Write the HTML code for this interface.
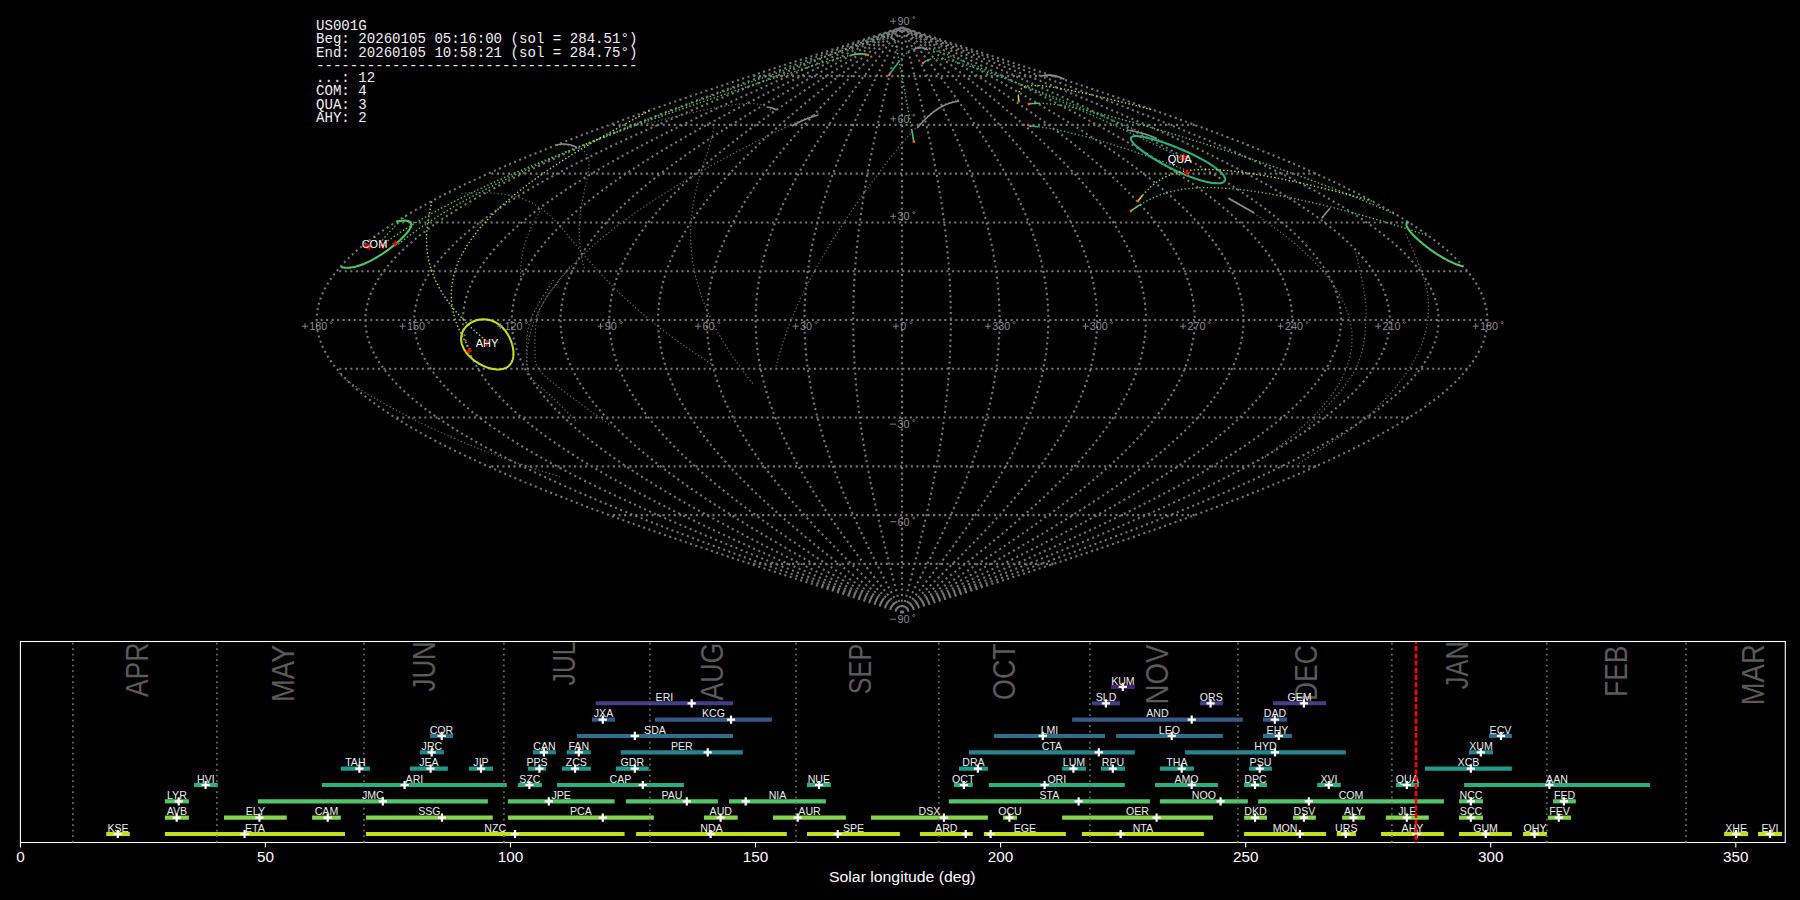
<!DOCTYPE html><html><head><meta charset="utf-8"><style>html,body{margin:0;padding:0;background:#000;width:1800px;height:900px;overflow:hidden}svg{display:block}</style></head><body>
<svg width="1800" height="900" viewBox="0 0 1800 900">
<rect width="1800" height="900" fill="#000"/>
<path d="M902.00 612.68 L907.11 611.05 L912.22 609.43 L917.32 607.80 L922.43 606.18 L927.53 604.55 L932.64 602.92 L937.74 601.30 L942.83 599.67 L947.93 598.05 L953.02 596.42 L958.10 594.79 L963.19 593.17 L968.26 591.54 L973.34 589.92 L978.40 588.29 L983.47 586.66 L988.52 585.04 L993.57 583.41 L998.61 581.79 L1003.65 580.16 L1008.67 578.53 L1013.69 576.91 L1018.70 575.28 L1023.70 573.66 L1028.70 572.03 L1033.68 570.40 L1038.65 568.78 L1043.61 567.15 L1048.56 565.53 L1053.50 563.90 L1058.43 562.27 L1063.35 560.65 L1068.25 559.02 L1073.14 557.40 L1078.02 555.77 L1082.89 554.14 L1087.74 552.52 L1092.57 550.89 L1097.40 549.27 L1102.20 547.64 L1107.00 546.01 L1111.77 544.39 L1116.54 542.76 L1121.28 541.14 L1126.01 539.51 L1130.72 537.88 L1135.41 536.26 L1140.09 534.63 L1144.74 533.01 L1149.38 531.38 L1154.00 529.75 L1158.60 528.13 L1163.19 526.50 L1167.75 524.88 L1172.29 523.25 L1176.81 521.62 L1181.31 520.00 L1185.79 518.37 L1190.25 516.75 L1194.68 515.12 L1199.09 513.49 L1203.48 511.87 L1207.85 510.24 L1212.19 508.62 L1216.51 506.99 L1220.81 505.36 L1225.08 503.74 L1229.33 502.11 L1233.55 500.49 L1237.75 498.86 L1241.92 497.23 L1246.07 495.61 L1250.19 493.98 L1254.28 492.36 L1258.34 490.73 L1262.38 489.10 L1266.40 487.48 L1270.38 485.85 L1274.33 484.23 L1278.26 482.60 L1282.16 480.97 L1286.03 479.35 L1289.87 477.72 L1293.68 476.10 L1297.46 474.47 L1301.21 472.84 L1304.94 471.22 L1308.63 469.59 L1312.28 467.97 L1315.91 466.34 L1319.51 464.71 L1323.07 463.09 L1326.61 461.46 L1330.11 459.84 L1333.57 458.21 L1337.01 456.58 L1340.41 454.96 L1343.78 453.33 L1347.11 451.71 L1350.41 450.08 L1353.68 448.45 L1356.91 446.83 L1360.11 445.20 L1363.27 443.58 L1366.40 441.95 L1369.49 440.32 L1372.55 438.70 L1375.57 437.07 L1378.55 435.45 L1381.50 433.82 L1384.41 432.19 L1387.29 430.57 L1390.12 428.94 L1392.92 427.32 L1395.69 425.69 L1398.41 424.06 L1401.10 422.44 L1403.75 420.81 L1406.36 419.19 L1408.94 417.56 L1411.47 415.93 L1413.97 414.31 L1416.42 412.68 L1418.84 411.06 L1421.22 409.43 L1423.56 407.80 L1425.86 406.18 L1428.12 404.55 L1430.34 402.93 L1432.52 401.30 L1434.65 399.67 L1436.75 398.05 L1438.81 396.42 L1440.83 394.80 L1442.80 393.17 L1444.74 391.54 L1446.63 389.92 L1448.48 388.29 L1450.29 386.67 L1452.06 385.04 L1453.78 383.41 L1455.47 381.79 L1457.11 380.16 L1458.71 378.54 L1460.27 376.91 L1461.78 375.28 L1463.25 373.66 L1464.68 372.03 L1466.07 370.41 L1467.41 368.78 L1468.71 367.15 L1469.97 365.53 L1471.19 363.90 L1472.36 362.28 L1473.48 360.65 L1474.57 359.02 L1475.61 357.40 L1476.61 355.77 L1477.56 354.15 L1478.47 352.52 L1479.33 350.89 L1480.15 349.27 L1480.93 347.64 L1481.66 346.02 L1482.35 344.39 L1483.00 342.76 L1483.60 341.14 L1484.15 339.51 L1484.67 337.89 L1485.13 336.26 L1485.56 334.63 L1485.93 333.01 L1486.27 331.38 L1486.56 329.76 L1486.80 328.13 L1487.00 326.50 L1487.16 324.88 L1487.27 323.25 L1487.34 321.63 L1487.36 320.00 L1487.34 318.37 L1487.27 316.75 L1487.16 315.12 L1487.00 313.50 L1486.80 311.87 L1486.56 310.24 L1486.27 308.62 L1485.93 306.99 L1485.56 305.37 L1485.13 303.74 L1484.67 302.11 L1484.15 300.49 L1483.60 298.86 L1483.00 297.24 L1482.35 295.61 L1481.66 293.98 L1480.93 292.36 L1480.15 290.73 L1479.33 289.11 L1478.47 287.48 L1477.56 285.85 L1476.61 284.23 L1475.61 282.60 L1474.57 280.98 L1473.48 279.35 L1472.36 277.72 L1471.19 276.10 L1469.97 274.47 L1468.71 272.85 L1467.41 271.22 L1466.07 269.59 L1464.68 267.97 L1463.25 266.34 L1461.78 264.72 L1460.27 263.09 L1458.71 261.46 L1457.11 259.84 L1455.47 258.21 L1453.78 256.59 L1452.06 254.96 L1450.29 253.33 L1448.48 251.71 L1446.63 250.08 L1444.74 248.46 L1442.80 246.83 L1440.83 245.20 L1438.81 243.58 L1436.75 241.95 L1434.65 240.33 L1432.52 238.70 L1430.34 237.07 L1428.12 235.45 L1425.86 233.82 L1423.56 232.20 L1421.22 230.57 L1418.84 228.94 L1416.42 227.32 L1413.97 225.69 L1411.47 224.07 L1408.94 222.44 L1406.36 220.81 L1403.75 219.19 L1401.10 217.56 L1398.41 215.94 L1395.69 214.31 L1392.92 212.68 L1390.12 211.06 L1387.29 209.43 L1384.41 207.81 L1381.50 206.18 L1378.55 204.55 L1375.57 202.93 L1372.55 201.30 L1369.49 199.68 L1366.40 198.05 L1363.27 196.42 L1360.11 194.80 L1356.91 193.17 L1353.68 191.55 L1350.41 189.92 L1347.11 188.29 L1343.78 186.67 L1340.41 185.04 L1337.01 183.42 L1333.57 181.79 L1330.11 180.16 L1326.61 178.54 L1323.07 176.91 L1319.51 175.29 L1315.91 173.66 L1312.28 172.03 L1308.63 170.41 L1304.94 168.78 L1301.21 167.16 L1297.46 165.53 L1293.68 163.90 L1289.87 162.28 L1286.03 160.65 L1282.16 159.03 L1278.26 157.40 L1274.33 155.77 L1270.38 154.15 L1266.40 152.52 L1262.38 150.90 L1258.34 149.27 L1254.28 147.64 L1250.19 146.02 L1246.07 144.39 L1241.92 142.77 L1237.75 141.14 L1233.55 139.51 L1229.33 137.89 L1225.08 136.26 L1220.81 134.64 L1216.51 133.01 L1212.19 131.38 L1207.85 129.76 L1203.48 128.13 L1199.09 126.51 L1194.68 124.88 L1190.25 123.25 L1185.79 121.63 L1181.31 120.00 L1176.81 118.38 L1172.29 116.75 L1167.75 115.12 L1163.19 113.50 L1158.60 111.87 L1154.00 110.25 L1149.38 108.62 L1144.74 106.99 L1140.09 105.37 L1135.41 103.74 L1130.72 102.12 L1126.01 100.49 L1121.28 98.86 L1116.54 97.24 L1111.77 95.61 L1107.00 93.99 L1102.20 92.36 L1097.40 90.73 L1092.57 89.11 L1087.74 87.48 L1082.89 85.86 L1078.02 84.23 L1073.14 82.60 L1068.25 80.98 L1063.35 79.35 L1058.43 77.73 L1053.50 76.10 L1048.56 74.47 L1043.61 72.85 L1038.65 71.22 L1033.68 69.60 L1028.70 67.97 L1023.70 66.34 L1018.70 64.72 L1013.69 63.09 L1008.67 61.47 L1003.65 59.84 L998.61 58.21 L993.57 56.59 L988.52 54.96 L983.47 53.34 L978.40 51.71 L973.34 50.08 L968.26 48.46 L963.19 46.83 L958.10 45.21 L953.02 43.58 L947.93 41.95 L942.83 40.33 L937.74 38.70 L932.64 37.08 L927.53 35.45 L922.43 33.82 L917.32 32.20 L912.22 30.57 L907.11 28.95 L902.00 27.32 M902.00 612.68 L906.68 611.05 L911.36 609.43 L916.05 607.80 L920.73 606.18 L925.41 604.55 L930.08 602.92 L934.76 601.30 L939.43 599.67 L944.10 598.05 L948.77 596.42 L953.43 594.79 L958.09 593.17 L962.74 591.54 L967.39 589.92 L972.04 588.29 L976.68 586.66 L981.31 585.04 L985.94 583.41 L990.56 581.79 L995.18 580.16 L999.78 578.53 L1004.38 576.91 L1008.98 575.28 L1013.56 573.66 L1018.14 572.03 L1022.70 570.40 L1027.26 568.78 L1031.81 567.15 L1036.35 565.53 L1040.88 563.90 L1045.39 562.27 L1049.90 560.65 L1054.40 559.02 L1058.88 557.40 L1063.35 555.77 L1067.81 554.14 L1072.26 552.52 L1076.69 550.89 L1081.11 549.27 L1085.52 547.64 L1089.91 546.01 L1094.29 544.39 L1098.66 542.76 L1103.01 541.14 L1107.34 539.51 L1111.66 537.88 L1115.96 536.26 L1120.25 534.63 L1124.52 533.01 L1128.77 531.38 L1133.00 529.75 L1137.22 528.13 L1141.42 526.50 L1145.60 524.88 L1149.77 523.25 L1153.91 521.62 L1158.03 520.00 L1162.14 518.37 L1166.22 516.75 L1170.29 515.12 L1174.33 513.49 L1178.36 511.87 L1182.36 510.24 L1186.34 508.62 L1190.30 506.99 L1194.24 505.36 L1198.16 503.74 L1202.05 502.11 L1205.92 500.49 L1209.77 498.86 L1213.59 497.23 L1217.39 495.61 L1221.17 493.98 L1224.92 492.36 L1228.65 490.73 L1232.35 489.10 L1236.03 487.48 L1239.68 485.85 L1243.31 484.23 L1246.91 482.60 L1250.48 480.97 L1254.03 479.35 L1257.55 477.72 L1261.04 476.10 L1264.51 474.47 L1267.95 472.84 L1271.36 471.22 L1274.74 469.59 L1278.09 467.97 L1281.42 466.34 L1284.72 464.71 L1287.98 463.09 L1291.22 461.46 L1294.43 459.84 L1297.61 458.21 L1300.76 456.58 L1303.87 454.96 L1306.96 453.33 L1310.02 451.71 L1313.04 450.08 L1316.04 448.45 L1319.00 446.83 L1321.93 445.20 L1324.83 443.58 L1327.70 441.95 L1330.53 440.32 L1333.33 438.70 L1336.10 437.07 L1338.84 435.45 L1341.54 433.82 L1344.21 432.19 L1346.84 430.57 L1349.45 428.94 L1352.01 427.32 L1354.55 425.69 L1357.05 424.06 L1359.51 422.44 L1361.94 420.81 L1364.33 419.19 L1366.69 417.56 L1369.02 415.93 L1371.30 414.31 L1373.56 412.68 L1375.77 411.06 L1377.95 409.43 L1380.10 407.80 L1382.20 406.18 L1384.27 404.55 L1386.31 402.93 L1388.31 401.30 L1390.27 399.67 L1392.19 398.05 L1394.08 396.42 L1395.92 394.80 L1397.74 393.17 L1399.51 391.54 L1401.24 389.92 L1402.94 388.29 L1404.60 386.67 L1406.22 385.04 L1407.80 383.41 L1409.35 381.79 L1410.85 380.16 L1412.32 378.54 L1413.75 376.91 L1415.13 375.28 L1416.48 373.66 L1417.79 372.03 L1419.06 370.41 L1420.30 368.78 L1421.49 367.15 L1422.64 365.53 L1423.75 363.90 L1424.83 362.28 L1425.86 360.65 L1426.85 359.02 L1427.81 357.40 L1428.72 355.77 L1429.59 354.15 L1430.43 352.52 L1431.22 350.89 L1431.97 349.27 L1432.69 347.64 L1433.36 346.02 L1433.99 344.39 L1434.58 342.76 L1435.13 341.14 L1435.64 339.51 L1436.11 337.89 L1436.54 336.26 L1436.93 334.63 L1437.27 333.01 L1437.58 331.38 L1437.84 329.76 L1438.07 328.13 L1438.25 326.50 L1438.40 324.88 L1438.50 323.25 L1438.56 321.63 L1438.58 320.00 L1438.56 318.37 L1438.50 316.75 L1438.40 315.12 L1438.25 313.50 L1438.07 311.87 L1437.84 310.24 L1437.58 308.62 L1437.27 306.99 L1436.93 305.37 L1436.54 303.74 L1436.11 302.11 L1435.64 300.49 L1435.13 298.86 L1434.58 297.24 L1433.99 295.61 L1433.36 293.98 L1432.69 292.36 L1431.97 290.73 L1431.22 289.11 L1430.43 287.48 L1429.59 285.85 L1428.72 284.23 L1427.81 282.60 L1426.85 280.98 L1425.86 279.35 L1424.83 277.72 L1423.75 276.10 L1422.64 274.47 L1421.49 272.85 L1420.30 271.22 L1419.06 269.59 L1417.79 267.97 L1416.48 266.34 L1415.13 264.72 L1413.75 263.09 L1412.32 261.46 L1410.85 259.84 L1409.35 258.21 L1407.80 256.59 L1406.22 254.96 L1404.60 253.33 L1402.94 251.71 L1401.24 250.08 L1399.51 248.46 L1397.74 246.83 L1395.92 245.20 L1394.08 243.58 L1392.19 241.95 L1390.27 240.33 L1388.31 238.70 L1386.31 237.07 L1384.27 235.45 L1382.20 233.82 L1380.10 232.20 L1377.95 230.57 L1375.77 228.94 L1373.56 227.32 L1371.30 225.69 L1369.02 224.07 L1366.69 222.44 L1364.33 220.81 L1361.94 219.19 L1359.51 217.56 L1357.05 215.94 L1354.55 214.31 L1352.01 212.68 L1349.45 211.06 L1346.84 209.43 L1344.21 207.81 L1341.54 206.18 L1338.84 204.55 L1336.10 202.93 L1333.33 201.30 L1330.53 199.68 L1327.70 198.05 L1324.83 196.42 L1321.93 194.80 L1319.00 193.17 L1316.04 191.55 L1313.04 189.92 L1310.02 188.29 L1306.96 186.67 L1303.87 185.04 L1300.76 183.42 L1297.61 181.79 L1294.43 180.16 L1291.22 178.54 L1287.98 176.91 L1284.72 175.29 L1281.42 173.66 L1278.09 172.03 L1274.74 170.41 L1271.36 168.78 L1267.95 167.16 L1264.51 165.53 L1261.04 163.90 L1257.55 162.28 L1254.03 160.65 L1250.48 159.03 L1246.91 157.40 L1243.31 155.77 L1239.68 154.15 L1236.03 152.52 L1232.35 150.90 L1228.65 149.27 L1224.92 147.64 L1221.17 146.02 L1217.39 144.39 L1213.59 142.77 L1209.77 141.14 L1205.92 139.51 L1202.05 137.89 L1198.16 136.26 L1194.24 134.64 L1190.30 133.01 L1186.34 131.38 L1182.36 129.76 L1178.36 128.13 L1174.33 126.51 L1170.29 124.88 L1166.22 123.25 L1162.14 121.63 L1158.03 120.00 L1153.91 118.38 L1149.77 116.75 L1145.60 115.12 L1141.42 113.50 L1137.22 111.87 L1133.00 110.25 L1128.77 108.62 L1124.52 106.99 L1120.25 105.37 L1115.96 103.74 L1111.66 102.12 L1107.34 100.49 L1103.01 98.86 L1098.66 97.24 L1094.29 95.61 L1089.91 93.99 L1085.52 92.36 L1081.11 90.73 L1076.69 89.11 L1072.26 87.48 L1067.81 85.86 L1063.35 84.23 L1058.88 82.60 L1054.40 80.98 L1049.90 79.35 L1045.39 77.73 L1040.88 76.10 L1036.35 74.47 L1031.81 72.85 L1027.26 71.22 L1022.70 69.60 L1018.14 67.97 L1013.56 66.34 L1008.98 64.72 L1004.38 63.09 L999.78 61.47 L995.18 59.84 L990.56 58.21 L985.94 56.59 L981.31 54.96 L976.68 53.34 L972.04 51.71 L967.39 50.08 L962.74 48.46 L958.09 46.83 L953.43 45.21 L948.77 43.58 L944.10 41.95 L939.43 40.33 L934.76 38.70 L930.08 37.08 L925.41 35.45 L920.73 33.82 L916.05 32.20 L911.36 30.57 L906.68 28.95 L902.00 27.32 M902.00 612.68 L906.26 611.05 L910.51 609.43 L914.77 607.80 L919.02 606.18 L923.28 604.55 L927.53 602.92 L931.78 601.30 L936.03 599.67 L940.27 598.05 L944.51 596.42 L948.75 594.79 L952.99 593.17 L957.22 591.54 L961.45 589.92 L965.67 588.29 L969.89 586.66 L974.10 585.04 L978.31 583.41 L982.51 581.79 L986.71 580.16 L990.89 578.53 L995.08 576.91 L999.25 575.28 L1003.42 573.66 L1007.58 572.03 L1011.73 570.40 L1015.87 568.78 L1020.01 567.15 L1024.14 565.53 L1028.25 563.90 L1032.36 562.27 L1036.46 560.65 L1040.54 559.02 L1044.62 557.40 L1048.68 555.77 L1052.74 554.14 L1056.78 552.52 L1060.81 550.89 L1064.83 549.27 L1068.84 547.64 L1072.83 546.01 L1076.81 544.39 L1080.78 542.76 L1084.73 541.14 L1088.67 539.51 L1092.60 537.88 L1096.51 536.26 L1100.41 534.63 L1104.29 533.01 L1108.15 531.38 L1112.00 529.75 L1115.84 528.13 L1119.66 526.50 L1123.46 524.88 L1127.24 523.25 L1131.01 521.62 L1134.76 520.00 L1138.49 518.37 L1142.20 516.75 L1145.90 515.12 L1149.58 513.49 L1153.24 511.87 L1156.87 510.24 L1160.49 508.62 L1164.09 506.99 L1167.67 505.36 L1171.23 503.74 L1174.77 502.11 L1178.29 500.49 L1181.79 498.86 L1185.27 497.23 L1188.72 495.61 L1192.15 493.98 L1195.57 492.36 L1198.95 490.73 L1202.32 489.10 L1205.66 487.48 L1208.98 485.85 L1212.28 484.23 L1215.55 482.60 L1218.80 480.97 L1222.03 479.35 L1225.23 477.72 L1228.40 476.10 L1231.55 474.47 L1234.68 472.84 L1237.78 471.22 L1240.85 469.59 L1243.90 467.97 L1246.93 466.34 L1249.92 464.71 L1252.89 463.09 L1255.84 461.46 L1258.75 459.84 L1261.64 458.21 L1264.51 456.58 L1267.34 454.96 L1270.15 453.33 L1272.93 451.71 L1275.68 450.08 L1278.40 448.45 L1281.09 446.83 L1283.76 445.20 L1286.39 443.58 L1289.00 441.95 L1291.57 440.32 L1294.12 438.70 L1296.64 437.07 L1299.13 435.45 L1301.58 433.82 L1304.01 432.19 L1306.40 430.57 L1308.77 428.94 L1311.10 427.32 L1313.41 425.69 L1315.68 424.06 L1317.92 422.44 L1320.13 420.81 L1322.30 419.19 L1324.45 417.56 L1326.56 415.93 L1328.64 414.31 L1330.69 412.68 L1332.70 411.06 L1334.68 409.43 L1336.63 407.80 L1338.55 406.18 L1340.43 404.55 L1342.28 402.93 L1344.10 401.30 L1345.88 399.67 L1347.63 398.05 L1349.34 396.42 L1351.02 394.80 L1352.67 393.17 L1354.28 391.54 L1355.86 389.92 L1357.40 388.29 L1358.91 386.67 L1360.38 385.04 L1361.82 383.41 L1363.22 381.79 L1364.59 380.16 L1365.93 378.54 L1367.22 376.91 L1368.49 375.28 L1369.71 373.66 L1370.90 372.03 L1372.06 370.41 L1373.18 368.78 L1374.26 367.15 L1375.31 365.53 L1376.32 363.90 L1377.30 362.28 L1378.24 360.65 L1379.14 359.02 L1380.01 357.40 L1380.84 355.77 L1381.63 354.15 L1382.39 352.52 L1383.11 350.89 L1383.79 349.27 L1384.44 347.64 L1385.05 346.02 L1385.63 344.39 L1386.16 342.76 L1386.66 341.14 L1387.13 339.51 L1387.55 337.89 L1387.94 336.26 L1388.30 334.63 L1388.61 333.01 L1388.89 331.38 L1389.13 329.76 L1389.34 328.13 L1389.50 326.50 L1389.63 324.88 L1389.73 323.25 L1389.78 321.63 L1389.80 320.00 L1389.78 318.37 L1389.73 316.75 L1389.63 315.12 L1389.50 313.50 L1389.34 311.87 L1389.13 310.24 L1388.89 308.62 L1388.61 306.99 L1388.30 305.37 L1387.94 303.74 L1387.55 302.11 L1387.13 300.49 L1386.66 298.86 L1386.16 297.24 L1385.63 295.61 L1385.05 293.98 L1384.44 292.36 L1383.79 290.73 L1383.11 289.11 L1382.39 287.48 L1381.63 285.85 L1380.84 284.23 L1380.01 282.60 L1379.14 280.98 L1378.24 279.35 L1377.30 277.72 L1376.32 276.10 L1375.31 274.47 L1374.26 272.85 L1373.18 271.22 L1372.06 269.59 L1370.90 267.97 L1369.71 266.34 L1368.49 264.72 L1367.22 263.09 L1365.93 261.46 L1364.59 259.84 L1363.22 258.21 L1361.82 256.59 L1360.38 254.96 L1358.91 253.33 L1357.40 251.71 L1355.86 250.08 L1354.28 248.46 L1352.67 246.83 L1351.02 245.20 L1349.34 243.58 L1347.63 241.95 L1345.88 240.33 L1344.10 238.70 L1342.28 237.07 L1340.43 235.45 L1338.55 233.82 L1336.63 232.20 L1334.68 230.57 L1332.70 228.94 L1330.69 227.32 L1328.64 225.69 L1326.56 224.07 L1324.45 222.44 L1322.30 220.81 L1320.13 219.19 L1317.92 217.56 L1315.68 215.94 L1313.41 214.31 L1311.10 212.68 L1308.77 211.06 L1306.40 209.43 L1304.01 207.81 L1301.58 206.18 L1299.13 204.55 L1296.64 202.93 L1294.12 201.30 L1291.57 199.68 L1289.00 198.05 L1286.39 196.42 L1283.76 194.80 L1281.09 193.17 L1278.40 191.55 L1275.68 189.92 L1272.93 188.29 L1270.15 186.67 L1267.34 185.04 L1264.51 183.42 L1261.64 181.79 L1258.75 180.16 L1255.84 178.54 L1252.89 176.91 L1249.92 175.29 L1246.93 173.66 L1243.90 172.03 L1240.85 170.41 L1237.78 168.78 L1234.68 167.16 L1231.55 165.53 L1228.40 163.90 L1225.23 162.28 L1222.03 160.65 L1218.80 159.03 L1215.55 157.40 L1212.28 155.77 L1208.98 154.15 L1205.66 152.52 L1202.32 150.90 L1198.95 149.27 L1195.57 147.64 L1192.15 146.02 L1188.72 144.39 L1185.27 142.77 L1181.79 141.14 L1178.29 139.51 L1174.77 137.89 L1171.23 136.26 L1167.67 134.64 L1164.09 133.01 L1160.49 131.38 L1156.87 129.76 L1153.24 128.13 L1149.58 126.51 L1145.90 124.88 L1142.20 123.25 L1138.49 121.63 L1134.76 120.00 L1131.01 118.38 L1127.24 116.75 L1123.46 115.12 L1119.66 113.50 L1115.84 111.87 L1112.00 110.25 L1108.15 108.62 L1104.29 106.99 L1100.41 105.37 L1096.51 103.74 L1092.60 102.12 L1088.67 100.49 L1084.73 98.86 L1080.78 97.24 L1076.81 95.61 L1072.83 93.99 L1068.84 92.36 L1064.83 90.73 L1060.81 89.11 L1056.78 87.48 L1052.74 85.86 L1048.68 84.23 L1044.62 82.60 L1040.54 80.98 L1036.46 79.35 L1032.36 77.73 L1028.25 76.10 L1024.14 74.47 L1020.01 72.85 L1015.87 71.22 L1011.73 69.60 L1007.58 67.97 L1003.42 66.34 L999.25 64.72 L995.08 63.09 L990.89 61.47 L986.71 59.84 L982.51 58.21 L978.31 56.59 L974.10 54.96 L969.89 53.34 L965.67 51.71 L961.45 50.08 L957.22 48.46 L952.99 46.83 L948.75 45.21 L944.51 43.58 L940.27 41.95 L936.03 40.33 L931.78 38.70 L927.53 37.08 L923.28 35.45 L919.02 33.82 L914.77 32.20 L910.51 30.57 L906.26 28.95 L902.00 27.32 M902.00 612.68 L905.83 611.05 L909.66 609.43 L913.49 607.80 L917.32 606.18 L921.15 604.55 L924.98 602.92 L928.80 601.30 L932.62 599.67 L936.45 598.05 L940.26 596.42 L944.08 594.79 L947.89 593.17 L951.70 591.54 L955.50 589.92 L959.30 588.29 L963.10 586.66 L966.89 585.04 L970.68 583.41 L974.46 581.79 L978.24 580.16 L982.01 578.53 L985.77 576.91 L989.53 575.28 L993.28 573.66 L997.02 572.03 L1000.76 570.40 L1004.49 568.78 L1008.21 567.15 L1011.92 565.53 L1015.63 563.90 L1019.32 562.27 L1023.01 560.65 L1026.69 559.02 L1030.36 557.40 L1034.02 555.77 L1037.66 554.14 L1041.30 552.52 L1044.93 550.89 L1048.55 549.27 L1052.15 547.64 L1055.75 546.01 L1059.33 544.39 L1062.90 542.76 L1066.46 541.14 L1070.01 539.51 L1073.54 537.88 L1077.06 536.26 L1080.57 534.63 L1084.06 533.01 L1087.54 531.38 L1091.00 529.75 L1094.45 528.13 L1097.89 526.50 L1101.31 524.88 L1104.72 523.25 L1108.11 521.62 L1111.48 520.00 L1114.84 518.37 L1118.18 516.75 L1121.51 515.12 L1124.82 513.49 L1128.11 511.87 L1131.39 510.24 L1134.65 508.62 L1137.89 506.99 L1141.11 505.36 L1144.31 503.74 L1147.50 502.11 L1150.66 500.49 L1153.81 498.86 L1156.94 497.23 L1160.05 495.61 L1163.14 493.98 L1166.21 492.36 L1169.26 490.73 L1172.29 489.10 L1175.30 487.48 L1178.28 485.85 L1181.25 484.23 L1184.20 482.60 L1187.12 480.97 L1190.02 479.35 L1192.90 477.72 L1195.76 476.10 L1198.60 474.47 L1201.41 472.84 L1204.20 471.22 L1206.97 469.59 L1209.71 467.97 L1212.43 466.34 L1215.13 464.71 L1217.80 463.09 L1220.45 461.46 L1223.08 459.84 L1225.68 458.21 L1228.26 456.58 L1230.81 454.96 L1233.33 453.33 L1235.83 451.71 L1238.31 450.08 L1240.76 448.45 L1243.18 446.83 L1245.58 445.20 L1247.95 443.58 L1250.30 441.95 L1252.62 440.32 L1254.91 438.70 L1257.17 437.07 L1259.41 435.45 L1261.62 433.82 L1263.81 432.19 L1265.96 430.57 L1268.09 428.94 L1270.19 427.32 L1272.27 425.69 L1274.31 424.06 L1276.33 422.44 L1278.31 420.81 L1280.27 419.19 L1282.20 417.56 L1284.10 415.93 L1285.98 414.31 L1287.82 412.68 L1289.63 411.06 L1291.42 409.43 L1293.17 407.80 L1294.89 406.18 L1296.59 404.55 L1298.25 402.93 L1299.89 401.30 L1301.49 399.67 L1303.06 398.05 L1304.61 396.42 L1306.12 394.80 L1307.60 393.17 L1309.05 391.54 L1310.47 389.92 L1311.86 388.29 L1313.22 386.67 L1314.54 385.04 L1315.84 383.41 L1317.10 381.79 L1318.33 380.16 L1319.53 378.54 L1320.70 376.91 L1321.84 375.28 L1322.94 373.66 L1324.01 372.03 L1325.05 370.41 L1326.06 368.78 L1327.04 367.15 L1327.98 365.53 L1328.89 363.90 L1329.77 362.28 L1330.61 360.65 L1331.43 359.02 L1332.21 357.40 L1332.95 355.77 L1333.67 354.15 L1334.35 352.52 L1335.00 350.89 L1335.61 349.27 L1336.20 347.64 L1336.75 346.02 L1337.26 344.39 L1337.75 342.76 L1338.20 341.14 L1338.62 339.51 L1339.00 337.89 L1339.35 336.26 L1339.67 334.63 L1339.95 333.01 L1340.20 331.38 L1340.42 329.76 L1340.60 328.13 L1340.75 326.50 L1340.87 324.88 L1340.95 323.25 L1341.00 321.63 L1341.02 320.00 L1341.00 318.37 L1340.95 316.75 L1340.87 315.12 L1340.75 313.50 L1340.60 311.87 L1340.42 310.24 L1340.20 308.62 L1339.95 306.99 L1339.67 305.37 L1339.35 303.74 L1339.00 302.11 L1338.62 300.49 L1338.20 298.86 L1337.75 297.24 L1337.26 295.61 L1336.75 293.98 L1336.20 292.36 L1335.61 290.73 L1335.00 289.11 L1334.35 287.48 L1333.67 285.85 L1332.95 284.23 L1332.21 282.60 L1331.43 280.98 L1330.61 279.35 L1329.77 277.72 L1328.89 276.10 L1327.98 274.47 L1327.04 272.85 L1326.06 271.22 L1325.05 269.59 L1324.01 267.97 L1322.94 266.34 L1321.84 264.72 L1320.70 263.09 L1319.53 261.46 L1318.33 259.84 L1317.10 258.21 L1315.84 256.59 L1314.54 254.96 L1313.22 253.33 L1311.86 251.71 L1310.47 250.08 L1309.05 248.46 L1307.60 246.83 L1306.12 245.20 L1304.61 243.58 L1303.06 241.95 L1301.49 240.33 L1299.89 238.70 L1298.25 237.07 L1296.59 235.45 L1294.89 233.82 L1293.17 232.20 L1291.42 230.57 L1289.63 228.94 L1287.82 227.32 L1285.98 225.69 L1284.10 224.07 L1282.20 222.44 L1280.27 220.81 L1278.31 219.19 L1276.33 217.56 L1274.31 215.94 L1272.27 214.31 L1270.19 212.68 L1268.09 211.06 L1265.96 209.43 L1263.81 207.81 L1261.62 206.18 L1259.41 204.55 L1257.17 202.93 L1254.91 201.30 L1252.62 199.68 L1250.30 198.05 L1247.95 196.42 L1245.58 194.80 L1243.18 193.17 L1240.76 191.55 L1238.31 189.92 L1235.83 188.29 L1233.33 186.67 L1230.81 185.04 L1228.26 183.42 L1225.68 181.79 L1223.08 180.16 L1220.45 178.54 L1217.80 176.91 L1215.13 175.29 L1212.43 173.66 L1209.71 172.03 L1206.97 170.41 L1204.20 168.78 L1201.41 167.16 L1198.60 165.53 L1195.76 163.90 L1192.90 162.28 L1190.02 160.65 L1187.12 159.03 L1184.20 157.40 L1181.25 155.77 L1178.28 154.15 L1175.30 152.52 L1172.29 150.90 L1169.26 149.27 L1166.21 147.64 L1163.14 146.02 L1160.05 144.39 L1156.94 142.77 L1153.81 141.14 L1150.66 139.51 L1147.50 137.89 L1144.31 136.26 L1141.11 134.64 L1137.89 133.01 L1134.65 131.38 L1131.39 129.76 L1128.11 128.13 L1124.82 126.51 L1121.51 124.88 L1118.18 123.25 L1114.84 121.63 L1111.48 120.00 L1108.11 118.38 L1104.72 116.75 L1101.31 115.12 L1097.89 113.50 L1094.45 111.87 L1091.00 110.25 L1087.54 108.62 L1084.06 106.99 L1080.57 105.37 L1077.06 103.74 L1073.54 102.12 L1070.01 100.49 L1066.46 98.86 L1062.90 97.24 L1059.33 95.61 L1055.75 93.99 L1052.15 92.36 L1048.55 90.73 L1044.93 89.11 L1041.30 87.48 L1037.66 85.86 L1034.02 84.23 L1030.36 82.60 L1026.69 80.98 L1023.01 79.35 L1019.32 77.73 L1015.63 76.10 L1011.92 74.47 L1008.21 72.85 L1004.49 71.22 L1000.76 69.60 L997.02 67.97 L993.28 66.34 L989.53 64.72 L985.77 63.09 L982.01 61.47 L978.24 59.84 L974.46 58.21 L970.68 56.59 L966.89 54.96 L963.10 53.34 L959.30 51.71 L955.50 50.08 L951.70 48.46 L947.89 46.83 L944.08 45.21 L940.26 43.58 L936.45 41.95 L932.62 40.33 L928.80 38.70 L924.98 37.08 L921.15 35.45 L917.32 33.82 L913.49 32.20 L909.66 30.57 L905.83 28.95 L902.00 27.32 M902.00 612.68 L905.41 611.05 L908.81 609.43 L912.22 607.80 L915.62 606.18 L919.02 604.55 L922.42 602.92 L925.82 601.30 L929.22 599.67 L932.62 598.05 L936.01 596.42 L939.40 594.79 L942.79 593.17 L946.18 591.54 L949.56 589.92 L952.94 588.29 L956.31 586.66 L959.68 585.04 L963.05 583.41 L966.41 581.79 L969.76 580.16 L973.12 578.53 L976.46 576.91 L979.80 575.28 L983.14 573.66 L986.46 572.03 L989.78 570.40 L993.10 568.78 L996.41 567.15 L999.71 565.53 L1003.00 563.90 L1006.29 562.27 L1009.56 560.65 L1012.83 559.02 L1016.10 557.40 L1019.35 555.77 L1022.59 554.14 L1025.82 552.52 L1029.05 550.89 L1032.26 549.27 L1035.47 547.64 L1038.66 546.01 L1041.85 544.39 L1045.02 542.76 L1048.19 541.14 L1051.34 539.51 L1054.48 537.88 L1057.61 536.26 L1060.72 534.63 L1063.83 533.01 L1066.92 531.38 L1070.00 529.75 L1073.07 528.13 L1076.12 526.50 L1079.17 524.88 L1082.19 523.25 L1085.21 521.62 L1088.21 520.00 L1091.19 518.37 L1094.16 516.75 L1097.12 515.12 L1100.06 513.49 L1102.99 511.87 L1105.90 510.24 L1108.80 508.62 L1111.68 506.99 L1114.54 505.36 L1117.39 503.74 L1120.22 502.11 L1123.03 500.49 L1125.83 498.86 L1128.61 497.23 L1131.38 495.61 L1134.12 493.98 L1136.85 492.36 L1139.56 490.73 L1142.26 489.10 L1144.93 487.48 L1147.59 485.85 L1150.22 484.23 L1152.84 482.60 L1155.44 480.97 L1158.02 479.35 L1160.58 477.72 L1163.12 476.10 L1165.64 474.47 L1168.14 472.84 L1170.62 471.22 L1173.08 469.59 L1175.52 467.97 L1177.94 466.34 L1180.34 464.71 L1182.72 463.09 L1185.07 461.46 L1187.40 459.84 L1189.72 458.21 L1192.00 456.58 L1194.27 454.96 L1196.52 453.33 L1198.74 451.71 L1200.94 450.08 L1203.12 448.45 L1205.27 446.83 L1207.41 445.20 L1209.51 443.58 L1211.60 441.95 L1213.66 440.32 L1215.70 438.70 L1217.71 437.07 L1219.70 435.45 L1221.67 433.82 L1223.61 432.19 L1225.52 430.57 L1227.42 428.94 L1229.28 427.32 L1231.13 425.69 L1232.94 424.06 L1234.73 422.44 L1236.50 420.81 L1238.24 419.19 L1239.96 417.56 L1241.65 415.93 L1243.31 414.31 L1244.95 412.68 L1246.56 411.06 L1248.15 409.43 L1249.71 407.80 L1251.24 406.18 L1252.75 404.55 L1254.22 402.93 L1255.68 401.30 L1257.10 399.67 L1258.50 398.05 L1259.87 396.42 L1261.22 394.80 L1262.53 393.17 L1263.82 391.54 L1265.09 389.92 L1266.32 388.29 L1267.53 386.67 L1268.71 385.04 L1269.86 383.41 L1270.98 381.79 L1272.07 380.16 L1273.14 378.54 L1274.18 376.91 L1275.19 375.28 L1276.17 373.66 L1277.12 372.03 L1278.05 370.41 L1278.94 368.78 L1279.81 367.15 L1280.65 365.53 L1281.46 363.90 L1282.24 362.28 L1282.99 360.65 L1283.71 359.02 L1284.41 357.40 L1285.07 355.77 L1285.71 354.15 L1286.31 352.52 L1286.89 350.89 L1287.44 349.27 L1287.95 347.64 L1288.44 346.02 L1288.90 344.39 L1289.33 342.76 L1289.73 341.14 L1290.10 339.51 L1290.44 337.89 L1290.76 336.26 L1291.04 334.63 L1291.29 333.01 L1291.51 331.38 L1291.71 329.76 L1291.87 328.13 L1292.00 326.50 L1292.11 324.88 L1292.18 323.25 L1292.23 321.63 L1292.24 320.00 L1292.23 318.37 L1292.18 316.75 L1292.11 315.12 L1292.00 313.50 L1291.87 311.87 L1291.71 310.24 L1291.51 308.62 L1291.29 306.99 L1291.04 305.37 L1290.76 303.74 L1290.44 302.11 L1290.10 300.49 L1289.73 298.86 L1289.33 297.24 L1288.90 295.61 L1288.44 293.98 L1287.95 292.36 L1287.44 290.73 L1286.89 289.11 L1286.31 287.48 L1285.71 285.85 L1285.07 284.23 L1284.41 282.60 L1283.71 280.98 L1282.99 279.35 L1282.24 277.72 L1281.46 276.10 L1280.65 274.47 L1279.81 272.85 L1278.94 271.22 L1278.05 269.59 L1277.12 267.97 L1276.17 266.34 L1275.19 264.72 L1274.18 263.09 L1273.14 261.46 L1272.07 259.84 L1270.98 258.21 L1269.86 256.59 L1268.71 254.96 L1267.53 253.33 L1266.32 251.71 L1265.09 250.08 L1263.82 248.46 L1262.53 246.83 L1261.22 245.20 L1259.87 243.58 L1258.50 241.95 L1257.10 240.33 L1255.68 238.70 L1254.22 237.07 L1252.75 235.45 L1251.24 233.82 L1249.71 232.20 L1248.15 230.57 L1246.56 228.94 L1244.95 227.32 L1243.31 225.69 L1241.65 224.07 L1239.96 222.44 L1238.24 220.81 L1236.50 219.19 L1234.73 217.56 L1232.94 215.94 L1231.13 214.31 L1229.28 212.68 L1227.42 211.06 L1225.52 209.43 L1223.61 207.81 L1221.67 206.18 L1219.70 204.55 L1217.71 202.93 L1215.70 201.30 L1213.66 199.68 L1211.60 198.05 L1209.51 196.42 L1207.41 194.80 L1205.27 193.17 L1203.12 191.55 L1200.94 189.92 L1198.74 188.29 L1196.52 186.67 L1194.27 185.04 L1192.00 183.42 L1189.72 181.79 L1187.40 180.16 L1185.07 178.54 L1182.72 176.91 L1180.34 175.29 L1177.94 173.66 L1175.52 172.03 L1173.08 170.41 L1170.62 168.78 L1168.14 167.16 L1165.64 165.53 L1163.12 163.90 L1160.58 162.28 L1158.02 160.65 L1155.44 159.03 L1152.84 157.40 L1150.22 155.77 L1147.59 154.15 L1144.93 152.52 L1142.26 150.90 L1139.56 149.27 L1136.85 147.64 L1134.12 146.02 L1131.38 144.39 L1128.61 142.77 L1125.83 141.14 L1123.03 139.51 L1120.22 137.89 L1117.39 136.26 L1114.54 134.64 L1111.68 133.01 L1108.80 131.38 L1105.90 129.76 L1102.99 128.13 L1100.06 126.51 L1097.12 124.88 L1094.16 123.25 L1091.19 121.63 L1088.21 120.00 L1085.21 118.38 L1082.19 116.75 L1079.17 115.12 L1076.12 113.50 L1073.07 111.87 L1070.00 110.25 L1066.92 108.62 L1063.83 106.99 L1060.72 105.37 L1057.61 103.74 L1054.48 102.12 L1051.34 100.49 L1048.19 98.86 L1045.02 97.24 L1041.85 95.61 L1038.66 93.99 L1035.47 92.36 L1032.26 90.73 L1029.05 89.11 L1025.82 87.48 L1022.59 85.86 L1019.35 84.23 L1016.10 82.60 L1012.83 80.98 L1009.56 79.35 L1006.29 77.73 L1003.00 76.10 L999.71 74.47 L996.41 72.85 L993.10 71.22 L989.78 69.60 L986.46 67.97 L983.14 66.34 L979.80 64.72 L976.46 63.09 L973.12 61.47 L969.76 59.84 L966.41 58.21 L963.05 56.59 L959.68 54.96 L956.31 53.34 L952.94 51.71 L949.56 50.08 L946.18 48.46 L942.79 46.83 L939.40 45.21 L936.01 43.58 L932.62 41.95 L929.22 40.33 L925.82 38.70 L922.42 37.08 L919.02 35.45 L915.62 33.82 L912.22 32.20 L908.81 30.57 L905.41 28.95 L902.00 27.32 M902.00 612.68 L904.98 611.05 L907.96 609.43 L910.94 607.80 L913.92 606.18 L916.89 604.55 L919.87 602.92 L922.85 601.30 L925.82 599.67 L928.79 598.05 L931.76 596.42 L934.73 594.79 L937.69 593.17 L940.65 591.54 L943.61 589.92 L946.57 588.29 L949.52 586.66 L952.47 585.04 L955.42 583.41 L958.36 581.79 L961.29 580.16 L964.23 578.53 L967.15 576.91 L970.08 575.28 L972.99 573.66 L975.91 572.03 L978.81 570.40 L981.71 568.78 L984.61 567.15 L987.49 565.53 L990.38 563.90 L993.25 562.27 L996.12 560.65 L998.98 559.02 L1001.83 557.40 L1004.68 555.77 L1007.52 554.14 L1010.35 552.52 L1013.17 550.89 L1015.98 549.27 L1018.79 547.64 L1021.58 546.01 L1024.37 544.39 L1027.15 542.76 L1029.91 541.14 L1032.67 539.51 L1035.42 537.88 L1038.16 536.26 L1040.88 534.63 L1043.60 533.01 L1046.31 531.38 L1049.00 529.75 L1051.69 528.13 L1054.36 526.50 L1057.02 524.88 L1059.67 523.25 L1062.31 521.62 L1064.93 520.00 L1067.54 518.37 L1070.14 516.75 L1072.73 515.12 L1075.30 513.49 L1077.86 511.87 L1080.41 510.24 L1082.95 508.62 L1085.47 506.99 L1087.97 505.36 L1090.46 503.74 L1092.94 502.11 L1095.41 500.49 L1097.85 498.86 L1100.29 497.23 L1102.71 495.61 L1105.11 493.98 L1107.50 492.36 L1109.87 490.73 L1112.22 489.10 L1114.56 487.48 L1116.89 485.85 L1119.20 484.23 L1121.49 482.60 L1123.76 480.97 L1126.02 479.35 L1128.26 477.72 L1130.48 476.10 L1132.69 474.47 L1134.88 472.84 L1137.05 471.22 L1139.20 469.59 L1141.33 467.97 L1143.45 466.34 L1145.55 464.71 L1147.63 463.09 L1149.69 461.46 L1151.73 459.84 L1153.75 458.21 L1155.75 456.58 L1157.74 454.96 L1159.70 453.33 L1161.65 451.71 L1163.57 450.08 L1165.48 448.45 L1167.36 446.83 L1169.23 445.20 L1171.07 443.58 L1172.90 441.95 L1174.70 440.32 L1176.48 438.70 L1178.25 437.07 L1179.99 435.45 L1181.71 433.82 L1183.41 432.19 L1185.08 430.57 L1186.74 428.94 L1188.37 427.32 L1189.98 425.69 L1191.57 424.06 L1193.14 422.44 L1194.69 420.81 L1196.21 419.19 L1197.71 417.56 L1199.19 415.93 L1200.65 414.31 L1202.08 412.68 L1203.49 411.06 L1204.88 409.43 L1206.24 407.80 L1207.58 406.18 L1208.90 404.55 L1210.20 402.93 L1211.47 401.30 L1212.72 399.67 L1213.94 398.05 L1215.14 396.42 L1216.32 394.80 L1217.47 393.17 L1218.60 391.54 L1219.70 389.92 L1220.78 388.29 L1221.84 386.67 L1222.87 385.04 L1223.87 383.41 L1224.86 381.79 L1225.81 380.16 L1226.75 378.54 L1227.66 376.91 L1228.54 375.28 L1229.40 373.66 L1230.23 372.03 L1231.04 370.41 L1231.83 368.78 L1232.58 367.15 L1233.32 365.53 L1234.03 363.90 L1234.71 362.28 L1235.37 360.65 L1236.00 359.02 L1236.61 357.40 L1237.19 355.77 L1237.74 354.15 L1238.27 352.52 L1238.78 350.89 L1239.26 349.27 L1239.71 347.64 L1240.14 346.02 L1240.54 344.39 L1240.91 342.76 L1241.27 341.14 L1241.59 339.51 L1241.89 337.89 L1242.16 336.26 L1242.41 334.63 L1242.63 333.01 L1242.82 331.38 L1242.99 329.76 L1243.14 328.13 L1243.25 326.50 L1243.34 324.88 L1243.41 323.25 L1243.45 321.63 L1243.46 320.00 L1243.45 318.37 L1243.41 316.75 L1243.34 315.12 L1243.25 313.50 L1243.14 311.87 L1242.99 310.24 L1242.82 308.62 L1242.63 306.99 L1242.41 305.37 L1242.16 303.74 L1241.89 302.11 L1241.59 300.49 L1241.27 298.86 L1240.91 297.24 L1240.54 295.61 L1240.14 293.98 L1239.71 292.36 L1239.26 290.73 L1238.78 289.11 L1238.27 287.48 L1237.74 285.85 L1237.19 284.23 L1236.61 282.60 L1236.00 280.98 L1235.37 279.35 L1234.71 277.72 L1234.03 276.10 L1233.32 274.47 L1232.58 272.85 L1231.83 271.22 L1231.04 269.59 L1230.23 267.97 L1229.40 266.34 L1228.54 264.72 L1227.66 263.09 L1226.75 261.46 L1225.81 259.84 L1224.86 258.21 L1223.87 256.59 L1222.87 254.96 L1221.84 253.33 L1220.78 251.71 L1219.70 250.08 L1218.60 248.46 L1217.47 246.83 L1216.32 245.20 L1215.14 243.58 L1213.94 241.95 L1212.72 240.33 L1211.47 238.70 L1210.20 237.07 L1208.90 235.45 L1207.58 233.82 L1206.24 232.20 L1204.88 230.57 L1203.49 228.94 L1202.08 227.32 L1200.65 225.69 L1199.19 224.07 L1197.71 222.44 L1196.21 220.81 L1194.69 219.19 L1193.14 217.56 L1191.57 215.94 L1189.98 214.31 L1188.37 212.68 L1186.74 211.06 L1185.08 209.43 L1183.41 207.81 L1181.71 206.18 L1179.99 204.55 L1178.25 202.93 L1176.48 201.30 L1174.70 199.68 L1172.90 198.05 L1171.07 196.42 L1169.23 194.80 L1167.36 193.17 L1165.48 191.55 L1163.57 189.92 L1161.65 188.29 L1159.70 186.67 L1157.74 185.04 L1155.75 183.42 L1153.75 181.79 L1151.73 180.16 L1149.69 178.54 L1147.63 176.91 L1145.55 175.29 L1143.45 173.66 L1141.33 172.03 L1139.20 170.41 L1137.05 168.78 L1134.88 167.16 L1132.69 165.53 L1130.48 163.90 L1128.26 162.28 L1126.02 160.65 L1123.76 159.03 L1121.49 157.40 L1119.20 155.77 L1116.89 154.15 L1114.56 152.52 L1112.22 150.90 L1109.87 149.27 L1107.50 147.64 L1105.11 146.02 L1102.71 144.39 L1100.29 142.77 L1097.85 141.14 L1095.41 139.51 L1092.94 137.89 L1090.46 136.26 L1087.97 134.64 L1085.47 133.01 L1082.95 131.38 L1080.41 129.76 L1077.86 128.13 L1075.30 126.51 L1072.73 124.88 L1070.14 123.25 L1067.54 121.63 L1064.93 120.00 L1062.31 118.38 L1059.67 116.75 L1057.02 115.12 L1054.36 113.50 L1051.69 111.87 L1049.00 110.25 L1046.31 108.62 L1043.60 106.99 L1040.88 105.37 L1038.16 103.74 L1035.42 102.12 L1032.67 100.49 L1029.91 98.86 L1027.15 97.24 L1024.37 95.61 L1021.58 93.99 L1018.79 92.36 L1015.98 90.73 L1013.17 89.11 L1010.35 87.48 L1007.52 85.86 L1004.68 84.23 L1001.83 82.60 L998.98 80.98 L996.12 79.35 L993.25 77.73 L990.38 76.10 L987.49 74.47 L984.61 72.85 L981.71 71.22 L978.81 69.60 L975.91 67.97 L972.99 66.34 L970.08 64.72 L967.15 63.09 L964.23 61.47 L961.29 59.84 L958.36 58.21 L955.42 56.59 L952.47 54.96 L949.52 53.34 L946.57 51.71 L943.61 50.08 L940.65 48.46 L937.69 46.83 L934.73 45.21 L931.76 43.58 L928.79 41.95 L925.82 40.33 L922.85 38.70 L919.87 37.08 L916.89 35.45 L913.92 33.82 L910.94 32.20 L907.96 30.57 L904.98 28.95 L902.00 27.32 M902.00 612.68 L904.55 611.05 L907.11 609.43 L909.66 607.80 L912.21 606.18 L914.77 604.55 L917.32 602.92 L919.87 601.30 L922.42 599.67 L924.96 598.05 L927.51 596.42 L930.05 594.79 L932.59 593.17 L935.13 591.54 L937.67 589.92 L940.20 588.29 L942.73 586.66 L945.26 585.04 L947.79 583.41 L950.31 581.79 L952.82 580.16 L955.34 578.53 L957.85 576.91 L960.35 575.28 L962.85 573.66 L965.35 572.03 L967.84 570.40 L970.32 568.78 L972.81 567.15 L975.28 565.53 L977.75 563.90 L980.22 562.27 L982.67 560.65 L985.13 559.02 L987.57 557.40 L990.01 555.77 L992.44 554.14 L994.87 552.52 L997.29 550.89 L999.70 549.27 L1002.10 547.64 L1004.50 546.01 L1006.89 544.39 L1009.27 542.76 L1011.64 541.14 L1014.00 539.51 L1016.36 537.88 L1018.71 536.26 L1021.04 534.63 L1023.37 533.01 L1025.69 531.38 L1028.00 529.75 L1030.30 528.13 L1032.59 526.50 L1034.87 524.88 L1037.14 523.25 L1039.40 521.62 L1041.65 520.00 L1043.89 518.37 L1046.12 516.75 L1048.34 515.12 L1050.55 513.49 L1052.74 511.87 L1054.92 510.24 L1057.10 508.62 L1059.26 506.99 L1061.40 505.36 L1063.54 503.74 L1065.66 502.11 L1067.78 500.49 L1069.87 498.86 L1071.96 497.23 L1074.03 495.61 L1076.09 493.98 L1078.14 492.36 L1080.17 490.73 L1082.19 489.10 L1084.20 487.48 L1086.19 485.85 L1088.17 484.23 L1090.13 482.60 L1092.08 480.97 L1094.02 479.35 L1095.94 477.72 L1097.84 476.10 L1099.73 474.47 L1101.61 472.84 L1103.47 471.22 L1105.31 469.59 L1107.14 467.97 L1108.96 466.34 L1110.75 464.71 L1112.54 463.09 L1114.30 461.46 L1116.05 459.84 L1117.79 458.21 L1119.50 456.58 L1121.20 454.96 L1122.89 453.33 L1124.56 451.71 L1126.21 450.08 L1127.84 448.45 L1129.46 446.83 L1131.05 445.20 L1132.63 443.58 L1134.20 441.95 L1135.74 440.32 L1137.27 438.70 L1138.78 437.07 L1140.28 435.45 L1141.75 433.82 L1143.21 432.19 L1144.64 430.57 L1146.06 428.94 L1147.46 427.32 L1148.84 425.69 L1150.21 424.06 L1151.55 422.44 L1152.88 420.81 L1154.18 419.19 L1155.47 417.56 L1156.74 415.93 L1157.98 414.31 L1159.21 412.68 L1160.42 411.06 L1161.61 409.43 L1162.78 407.80 L1163.93 406.18 L1165.06 404.55 L1166.17 402.93 L1167.26 401.30 L1168.33 399.67 L1169.38 398.05 L1170.41 396.42 L1171.41 394.80 L1172.40 393.17 L1173.37 391.54 L1174.31 389.92 L1175.24 388.29 L1176.15 386.67 L1177.03 385.04 L1177.89 383.41 L1178.73 381.79 L1179.56 380.16 L1180.36 378.54 L1181.13 376.91 L1181.89 375.28 L1182.63 373.66 L1183.34 372.03 L1184.04 370.41 L1184.71 368.78 L1185.36 367.15 L1185.99 365.53 L1186.59 363.90 L1187.18 362.28 L1187.74 360.65 L1188.28 359.02 L1188.80 357.40 L1189.30 355.77 L1189.78 354.15 L1190.23 352.52 L1190.67 350.89 L1191.08 349.27 L1191.47 347.64 L1191.83 346.02 L1192.18 344.39 L1192.50 342.76 L1192.80 341.14 L1193.08 339.51 L1193.33 337.89 L1193.57 336.26 L1193.78 334.63 L1193.97 333.01 L1194.13 331.38 L1194.28 329.76 L1194.40 328.13 L1194.50 326.50 L1194.58 324.88 L1194.64 323.25 L1194.67 321.63 L1194.68 320.00 L1194.67 318.37 L1194.64 316.75 L1194.58 315.12 L1194.50 313.50 L1194.40 311.87 L1194.28 310.24 L1194.13 308.62 L1193.97 306.99 L1193.78 305.37 L1193.57 303.74 L1193.33 302.11 L1193.08 300.49 L1192.80 298.86 L1192.50 297.24 L1192.18 295.61 L1191.83 293.98 L1191.47 292.36 L1191.08 290.73 L1190.67 289.11 L1190.23 287.48 L1189.78 285.85 L1189.30 284.23 L1188.80 282.60 L1188.28 280.98 L1187.74 279.35 L1187.18 277.72 L1186.59 276.10 L1185.99 274.47 L1185.36 272.85 L1184.71 271.22 L1184.04 269.59 L1183.34 267.97 L1182.63 266.34 L1181.89 264.72 L1181.13 263.09 L1180.36 261.46 L1179.56 259.84 L1178.73 258.21 L1177.89 256.59 L1177.03 254.96 L1176.15 253.33 L1175.24 251.71 L1174.31 250.08 L1173.37 248.46 L1172.40 246.83 L1171.41 245.20 L1170.41 243.58 L1169.38 241.95 L1168.33 240.33 L1167.26 238.70 L1166.17 237.07 L1165.06 235.45 L1163.93 233.82 L1162.78 232.20 L1161.61 230.57 L1160.42 228.94 L1159.21 227.32 L1157.98 225.69 L1156.74 224.07 L1155.47 222.44 L1154.18 220.81 L1152.88 219.19 L1151.55 217.56 L1150.21 215.94 L1148.84 214.31 L1147.46 212.68 L1146.06 211.06 L1144.64 209.43 L1143.21 207.81 L1141.75 206.18 L1140.28 204.55 L1138.78 202.93 L1137.27 201.30 L1135.74 199.68 L1134.20 198.05 L1132.63 196.42 L1131.05 194.80 L1129.46 193.17 L1127.84 191.55 L1126.21 189.92 L1124.56 188.29 L1122.89 186.67 L1121.20 185.04 L1119.50 183.42 L1117.79 181.79 L1116.05 180.16 L1114.30 178.54 L1112.54 176.91 L1110.75 175.29 L1108.96 173.66 L1107.14 172.03 L1105.31 170.41 L1103.47 168.78 L1101.61 167.16 L1099.73 165.53 L1097.84 163.90 L1095.94 162.28 L1094.02 160.65 L1092.08 159.03 L1090.13 157.40 L1088.17 155.77 L1086.19 154.15 L1084.20 152.52 L1082.19 150.90 L1080.17 149.27 L1078.14 147.64 L1076.09 146.02 L1074.03 144.39 L1071.96 142.77 L1069.87 141.14 L1067.78 139.51 L1065.66 137.89 L1063.54 136.26 L1061.40 134.64 L1059.26 133.01 L1057.10 131.38 L1054.92 129.76 L1052.74 128.13 L1050.55 126.51 L1048.34 124.88 L1046.12 123.25 L1043.89 121.63 L1041.65 120.00 L1039.40 118.38 L1037.14 116.75 L1034.87 115.12 L1032.59 113.50 L1030.30 111.87 L1028.00 110.25 L1025.69 108.62 L1023.37 106.99 L1021.04 105.37 L1018.71 103.74 L1016.36 102.12 L1014.00 100.49 L1011.64 98.86 L1009.27 97.24 L1006.89 95.61 L1004.50 93.99 L1002.10 92.36 L999.70 90.73 L997.29 89.11 L994.87 87.48 L992.44 85.86 L990.01 84.23 L987.57 82.60 L985.13 80.98 L982.67 79.35 L980.22 77.73 L977.75 76.10 L975.28 74.47 L972.81 72.85 L970.32 71.22 L967.84 69.60 L965.35 67.97 L962.85 66.34 L960.35 64.72 L957.85 63.09 L955.34 61.47 L952.82 59.84 L950.31 58.21 L947.79 56.59 L945.26 54.96 L942.73 53.34 L940.20 51.71 L937.67 50.08 L935.13 48.46 L932.59 46.83 L930.05 45.21 L927.51 43.58 L924.96 41.95 L922.42 40.33 L919.87 38.70 L917.32 37.08 L914.77 35.45 L912.21 33.82 L909.66 32.20 L907.11 30.57 L904.55 28.95 L902.00 27.32 M902.00 612.68 L904.13 611.05 L906.26 609.43 L908.38 607.80 L910.51 606.18 L912.64 604.55 L914.76 602.92 L916.89 601.30 L919.01 599.67 L921.14 598.05 L923.26 596.42 L925.38 594.79 L927.49 593.17 L929.61 591.54 L931.72 589.92 L933.84 588.29 L935.94 586.66 L938.05 585.04 L940.15 583.41 L942.26 581.79 L944.35 580.16 L946.45 578.53 L948.54 576.91 L950.63 575.28 L952.71 573.66 L954.79 572.03 L956.87 570.40 L958.94 568.78 L961.00 567.15 L963.07 565.53 L965.13 563.90 L967.18 562.27 L969.23 560.65 L971.27 559.02 L973.31 557.40 L975.34 555.77 L977.37 554.14 L979.39 552.52 L981.41 550.89 L983.42 549.27 L985.42 547.64 L987.42 546.01 L989.41 544.39 L991.39 542.76 L993.37 541.14 L995.34 539.51 L997.30 537.88 L999.25 536.26 L1001.20 534.63 L1003.14 533.01 L1005.08 531.38 L1007.00 529.75 L1008.92 528.13 L1010.83 526.50 L1012.73 524.88 L1014.62 523.25 L1016.50 521.62 L1018.38 520.00 L1020.25 518.37 L1022.10 516.75 L1023.95 515.12 L1025.79 513.49 L1027.62 511.87 L1029.44 510.24 L1031.25 508.62 L1033.05 506.99 L1034.84 505.36 L1036.62 503.74 L1038.39 502.11 L1040.15 500.49 L1041.90 498.86 L1043.63 497.23 L1045.36 495.61 L1047.08 493.98 L1048.78 492.36 L1050.48 490.73 L1052.16 489.10 L1053.83 487.48 L1055.49 485.85 L1057.14 484.23 L1058.78 482.60 L1060.40 480.97 L1062.01 479.35 L1063.61 477.72 L1065.20 476.10 L1066.78 474.47 L1068.34 472.84 L1069.89 471.22 L1071.43 469.59 L1072.95 467.97 L1074.46 466.34 L1075.96 464.71 L1077.45 463.09 L1078.92 461.46 L1080.38 459.84 L1081.82 458.21 L1083.25 456.58 L1084.67 454.96 L1086.07 453.33 L1087.46 451.71 L1088.84 450.08 L1090.20 448.45 L1091.55 446.83 L1092.88 445.20 L1094.20 443.58 L1095.50 441.95 L1096.79 440.32 L1098.06 438.70 L1099.32 437.07 L1100.56 435.45 L1101.79 433.82 L1103.00 432.19 L1104.20 430.57 L1105.38 428.94 L1106.55 427.32 L1107.70 425.69 L1108.84 424.06 L1109.96 422.44 L1111.06 420.81 L1112.15 419.19 L1113.22 417.56 L1114.28 415.93 L1115.32 414.31 L1116.34 412.68 L1117.35 411.06 L1118.34 409.43 L1119.32 407.80 L1120.27 406.18 L1121.22 404.55 L1122.14 402.93 L1123.05 401.30 L1123.94 399.67 L1124.81 398.05 L1125.67 396.42 L1126.51 394.80 L1127.33 393.17 L1128.14 391.54 L1128.93 389.92 L1129.70 388.29 L1130.45 386.67 L1131.19 385.04 L1131.91 383.41 L1132.61 381.79 L1133.30 380.16 L1133.96 378.54 L1134.61 376.91 L1135.24 375.28 L1135.86 373.66 L1136.45 372.03 L1137.03 370.41 L1137.59 368.78 L1138.13 367.15 L1138.66 365.53 L1139.16 363.90 L1139.65 362.28 L1140.12 360.65 L1140.57 359.02 L1141.00 357.40 L1141.42 355.77 L1141.82 354.15 L1142.19 352.52 L1142.56 350.89 L1142.90 349.27 L1143.22 347.64 L1143.53 346.02 L1143.81 344.39 L1144.08 342.76 L1144.33 341.14 L1144.56 339.51 L1144.78 337.89 L1144.97 336.26 L1145.15 334.63 L1145.31 333.01 L1145.45 331.38 L1145.57 329.76 L1145.67 328.13 L1145.75 326.50 L1145.82 324.88 L1145.86 323.25 L1145.89 321.63 L1145.90 320.00 L1145.89 318.37 L1145.86 316.75 L1145.82 315.12 L1145.75 313.50 L1145.67 311.87 L1145.57 310.24 L1145.45 308.62 L1145.31 306.99 L1145.15 305.37 L1144.97 303.74 L1144.78 302.11 L1144.56 300.49 L1144.33 298.86 L1144.08 297.24 L1143.81 295.61 L1143.53 293.98 L1143.22 292.36 L1142.90 290.73 L1142.56 289.11 L1142.19 287.48 L1141.82 285.85 L1141.42 284.23 L1141.00 282.60 L1140.57 280.98 L1140.12 279.35 L1139.65 277.72 L1139.16 276.10 L1138.66 274.47 L1138.13 272.85 L1137.59 271.22 L1137.03 269.59 L1136.45 267.97 L1135.86 266.34 L1135.24 264.72 L1134.61 263.09 L1133.96 261.46 L1133.30 259.84 L1132.61 258.21 L1131.91 256.59 L1131.19 254.96 L1130.45 253.33 L1129.70 251.71 L1128.93 250.08 L1128.14 248.46 L1127.33 246.83 L1126.51 245.20 L1125.67 243.58 L1124.81 241.95 L1123.94 240.33 L1123.05 238.70 L1122.14 237.07 L1121.22 235.45 L1120.27 233.82 L1119.32 232.20 L1118.34 230.57 L1117.35 228.94 L1116.34 227.32 L1115.32 225.69 L1114.28 224.07 L1113.22 222.44 L1112.15 220.81 L1111.06 219.19 L1109.96 217.56 L1108.84 215.94 L1107.70 214.31 L1106.55 212.68 L1105.38 211.06 L1104.20 209.43 L1103.00 207.81 L1101.79 206.18 L1100.56 204.55 L1099.32 202.93 L1098.06 201.30 L1096.79 199.68 L1095.50 198.05 L1094.20 196.42 L1092.88 194.80 L1091.55 193.17 L1090.20 191.55 L1088.84 189.92 L1087.46 188.29 L1086.07 186.67 L1084.67 185.04 L1083.25 183.42 L1081.82 181.79 L1080.38 180.16 L1078.92 178.54 L1077.45 176.91 L1075.96 175.29 L1074.46 173.66 L1072.95 172.03 L1071.43 170.41 L1069.89 168.78 L1068.34 167.16 L1066.78 165.53 L1065.20 163.90 L1063.61 162.28 L1062.01 160.65 L1060.40 159.03 L1058.78 157.40 L1057.14 155.77 L1055.49 154.15 L1053.83 152.52 L1052.16 150.90 L1050.48 149.27 L1048.78 147.64 L1047.08 146.02 L1045.36 144.39 L1043.63 142.77 L1041.90 141.14 L1040.15 139.51 L1038.39 137.89 L1036.62 136.26 L1034.84 134.64 L1033.05 133.01 L1031.25 131.38 L1029.44 129.76 L1027.62 128.13 L1025.79 126.51 L1023.95 124.88 L1022.10 123.25 L1020.25 121.63 L1018.38 120.00 L1016.50 118.38 L1014.62 116.75 L1012.73 115.12 L1010.83 113.50 L1008.92 111.87 L1007.00 110.25 L1005.08 108.62 L1003.14 106.99 L1001.20 105.37 L999.25 103.74 L997.30 102.12 L995.34 100.49 L993.37 98.86 L991.39 97.24 L989.41 95.61 L987.42 93.99 L985.42 92.36 L983.42 90.73 L981.41 89.11 L979.39 87.48 L977.37 85.86 L975.34 84.23 L973.31 82.60 L971.27 80.98 L969.23 79.35 L967.18 77.73 L965.13 76.10 L963.07 74.47 L961.00 72.85 L958.94 71.22 L956.87 69.60 L954.79 67.97 L952.71 66.34 L950.63 64.72 L948.54 63.09 L946.45 61.47 L944.35 59.84 L942.26 58.21 L940.15 56.59 L938.05 54.96 L935.94 53.34 L933.84 51.71 L931.72 50.08 L929.61 48.46 L927.49 46.83 L925.38 45.21 L923.26 43.58 L921.14 41.95 L919.01 40.33 L916.89 38.70 L914.76 37.08 L912.64 35.45 L910.51 33.82 L908.38 32.20 L906.26 30.57 L904.13 28.95 L902.00 27.32 M902.00 612.68 L903.70 611.05 L905.41 609.43 L907.11 607.80 L908.81 606.18 L910.51 604.55 L912.21 602.92 L913.91 601.30 L915.61 599.67 L917.31 598.05 L919.01 596.42 L920.70 594.79 L922.40 593.17 L924.09 591.54 L925.78 589.92 L927.47 588.29 L929.16 586.66 L930.84 585.04 L932.52 583.41 L934.20 581.79 L935.88 580.16 L937.56 578.53 L939.23 576.91 L940.90 575.28 L942.57 573.66 L944.23 572.03 L945.89 570.40 L947.55 568.78 L949.20 567.15 L950.85 565.53 L952.50 563.90 L954.14 562.27 L955.78 560.65 L957.42 559.02 L959.05 557.40 L960.67 555.77 L962.30 554.14 L963.91 552.52 L965.52 550.89 L967.13 549.27 L968.73 547.64 L970.33 546.01 L971.92 544.39 L973.51 542.76 L975.09 541.14 L976.67 539.51 L978.24 537.88 L979.80 536.26 L981.36 534.63 L982.91 533.01 L984.46 531.38 L986.00 529.75 L987.53 528.13 L989.06 526.50 L990.58 524.88 L992.10 523.25 L993.60 521.62 L995.10 520.00 L996.60 518.37 L998.08 516.75 L999.56 515.12 L1001.03 513.49 L1002.49 511.87 L1003.95 510.24 L1005.40 508.62 L1006.84 506.99 L1008.27 505.36 L1009.69 503.74 L1011.11 502.11 L1012.52 500.49 L1013.92 498.86 L1015.31 497.23 L1016.69 495.61 L1018.06 493.98 L1019.43 492.36 L1020.78 490.73 L1022.13 489.10 L1023.47 487.48 L1024.79 485.85 L1026.11 484.23 L1027.42 482.60 L1028.72 480.97 L1030.01 479.35 L1031.29 477.72 L1032.56 476.10 L1033.82 474.47 L1035.07 472.84 L1036.31 471.22 L1037.54 469.59 L1038.76 467.97 L1039.97 466.34 L1041.17 464.71 L1042.36 463.09 L1043.54 461.46 L1044.70 459.84 L1045.86 458.21 L1047.00 456.58 L1048.14 454.96 L1049.26 453.33 L1050.37 451.71 L1051.47 450.08 L1052.56 448.45 L1053.64 446.83 L1054.70 445.20 L1055.76 443.58 L1056.80 441.95 L1057.83 440.32 L1058.85 438.70 L1059.86 437.07 L1060.85 435.45 L1061.83 433.82 L1062.80 432.19 L1063.76 430.57 L1064.71 428.94 L1065.64 427.32 L1066.56 425.69 L1067.47 424.06 L1068.37 422.44 L1069.25 420.81 L1070.12 419.19 L1070.98 417.56 L1071.82 415.93 L1072.66 414.31 L1073.47 412.68 L1074.28 411.06 L1075.07 409.43 L1075.85 407.80 L1076.62 406.18 L1077.37 404.55 L1078.11 402.93 L1078.84 401.30 L1079.55 399.67 L1080.25 398.05 L1080.94 396.42 L1081.61 394.80 L1082.27 393.17 L1082.91 391.54 L1083.54 389.92 L1084.16 388.29 L1084.76 386.67 L1085.35 385.04 L1085.93 383.41 L1086.49 381.79 L1087.04 380.16 L1087.57 378.54 L1088.09 376.91 L1088.59 375.28 L1089.08 373.66 L1089.56 372.03 L1090.02 370.41 L1090.47 368.78 L1090.90 367.15 L1091.32 365.53 L1091.73 363.90 L1092.12 362.28 L1092.49 360.65 L1092.86 359.02 L1093.20 357.40 L1093.54 355.77 L1093.85 354.15 L1094.16 352.52 L1094.44 350.89 L1094.72 349.27 L1094.98 347.64 L1095.22 346.02 L1095.45 344.39 L1095.67 342.76 L1095.87 341.14 L1096.05 339.51 L1096.22 337.89 L1096.38 336.26 L1096.52 334.63 L1096.64 333.01 L1096.76 331.38 L1096.85 329.76 L1096.93 328.13 L1097.00 326.50 L1097.05 324.88 L1097.09 323.25 L1097.11 321.63 L1097.12 320.00 L1097.11 318.37 L1097.09 316.75 L1097.05 315.12 L1097.00 313.50 L1096.93 311.87 L1096.85 310.24 L1096.76 308.62 L1096.64 306.99 L1096.52 305.37 L1096.38 303.74 L1096.22 302.11 L1096.05 300.49 L1095.87 298.86 L1095.67 297.24 L1095.45 295.61 L1095.22 293.98 L1094.98 292.36 L1094.72 290.73 L1094.44 289.11 L1094.16 287.48 L1093.85 285.85 L1093.54 284.23 L1093.20 282.60 L1092.86 280.98 L1092.49 279.35 L1092.12 277.72 L1091.73 276.10 L1091.32 274.47 L1090.90 272.85 L1090.47 271.22 L1090.02 269.59 L1089.56 267.97 L1089.08 266.34 L1088.59 264.72 L1088.09 263.09 L1087.57 261.46 L1087.04 259.84 L1086.49 258.21 L1085.93 256.59 L1085.35 254.96 L1084.76 253.33 L1084.16 251.71 L1083.54 250.08 L1082.91 248.46 L1082.27 246.83 L1081.61 245.20 L1080.94 243.58 L1080.25 241.95 L1079.55 240.33 L1078.84 238.70 L1078.11 237.07 L1077.37 235.45 L1076.62 233.82 L1075.85 232.20 L1075.07 230.57 L1074.28 228.94 L1073.47 227.32 L1072.66 225.69 L1071.82 224.07 L1070.98 222.44 L1070.12 220.81 L1069.25 219.19 L1068.37 217.56 L1067.47 215.94 L1066.56 214.31 L1065.64 212.68 L1064.71 211.06 L1063.76 209.43 L1062.80 207.81 L1061.83 206.18 L1060.85 204.55 L1059.86 202.93 L1058.85 201.30 L1057.83 199.68 L1056.80 198.05 L1055.76 196.42 L1054.70 194.80 L1053.64 193.17 L1052.56 191.55 L1051.47 189.92 L1050.37 188.29 L1049.26 186.67 L1048.14 185.04 L1047.00 183.42 L1045.86 181.79 L1044.70 180.16 L1043.54 178.54 L1042.36 176.91 L1041.17 175.29 L1039.97 173.66 L1038.76 172.03 L1037.54 170.41 L1036.31 168.78 L1035.07 167.16 L1033.82 165.53 L1032.56 163.90 L1031.29 162.28 L1030.01 160.65 L1028.72 159.03 L1027.42 157.40 L1026.11 155.77 L1024.79 154.15 L1023.47 152.52 L1022.13 150.90 L1020.78 149.27 L1019.43 147.64 L1018.06 146.02 L1016.69 144.39 L1015.31 142.77 L1013.92 141.14 L1012.52 139.51 L1011.11 137.89 L1009.69 136.26 L1008.27 134.64 L1006.84 133.01 L1005.40 131.38 L1003.95 129.76 L1002.49 128.13 L1001.03 126.51 L999.56 124.88 L998.08 123.25 L996.60 121.63 L995.10 120.00 L993.60 118.38 L992.10 116.75 L990.58 115.12 L989.06 113.50 L987.53 111.87 L986.00 110.25 L984.46 108.62 L982.91 106.99 L981.36 105.37 L979.80 103.74 L978.24 102.12 L976.67 100.49 L975.09 98.86 L973.51 97.24 L971.92 95.61 L970.33 93.99 L968.73 92.36 L967.13 90.73 L965.52 89.11 L963.91 87.48 L962.30 85.86 L960.67 84.23 L959.05 82.60 L957.42 80.98 L955.78 79.35 L954.14 77.73 L952.50 76.10 L950.85 74.47 L949.20 72.85 L947.55 71.22 L945.89 69.60 L944.23 67.97 L942.57 66.34 L940.90 64.72 L939.23 63.09 L937.56 61.47 L935.88 59.84 L934.20 58.21 L932.52 56.59 L930.84 54.96 L929.16 53.34 L927.47 51.71 L925.78 50.08 L924.09 48.46 L922.40 46.83 L920.70 45.21 L919.01 43.58 L917.31 41.95 L915.61 40.33 L913.91 38.70 L912.21 37.08 L910.51 35.45 L908.81 33.82 L907.11 32.20 L905.41 30.57 L903.70 28.95 L902.00 27.32 M902.00 612.68 L903.28 611.05 L904.55 609.43 L905.83 607.80 L907.11 606.18 L908.38 604.55 L909.66 602.92 L910.93 601.30 L912.21 599.67 L913.48 598.05 L914.75 596.42 L916.03 594.79 L917.30 593.17 L918.57 591.54 L919.83 589.92 L921.10 588.29 L922.37 586.66 L923.63 585.04 L924.89 583.41 L926.15 581.79 L927.41 580.16 L928.67 578.53 L929.92 576.91 L931.18 575.28 L932.43 573.66 L933.67 572.03 L934.92 570.40 L936.16 568.78 L937.40 567.15 L938.64 565.53 L939.88 563.90 L941.11 562.27 L942.34 560.65 L943.56 559.02 L944.79 557.40 L946.01 555.77 L947.22 554.14 L948.43 552.52 L949.64 550.89 L950.85 549.27 L952.05 547.64 L953.25 546.01 L954.44 544.39 L955.63 542.76 L956.82 541.14 L958.00 539.51 L959.18 537.88 L960.35 536.26 L961.52 534.63 L962.69 533.01 L963.85 531.38 L965.00 529.75 L966.15 528.13 L967.30 526.50 L968.44 524.88 L969.57 523.25 L970.70 521.62 L971.83 520.00 L972.95 518.37 L974.06 516.75 L975.17 515.12 L976.27 513.49 L977.37 511.87 L978.46 510.24 L979.55 508.62 L980.63 506.99 L981.70 505.36 L982.77 503.74 L983.83 502.11 L984.89 500.49 L985.94 498.86 L986.98 497.23 L988.02 495.61 L989.05 493.98 L990.07 492.36 L991.09 490.73 L992.10 489.10 L993.10 487.48 L994.09 485.85 L995.08 484.23 L996.07 482.60 L997.04 480.97 L998.01 479.35 L998.97 477.72 L999.92 476.10 L1000.87 474.47 L1001.80 472.84 L1002.73 471.22 L1003.66 469.59 L1004.57 467.97 L1005.48 466.34 L1006.38 464.71 L1007.27 463.09 L1008.15 461.46 L1009.03 459.84 L1009.89 458.21 L1010.75 456.58 L1011.60 454.96 L1012.44 453.33 L1013.28 451.71 L1014.10 450.08 L1014.92 448.45 L1015.73 446.83 L1016.53 445.20 L1017.32 443.58 L1018.10 441.95 L1018.87 440.32 L1019.64 438.70 L1020.39 437.07 L1021.14 435.45 L1021.87 433.82 L1022.60 432.19 L1023.32 430.57 L1024.03 428.94 L1024.73 427.32 L1025.42 425.69 L1026.10 424.06 L1026.78 422.44 L1027.44 420.81 L1028.09 419.19 L1028.73 417.56 L1029.37 415.93 L1029.99 414.31 L1030.61 412.68 L1031.21 411.06 L1031.81 409.43 L1032.39 407.80 L1032.96 406.18 L1033.53 404.55 L1034.08 402.93 L1034.63 401.30 L1035.16 399.67 L1035.69 398.05 L1036.20 396.42 L1036.71 394.80 L1037.20 393.17 L1037.68 391.54 L1038.16 389.92 L1038.62 388.29 L1039.07 386.67 L1039.51 385.04 L1039.95 383.41 L1040.37 381.79 L1040.78 380.16 L1041.18 378.54 L1041.57 376.91 L1041.95 375.28 L1042.31 373.66 L1042.67 372.03 L1043.02 370.41 L1043.35 368.78 L1043.68 367.15 L1043.99 365.53 L1044.30 363.90 L1044.59 362.28 L1044.87 360.65 L1045.14 359.02 L1045.40 357.40 L1045.65 355.77 L1045.89 354.15 L1046.12 352.52 L1046.33 350.89 L1046.54 349.27 L1046.73 347.64 L1046.92 346.02 L1047.09 344.39 L1047.25 342.76 L1047.40 341.14 L1047.54 339.51 L1047.67 337.89 L1047.78 336.26 L1047.89 334.63 L1047.98 333.01 L1048.07 331.38 L1048.14 329.76 L1048.20 328.13 L1048.25 326.50 L1048.29 324.88 L1048.32 323.25 L1048.33 321.63 L1048.34 320.00 L1048.33 318.37 L1048.32 316.75 L1048.29 315.12 L1048.25 313.50 L1048.20 311.87 L1048.14 310.24 L1048.07 308.62 L1047.98 306.99 L1047.89 305.37 L1047.78 303.74 L1047.67 302.11 L1047.54 300.49 L1047.40 298.86 L1047.25 297.24 L1047.09 295.61 L1046.92 293.98 L1046.73 292.36 L1046.54 290.73 L1046.33 289.11 L1046.12 287.48 L1045.89 285.85 L1045.65 284.23 L1045.40 282.60 L1045.14 280.98 L1044.87 279.35 L1044.59 277.72 L1044.30 276.10 L1043.99 274.47 L1043.68 272.85 L1043.35 271.22 L1043.02 269.59 L1042.67 267.97 L1042.31 266.34 L1041.95 264.72 L1041.57 263.09 L1041.18 261.46 L1040.78 259.84 L1040.37 258.21 L1039.95 256.59 L1039.51 254.96 L1039.07 253.33 L1038.62 251.71 L1038.16 250.08 L1037.68 248.46 L1037.20 246.83 L1036.71 245.20 L1036.20 243.58 L1035.69 241.95 L1035.16 240.33 L1034.63 238.70 L1034.08 237.07 L1033.53 235.45 L1032.96 233.82 L1032.39 232.20 L1031.81 230.57 L1031.21 228.94 L1030.61 227.32 L1029.99 225.69 L1029.37 224.07 L1028.73 222.44 L1028.09 220.81 L1027.44 219.19 L1026.78 217.56 L1026.10 215.94 L1025.42 214.31 L1024.73 212.68 L1024.03 211.06 L1023.32 209.43 L1022.60 207.81 L1021.87 206.18 L1021.14 204.55 L1020.39 202.93 L1019.64 201.30 L1018.87 199.68 L1018.10 198.05 L1017.32 196.42 L1016.53 194.80 L1015.73 193.17 L1014.92 191.55 L1014.10 189.92 L1013.28 188.29 L1012.44 186.67 L1011.60 185.04 L1010.75 183.42 L1009.89 181.79 L1009.03 180.16 L1008.15 178.54 L1007.27 176.91 L1006.38 175.29 L1005.48 173.66 L1004.57 172.03 L1003.66 170.41 L1002.73 168.78 L1001.80 167.16 L1000.87 165.53 L999.92 163.90 L998.97 162.28 L998.01 160.65 L997.04 159.03 L996.07 157.40 L995.08 155.77 L994.09 154.15 L993.10 152.52 L992.10 150.90 L991.09 149.27 L990.07 147.64 L989.05 146.02 L988.02 144.39 L986.98 142.77 L985.94 141.14 L984.89 139.51 L983.83 137.89 L982.77 136.26 L981.70 134.64 L980.63 133.01 L979.55 131.38 L978.46 129.76 L977.37 128.13 L976.27 126.51 L975.17 124.88 L974.06 123.25 L972.95 121.63 L971.83 120.00 L970.70 118.38 L969.57 116.75 L968.44 115.12 L967.30 113.50 L966.15 111.87 L965.00 110.25 L963.85 108.62 L962.69 106.99 L961.52 105.37 L960.35 103.74 L959.18 102.12 L958.00 100.49 L956.82 98.86 L955.63 97.24 L954.44 95.61 L953.25 93.99 L952.05 92.36 L950.85 90.73 L949.64 89.11 L948.43 87.48 L947.22 85.86 L946.01 84.23 L944.79 82.60 L943.56 80.98 L942.34 79.35 L941.11 77.73 L939.88 76.10 L938.64 74.47 L937.40 72.85 L936.16 71.22 L934.92 69.60 L933.67 67.97 L932.43 66.34 L931.18 64.72 L929.92 63.09 L928.67 61.47 L927.41 59.84 L926.15 58.21 L924.89 56.59 L923.63 54.96 L922.37 53.34 L921.10 51.71 L919.83 50.08 L918.57 48.46 L917.30 46.83 L916.03 45.21 L914.75 43.58 L913.48 41.95 L912.21 40.33 L910.93 38.70 L909.66 37.08 L908.38 35.45 L907.11 33.82 L905.83 32.20 L904.55 30.57 L903.28 28.95 L902.00 27.32 M902.00 612.68 L902.85 611.05 L903.70 609.43 L904.55 607.80 L905.40 606.18 L906.26 604.55 L907.11 602.92 L907.96 601.30 L908.81 599.67 L909.65 598.05 L910.50 596.42 L911.35 594.79 L912.20 593.17 L913.04 591.54 L913.89 589.92 L914.73 588.29 L915.58 586.66 L916.42 585.04 L917.26 583.41 L918.10 581.79 L918.94 580.16 L919.78 578.53 L920.62 576.91 L921.45 575.28 L922.28 573.66 L923.12 572.03 L923.95 570.40 L924.77 568.78 L925.60 567.15 L926.43 565.53 L927.25 563.90 L928.07 562.27 L928.89 560.65 L929.71 559.02 L930.52 557.40 L931.34 555.77 L932.15 554.14 L932.96 552.52 L933.76 550.89 L934.57 549.27 L935.37 547.64 L936.17 546.01 L936.96 544.39 L937.76 542.76 L938.55 541.14 L939.33 539.51 L940.12 537.88 L940.90 536.26 L941.68 534.63 L942.46 533.01 L943.23 531.38 L944.00 529.75 L944.77 528.13 L945.53 526.50 L946.29 524.88 L947.05 523.25 L947.80 521.62 L948.55 520.00 L949.30 518.37 L950.04 516.75 L950.78 515.12 L951.52 513.49 L952.25 511.87 L952.97 510.24 L953.70 508.62 L954.42 506.99 L955.13 505.36 L955.85 503.74 L956.55 502.11 L957.26 500.49 L957.96 498.86 L958.65 497.23 L959.34 495.61 L960.03 493.98 L960.71 492.36 L961.39 490.73 L962.06 489.10 L962.73 487.48 L963.40 485.85 L964.06 484.23 L964.71 482.60 L965.36 480.97 L966.01 479.35 L966.65 477.72 L967.28 476.10 L967.91 474.47 L968.54 472.84 L969.16 471.22 L969.77 469.59 L970.38 467.97 L970.99 466.34 L971.58 464.71 L972.18 463.09 L972.77 461.46 L973.35 459.84 L973.93 458.21 L974.50 456.58 L975.07 454.96 L975.63 453.33 L976.19 451.71 L976.74 450.08 L977.28 448.45 L977.82 446.83 L978.35 445.20 L978.88 443.58 L979.40 441.95 L979.91 440.32 L980.42 438.70 L980.93 437.07 L981.43 435.45 L981.92 433.82 L982.40 432.19 L982.88 430.57 L983.35 428.94 L983.82 427.32 L984.28 425.69 L984.74 424.06 L985.18 422.44 L985.63 420.81 L986.06 419.19 L986.49 417.56 L986.91 415.93 L987.33 414.31 L987.74 412.68 L988.14 411.06 L988.54 409.43 L988.93 407.80 L989.31 406.18 L989.69 404.55 L990.06 402.93 L990.42 401.30 L990.78 399.67 L991.13 398.05 L991.47 396.42 L991.80 394.80 L992.13 393.17 L992.46 391.54 L992.77 389.92 L993.08 388.29 L993.38 386.67 L993.68 385.04 L993.96 383.41 L994.24 381.79 L994.52 380.16 L994.79 378.54 L995.04 376.91 L995.30 375.28 L995.54 373.66 L995.78 372.03 L996.01 370.41 L996.24 368.78 L996.45 367.15 L996.66 365.53 L996.86 363.90 L997.06 362.28 L997.25 360.65 L997.43 359.02 L997.60 357.40 L997.77 355.77 L997.93 354.15 L998.08 352.52 L998.22 350.89 L998.36 349.27 L998.49 347.64 L998.61 346.02 L998.73 344.39 L998.83 342.76 L998.93 341.14 L999.03 339.51 L999.11 337.89 L999.19 336.26 L999.26 334.63 L999.32 333.01 L999.38 331.38 L999.43 329.76 L999.47 328.13 L999.50 326.50 L999.53 324.88 L999.55 323.25 L999.56 321.63 L999.56 320.00 L999.56 318.37 L999.55 316.75 L999.53 315.12 L999.50 313.50 L999.47 311.87 L999.43 310.24 L999.38 308.62 L999.32 306.99 L999.26 305.37 L999.19 303.74 L999.11 302.11 L999.03 300.49 L998.93 298.86 L998.83 297.24 L998.73 295.61 L998.61 293.98 L998.49 292.36 L998.36 290.73 L998.22 289.11 L998.08 287.48 L997.93 285.85 L997.77 284.23 L997.60 282.60 L997.43 280.98 L997.25 279.35 L997.06 277.72 L996.86 276.10 L996.66 274.47 L996.45 272.85 L996.24 271.22 L996.01 269.59 L995.78 267.97 L995.54 266.34 L995.30 264.72 L995.04 263.09 L994.79 261.46 L994.52 259.84 L994.24 258.21 L993.96 256.59 L993.68 254.96 L993.38 253.33 L993.08 251.71 L992.77 250.08 L992.46 248.46 L992.13 246.83 L991.80 245.20 L991.47 243.58 L991.13 241.95 L990.78 240.33 L990.42 238.70 L990.06 237.07 L989.69 235.45 L989.31 233.82 L988.93 232.20 L988.54 230.57 L988.14 228.94 L987.74 227.32 L987.33 225.69 L986.91 224.07 L986.49 222.44 L986.06 220.81 L985.63 219.19 L985.18 217.56 L984.74 215.94 L984.28 214.31 L983.82 212.68 L983.35 211.06 L982.88 209.43 L982.40 207.81 L981.92 206.18 L981.43 204.55 L980.93 202.93 L980.42 201.30 L979.91 199.68 L979.40 198.05 L978.88 196.42 L978.35 194.80 L977.82 193.17 L977.28 191.55 L976.74 189.92 L976.19 188.29 L975.63 186.67 L975.07 185.04 L974.50 183.42 L973.93 181.79 L973.35 180.16 L972.77 178.54 L972.18 176.91 L971.58 175.29 L970.99 173.66 L970.38 172.03 L969.77 170.41 L969.16 168.78 L968.54 167.16 L967.91 165.53 L967.28 163.90 L966.65 162.28 L966.01 160.65 L965.36 159.03 L964.71 157.40 L964.06 155.77 L963.40 154.15 L962.73 152.52 L962.06 150.90 L961.39 149.27 L960.71 147.64 L960.03 146.02 L959.34 144.39 L958.65 142.77 L957.96 141.14 L957.26 139.51 L956.55 137.89 L955.85 136.26 L955.13 134.64 L954.42 133.01 L953.70 131.38 L952.97 129.76 L952.25 128.13 L951.52 126.51 L950.78 124.88 L950.04 123.25 L949.30 121.63 L948.55 120.00 L947.80 118.38 L947.05 116.75 L946.29 115.12 L945.53 113.50 L944.77 111.87 L944.00 110.25 L943.23 108.62 L942.46 106.99 L941.68 105.37 L940.90 103.74 L940.12 102.12 L939.33 100.49 L938.55 98.86 L937.76 97.24 L936.96 95.61 L936.17 93.99 L935.37 92.36 L934.57 90.73 L933.76 89.11 L932.96 87.48 L932.15 85.86 L931.34 84.23 L930.52 82.60 L929.71 80.98 L928.89 79.35 L928.07 77.73 L927.25 76.10 L926.43 74.47 L925.60 72.85 L924.77 71.22 L923.95 69.60 L923.12 67.97 L922.28 66.34 L921.45 64.72 L920.62 63.09 L919.78 61.47 L918.94 59.84 L918.10 58.21 L917.26 56.59 L916.42 54.96 L915.58 53.34 L914.73 51.71 L913.89 50.08 L913.04 48.46 L912.20 46.83 L911.35 45.21 L910.50 43.58 L909.65 41.95 L908.81 40.33 L907.96 38.70 L907.11 37.08 L906.26 35.45 L905.40 33.82 L904.55 32.20 L903.70 30.57 L902.85 28.95 L902.00 27.32 M902.00 612.68 L902.43 611.05 L902.85 609.43 L903.28 607.80 L903.70 606.18 L904.13 604.55 L904.55 602.92 L904.98 601.30 L905.40 599.67 L905.83 598.05 L906.25 596.42 L906.68 594.79 L907.10 593.17 L907.52 591.54 L907.94 589.92 L908.37 588.29 L908.79 586.66 L909.21 585.04 L909.63 583.41 L910.05 581.79 L910.47 580.16 L910.89 578.53 L911.31 576.91 L911.73 575.28 L912.14 573.66 L912.56 572.03 L912.97 570.40 L913.39 568.78 L913.80 567.15 L914.21 565.53 L914.63 563.90 L915.04 562.27 L915.45 560.65 L915.85 559.02 L916.26 557.40 L916.67 555.77 L917.07 554.14 L917.48 552.52 L917.88 550.89 L918.28 549.27 L918.68 547.64 L919.08 546.01 L919.48 544.39 L919.88 542.76 L920.27 541.14 L920.67 539.51 L921.06 537.88 L921.45 536.26 L921.84 534.63 L922.23 533.01 L922.62 531.38 L923.00 529.75 L923.38 528.13 L923.77 526.50 L924.15 524.88 L924.52 523.25 L924.90 521.62 L925.28 520.00 L925.65 518.37 L926.02 516.75 L926.39 515.12 L926.76 513.49 L927.12 511.87 L927.49 510.24 L927.85 508.62 L928.21 506.99 L928.57 505.36 L928.92 503.74 L929.28 502.11 L929.63 500.49 L929.98 498.86 L930.33 497.23 L930.67 495.61 L931.02 493.98 L931.36 492.36 L931.70 490.73 L932.03 489.10 L932.37 487.48 L932.70 485.85 L933.03 484.23 L933.36 482.60 L933.68 480.97 L934.00 479.35 L934.32 477.72 L934.64 476.10 L934.96 474.47 L935.27 472.84 L935.58 471.22 L935.89 469.59 L936.19 467.97 L936.49 466.34 L936.79 464.71 L937.09 463.09 L937.38 461.46 L937.68 459.84 L937.96 458.21 L938.25 456.58 L938.53 454.96 L938.81 453.33 L939.09 451.71 L939.37 450.08 L939.64 448.45 L939.91 446.83 L940.18 445.20 L940.44 443.58 L940.70 441.95 L940.96 440.32 L941.21 438.70 L941.46 437.07 L941.71 435.45 L941.96 433.82 L942.20 432.19 L942.44 430.57 L942.68 428.94 L942.91 427.32 L943.14 425.69 L943.37 424.06 L943.59 422.44 L943.81 420.81 L944.03 419.19 L944.24 417.56 L944.46 415.93 L944.66 414.31 L944.87 412.68 L945.07 411.06 L945.27 409.43 L945.46 407.80 L945.65 406.18 L945.84 404.55 L946.03 402.93 L946.21 401.30 L946.39 399.67 L946.56 398.05 L946.73 396.42 L946.90 394.80 L947.07 393.17 L947.23 391.54 L947.39 389.92 L947.54 388.29 L947.69 386.67 L947.84 385.04 L947.98 383.41 L948.12 381.79 L948.26 380.16 L948.39 378.54 L948.52 376.91 L948.65 375.28 L948.77 373.66 L948.89 372.03 L949.01 370.41 L949.12 368.78 L949.23 367.15 L949.33 365.53 L949.43 363.90 L949.53 362.28 L949.62 360.65 L949.71 359.02 L949.80 357.40 L949.88 355.77 L949.96 354.15 L950.04 352.52 L950.11 350.89 L950.18 349.27 L950.24 347.64 L950.31 346.02 L950.36 344.39 L950.42 342.76 L950.47 341.14 L950.51 339.51 L950.56 337.89 L950.59 336.26 L950.63 334.63 L950.66 333.01 L950.69 331.38 L950.71 329.76 L950.73 328.13 L950.75 326.50 L950.76 324.88 L950.77 323.25 L950.78 321.63 L950.78 320.00 L950.78 318.37 L950.77 316.75 L950.76 315.12 L950.75 313.50 L950.73 311.87 L950.71 310.24 L950.69 308.62 L950.66 306.99 L950.63 305.37 L950.59 303.74 L950.56 302.11 L950.51 300.49 L950.47 298.86 L950.42 297.24 L950.36 295.61 L950.31 293.98 L950.24 292.36 L950.18 290.73 L950.11 289.11 L950.04 287.48 L949.96 285.85 L949.88 284.23 L949.80 282.60 L949.71 280.98 L949.62 279.35 L949.53 277.72 L949.43 276.10 L949.33 274.47 L949.23 272.85 L949.12 271.22 L949.01 269.59 L948.89 267.97 L948.77 266.34 L948.65 264.72 L948.52 263.09 L948.39 261.46 L948.26 259.84 L948.12 258.21 L947.98 256.59 L947.84 254.96 L947.69 253.33 L947.54 251.71 L947.39 250.08 L947.23 248.46 L947.07 246.83 L946.90 245.20 L946.73 243.58 L946.56 241.95 L946.39 240.33 L946.21 238.70 L946.03 237.07 L945.84 235.45 L945.65 233.82 L945.46 232.20 L945.27 230.57 L945.07 228.94 L944.87 227.32 L944.66 225.69 L944.46 224.07 L944.24 222.44 L944.03 220.81 L943.81 219.19 L943.59 217.56 L943.37 215.94 L943.14 214.31 L942.91 212.68 L942.68 211.06 L942.44 209.43 L942.20 207.81 L941.96 206.18 L941.71 204.55 L941.46 202.93 L941.21 201.30 L940.96 199.68 L940.70 198.05 L940.44 196.42 L940.18 194.80 L939.91 193.17 L939.64 191.55 L939.37 189.92 L939.09 188.29 L938.81 186.67 L938.53 185.04 L938.25 183.42 L937.96 181.79 L937.68 180.16 L937.38 178.54 L937.09 176.91 L936.79 175.29 L936.49 173.66 L936.19 172.03 L935.89 170.41 L935.58 168.78 L935.27 167.16 L934.96 165.53 L934.64 163.90 L934.32 162.28 L934.00 160.65 L933.68 159.03 L933.36 157.40 L933.03 155.77 L932.70 154.15 L932.37 152.52 L932.03 150.90 L931.70 149.27 L931.36 147.64 L931.02 146.02 L930.67 144.39 L930.33 142.77 L929.98 141.14 L929.63 139.51 L929.28 137.89 L928.92 136.26 L928.57 134.64 L928.21 133.01 L927.85 131.38 L927.49 129.76 L927.12 128.13 L926.76 126.51 L926.39 124.88 L926.02 123.25 L925.65 121.63 L925.28 120.00 L924.90 118.38 L924.52 116.75 L924.15 115.12 L923.77 113.50 L923.38 111.87 L923.00 110.25 L922.62 108.62 L922.23 106.99 L921.84 105.37 L921.45 103.74 L921.06 102.12 L920.67 100.49 L920.27 98.86 L919.88 97.24 L919.48 95.61 L919.08 93.99 L918.68 92.36 L918.28 90.73 L917.88 89.11 L917.48 87.48 L917.07 85.86 L916.67 84.23 L916.26 82.60 L915.85 80.98 L915.45 79.35 L915.04 77.73 L914.63 76.10 L914.21 74.47 L913.80 72.85 L913.39 71.22 L912.97 69.60 L912.56 67.97 L912.14 66.34 L911.73 64.72 L911.31 63.09 L910.89 61.47 L910.47 59.84 L910.05 58.21 L909.63 56.59 L909.21 54.96 L908.79 53.34 L908.37 51.71 L907.94 50.08 L907.52 48.46 L907.10 46.83 L906.68 45.21 L906.25 43.58 L905.83 41.95 L905.40 40.33 L904.98 38.70 L904.55 37.08 L904.13 35.45 L903.70 33.82 L903.28 32.20 L902.85 30.57 L902.43 28.95 L902.00 27.32 M902.00 612.68 L902.00 611.05 L902.00 609.43 L902.00 607.80 L902.00 606.18 L902.00 604.55 L902.00 602.92 L902.00 601.30 L902.00 599.67 L902.00 598.05 L902.00 596.42 L902.00 594.79 L902.00 593.17 L902.00 591.54 L902.00 589.92 L902.00 588.29 L902.00 586.66 L902.00 585.04 L902.00 583.41 L902.00 581.79 L902.00 580.16 L902.00 578.53 L902.00 576.91 L902.00 575.28 L902.00 573.66 L902.00 572.03 L902.00 570.40 L902.00 568.78 L902.00 567.15 L902.00 565.53 L902.00 563.90 L902.00 562.27 L902.00 560.65 L902.00 559.02 L902.00 557.40 L902.00 555.77 L902.00 554.14 L902.00 552.52 L902.00 550.89 L902.00 549.27 L902.00 547.64 L902.00 546.01 L902.00 544.39 L902.00 542.76 L902.00 541.14 L902.00 539.51 L902.00 537.88 L902.00 536.26 L902.00 534.63 L902.00 533.01 L902.00 531.38 L902.00 529.75 L902.00 528.13 L902.00 526.50 L902.00 524.88 L902.00 523.25 L902.00 521.62 L902.00 520.00 L902.00 518.37 L902.00 516.75 L902.00 515.12 L902.00 513.49 L902.00 511.87 L902.00 510.24 L902.00 508.62 L902.00 506.99 L902.00 505.36 L902.00 503.74 L902.00 502.11 L902.00 500.49 L902.00 498.86 L902.00 497.23 L902.00 495.61 L902.00 493.98 L902.00 492.36 L902.00 490.73 L902.00 489.10 L902.00 487.48 L902.00 485.85 L902.00 484.23 L902.00 482.60 L902.00 480.97 L902.00 479.35 L902.00 477.72 L902.00 476.10 L902.00 474.47 L902.00 472.84 L902.00 471.22 L902.00 469.59 L902.00 467.97 L902.00 466.34 L902.00 464.71 L902.00 463.09 L902.00 461.46 L902.00 459.84 L902.00 458.21 L902.00 456.58 L902.00 454.96 L902.00 453.33 L902.00 451.71 L902.00 450.08 L902.00 448.45 L902.00 446.83 L902.00 445.20 L902.00 443.58 L902.00 441.95 L902.00 440.32 L902.00 438.70 L902.00 437.07 L902.00 435.45 L902.00 433.82 L902.00 432.19 L902.00 430.57 L902.00 428.94 L902.00 427.32 L902.00 425.69 L902.00 424.06 L902.00 422.44 L902.00 420.81 L902.00 419.19 L902.00 417.56 L902.00 415.93 L902.00 414.31 L902.00 412.68 L902.00 411.06 L902.00 409.43 L902.00 407.80 L902.00 406.18 L902.00 404.55 L902.00 402.93 L902.00 401.30 L902.00 399.67 L902.00 398.05 L902.00 396.42 L902.00 394.80 L902.00 393.17 L902.00 391.54 L902.00 389.92 L902.00 388.29 L902.00 386.67 L902.00 385.04 L902.00 383.41 L902.00 381.79 L902.00 380.16 L902.00 378.54 L902.00 376.91 L902.00 375.28 L902.00 373.66 L902.00 372.03 L902.00 370.41 L902.00 368.78 L902.00 367.15 L902.00 365.53 L902.00 363.90 L902.00 362.28 L902.00 360.65 L902.00 359.02 L902.00 357.40 L902.00 355.77 L902.00 354.15 L902.00 352.52 L902.00 350.89 L902.00 349.27 L902.00 347.64 L902.00 346.02 L902.00 344.39 L902.00 342.76 L902.00 341.14 L902.00 339.51 L902.00 337.89 L902.00 336.26 L902.00 334.63 L902.00 333.01 L902.00 331.38 L902.00 329.76 L902.00 328.13 L902.00 326.50 L902.00 324.88 L902.00 323.25 L902.00 321.63 L902.00 320.00 L902.00 318.37 L902.00 316.75 L902.00 315.12 L902.00 313.50 L902.00 311.87 L902.00 310.24 L902.00 308.62 L902.00 306.99 L902.00 305.37 L902.00 303.74 L902.00 302.11 L902.00 300.49 L902.00 298.86 L902.00 297.24 L902.00 295.61 L902.00 293.98 L902.00 292.36 L902.00 290.73 L902.00 289.11 L902.00 287.48 L902.00 285.85 L902.00 284.23 L902.00 282.60 L902.00 280.98 L902.00 279.35 L902.00 277.72 L902.00 276.10 L902.00 274.47 L902.00 272.85 L902.00 271.22 L902.00 269.59 L902.00 267.97 L902.00 266.34 L902.00 264.72 L902.00 263.09 L902.00 261.46 L902.00 259.84 L902.00 258.21 L902.00 256.59 L902.00 254.96 L902.00 253.33 L902.00 251.71 L902.00 250.08 L902.00 248.46 L902.00 246.83 L902.00 245.20 L902.00 243.58 L902.00 241.95 L902.00 240.33 L902.00 238.70 L902.00 237.07 L902.00 235.45 L902.00 233.82 L902.00 232.20 L902.00 230.57 L902.00 228.94 L902.00 227.32 L902.00 225.69 L902.00 224.07 L902.00 222.44 L902.00 220.81 L902.00 219.19 L902.00 217.56 L902.00 215.94 L902.00 214.31 L902.00 212.68 L902.00 211.06 L902.00 209.43 L902.00 207.81 L902.00 206.18 L902.00 204.55 L902.00 202.93 L902.00 201.30 L902.00 199.68 L902.00 198.05 L902.00 196.42 L902.00 194.80 L902.00 193.17 L902.00 191.55 L902.00 189.92 L902.00 188.29 L902.00 186.67 L902.00 185.04 L902.00 183.42 L902.00 181.79 L902.00 180.16 L902.00 178.54 L902.00 176.91 L902.00 175.29 L902.00 173.66 L902.00 172.03 L902.00 170.41 L902.00 168.78 L902.00 167.16 L902.00 165.53 L902.00 163.90 L902.00 162.28 L902.00 160.65 L902.00 159.03 L902.00 157.40 L902.00 155.77 L902.00 154.15 L902.00 152.52 L902.00 150.90 L902.00 149.27 L902.00 147.64 L902.00 146.02 L902.00 144.39 L902.00 142.77 L902.00 141.14 L902.00 139.51 L902.00 137.89 L902.00 136.26 L902.00 134.64 L902.00 133.01 L902.00 131.38 L902.00 129.76 L902.00 128.13 L902.00 126.51 L902.00 124.88 L902.00 123.25 L902.00 121.63 L902.00 120.00 L902.00 118.38 L902.00 116.75 L902.00 115.12 L902.00 113.50 L902.00 111.87 L902.00 110.25 L902.00 108.62 L902.00 106.99 L902.00 105.37 L902.00 103.74 L902.00 102.12 L902.00 100.49 L902.00 98.86 L902.00 97.24 L902.00 95.61 L902.00 93.99 L902.00 92.36 L902.00 90.73 L902.00 89.11 L902.00 87.48 L902.00 85.86 L902.00 84.23 L902.00 82.60 L902.00 80.98 L902.00 79.35 L902.00 77.73 L902.00 76.10 L902.00 74.47 L902.00 72.85 L902.00 71.22 L902.00 69.60 L902.00 67.97 L902.00 66.34 L902.00 64.72 L902.00 63.09 L902.00 61.47 L902.00 59.84 L902.00 58.21 L902.00 56.59 L902.00 54.96 L902.00 53.34 L902.00 51.71 L902.00 50.08 L902.00 48.46 L902.00 46.83 L902.00 45.21 L902.00 43.58 L902.00 41.95 L902.00 40.33 L902.00 38.70 L902.00 37.08 L902.00 35.45 L902.00 33.82 L902.00 32.20 L902.00 30.57 L902.00 28.95 L902.00 27.32 M902.00 612.68 L901.57 611.05 L901.15 609.43 L900.72 607.80 L900.30 606.18 L899.87 604.55 L899.45 602.92 L899.02 601.30 L898.60 599.67 L898.17 598.05 L897.75 596.42 L897.32 594.79 L896.90 593.17 L896.48 591.54 L896.06 589.92 L895.63 588.29 L895.21 586.66 L894.79 585.04 L894.37 583.41 L893.95 581.79 L893.53 580.16 L893.11 578.53 L892.69 576.91 L892.27 575.28 L891.86 573.66 L891.44 572.03 L891.03 570.40 L890.61 568.78 L890.20 567.15 L889.79 565.53 L889.37 563.90 L888.96 562.27 L888.55 560.65 L888.15 559.02 L887.74 557.40 L887.33 555.77 L886.93 554.14 L886.52 552.52 L886.12 550.89 L885.72 549.27 L885.32 547.64 L884.92 546.01 L884.52 544.39 L884.12 542.76 L883.73 541.14 L883.33 539.51 L882.94 537.88 L882.55 536.26 L882.16 534.63 L881.77 533.01 L881.38 531.38 L881.00 529.75 L880.62 528.13 L880.23 526.50 L879.85 524.88 L879.48 523.25 L879.10 521.62 L878.72 520.00 L878.35 518.37 L877.98 516.75 L877.61 515.12 L877.24 513.49 L876.88 511.87 L876.51 510.24 L876.15 508.62 L875.79 506.99 L875.43 505.36 L875.08 503.74 L874.72 502.11 L874.37 500.49 L874.02 498.86 L873.67 497.23 L873.33 495.61 L872.98 493.98 L872.64 492.36 L872.30 490.73 L871.97 489.10 L871.63 487.48 L871.30 485.85 L870.97 484.23 L870.64 482.60 L870.32 480.97 L870.00 479.35 L869.68 477.72 L869.36 476.10 L869.04 474.47 L868.73 472.84 L868.42 471.22 L868.11 469.59 L867.81 467.97 L867.51 466.34 L867.21 464.71 L866.91 463.09 L866.62 461.46 L866.32 459.84 L866.04 458.21 L865.75 456.58 L865.47 454.96 L865.19 453.33 L864.91 451.71 L864.63 450.08 L864.36 448.45 L864.09 446.83 L863.82 445.20 L863.56 443.58 L863.30 441.95 L863.04 440.32 L862.79 438.70 L862.54 437.07 L862.29 435.45 L862.04 433.82 L861.80 432.19 L861.56 430.57 L861.32 428.94 L861.09 427.32 L860.86 425.69 L860.63 424.06 L860.41 422.44 L860.19 420.81 L859.97 419.19 L859.76 417.56 L859.54 415.93 L859.34 414.31 L859.13 412.68 L858.93 411.06 L858.73 409.43 L858.54 407.80 L858.35 406.18 L858.16 404.55 L857.97 402.93 L857.79 401.30 L857.61 399.67 L857.44 398.05 L857.27 396.42 L857.10 394.80 L856.93 393.17 L856.77 391.54 L856.61 389.92 L856.46 388.29 L856.31 386.67 L856.16 385.04 L856.02 383.41 L855.88 381.79 L855.74 380.16 L855.61 378.54 L855.48 376.91 L855.35 375.28 L855.23 373.66 L855.11 372.03 L854.99 370.41 L854.88 368.78 L854.77 367.15 L854.67 365.53 L854.57 363.90 L854.47 362.28 L854.38 360.65 L854.29 359.02 L854.20 357.40 L854.12 355.77 L854.04 354.15 L853.96 352.52 L853.89 350.89 L853.82 349.27 L853.76 347.64 L853.69 346.02 L853.64 344.39 L853.58 342.76 L853.53 341.14 L853.49 339.51 L853.44 337.89 L853.41 336.26 L853.37 334.63 L853.34 333.01 L853.31 331.38 L853.29 329.76 L853.27 328.13 L853.25 326.50 L853.24 324.88 L853.23 323.25 L853.22 321.63 L853.22 320.00 L853.22 318.37 L853.23 316.75 L853.24 315.12 L853.25 313.50 L853.27 311.87 L853.29 310.24 L853.31 308.62 L853.34 306.99 L853.37 305.37 L853.41 303.74 L853.44 302.11 L853.49 300.49 L853.53 298.86 L853.58 297.24 L853.64 295.61 L853.69 293.98 L853.76 292.36 L853.82 290.73 L853.89 289.11 L853.96 287.48 L854.04 285.85 L854.12 284.23 L854.20 282.60 L854.29 280.98 L854.38 279.35 L854.47 277.72 L854.57 276.10 L854.67 274.47 L854.77 272.85 L854.88 271.22 L854.99 269.59 L855.11 267.97 L855.23 266.34 L855.35 264.72 L855.48 263.09 L855.61 261.46 L855.74 259.84 L855.88 258.21 L856.02 256.59 L856.16 254.96 L856.31 253.33 L856.46 251.71 L856.61 250.08 L856.77 248.46 L856.93 246.83 L857.10 245.20 L857.27 243.58 L857.44 241.95 L857.61 240.33 L857.79 238.70 L857.97 237.07 L858.16 235.45 L858.35 233.82 L858.54 232.20 L858.73 230.57 L858.93 228.94 L859.13 227.32 L859.34 225.69 L859.54 224.07 L859.76 222.44 L859.97 220.81 L860.19 219.19 L860.41 217.56 L860.63 215.94 L860.86 214.31 L861.09 212.68 L861.32 211.06 L861.56 209.43 L861.80 207.81 L862.04 206.18 L862.29 204.55 L862.54 202.93 L862.79 201.30 L863.04 199.68 L863.30 198.05 L863.56 196.42 L863.82 194.80 L864.09 193.17 L864.36 191.55 L864.63 189.92 L864.91 188.29 L865.19 186.67 L865.47 185.04 L865.75 183.42 L866.04 181.79 L866.32 180.16 L866.62 178.54 L866.91 176.91 L867.21 175.29 L867.51 173.66 L867.81 172.03 L868.11 170.41 L868.42 168.78 L868.73 167.16 L869.04 165.53 L869.36 163.90 L869.68 162.28 L870.00 160.65 L870.32 159.03 L870.64 157.40 L870.97 155.77 L871.30 154.15 L871.63 152.52 L871.97 150.90 L872.30 149.27 L872.64 147.64 L872.98 146.02 L873.33 144.39 L873.67 142.77 L874.02 141.14 L874.37 139.51 L874.72 137.89 L875.08 136.26 L875.43 134.64 L875.79 133.01 L876.15 131.38 L876.51 129.76 L876.88 128.13 L877.24 126.51 L877.61 124.88 L877.98 123.25 L878.35 121.63 L878.72 120.00 L879.10 118.38 L879.48 116.75 L879.85 115.12 L880.23 113.50 L880.62 111.87 L881.00 110.25 L881.38 108.62 L881.77 106.99 L882.16 105.37 L882.55 103.74 L882.94 102.12 L883.33 100.49 L883.73 98.86 L884.12 97.24 L884.52 95.61 L884.92 93.99 L885.32 92.36 L885.72 90.73 L886.12 89.11 L886.52 87.48 L886.93 85.86 L887.33 84.23 L887.74 82.60 L888.15 80.98 L888.55 79.35 L888.96 77.73 L889.37 76.10 L889.79 74.47 L890.20 72.85 L890.61 71.22 L891.03 69.60 L891.44 67.97 L891.86 66.34 L892.27 64.72 L892.69 63.09 L893.11 61.47 L893.53 59.84 L893.95 58.21 L894.37 56.59 L894.79 54.96 L895.21 53.34 L895.63 51.71 L896.06 50.08 L896.48 48.46 L896.90 46.83 L897.32 45.21 L897.75 43.58 L898.17 41.95 L898.60 40.33 L899.02 38.70 L899.45 37.08 L899.87 35.45 L900.30 33.82 L900.72 32.20 L901.15 30.57 L901.57 28.95 L902.00 27.32 M902.00 612.68 L901.15 611.05 L900.30 609.43 L899.45 607.80 L898.60 606.18 L897.74 604.55 L896.89 602.92 L896.04 601.30 L895.19 599.67 L894.35 598.05 L893.50 596.42 L892.65 594.79 L891.80 593.17 L890.96 591.54 L890.11 589.92 L889.27 588.29 L888.42 586.66 L887.58 585.04 L886.74 583.41 L885.90 581.79 L885.06 580.16 L884.22 578.53 L883.38 576.91 L882.55 575.28 L881.72 573.66 L880.88 572.03 L880.05 570.40 L879.23 568.78 L878.40 567.15 L877.57 565.53 L876.75 563.90 L875.93 562.27 L875.11 560.65 L874.29 559.02 L873.48 557.40 L872.66 555.77 L871.85 554.14 L871.04 552.52 L870.24 550.89 L869.43 549.27 L868.63 547.64 L867.83 546.01 L867.04 544.39 L866.24 542.76 L865.45 541.14 L864.67 539.51 L863.88 537.88 L863.10 536.26 L862.32 534.63 L861.54 533.01 L860.77 531.38 L860.00 529.75 L859.23 528.13 L858.47 526.50 L857.71 524.88 L856.95 523.25 L856.20 521.62 L855.45 520.00 L854.70 518.37 L853.96 516.75 L853.22 515.12 L852.48 513.49 L851.75 511.87 L851.03 510.24 L850.30 508.62 L849.58 506.99 L848.87 505.36 L848.15 503.74 L847.45 502.11 L846.74 500.49 L846.04 498.86 L845.35 497.23 L844.66 495.61 L843.97 493.98 L843.29 492.36 L842.61 490.73 L841.94 489.10 L841.27 487.48 L840.60 485.85 L839.94 484.23 L839.29 482.60 L838.64 480.97 L837.99 479.35 L837.35 477.72 L836.72 476.10 L836.09 474.47 L835.46 472.84 L834.84 471.22 L834.23 469.59 L833.62 467.97 L833.01 466.34 L832.42 464.71 L831.82 463.09 L831.23 461.46 L830.65 459.84 L830.07 458.21 L829.50 456.58 L828.93 454.96 L828.37 453.33 L827.81 451.71 L827.26 450.08 L826.72 448.45 L826.18 446.83 L825.65 445.20 L825.12 443.58 L824.60 441.95 L824.09 440.32 L823.58 438.70 L823.07 437.07 L822.57 435.45 L822.08 433.82 L821.60 432.19 L821.12 430.57 L820.65 428.94 L820.18 427.32 L819.72 425.69 L819.26 424.06 L818.82 422.44 L818.37 420.81 L817.94 419.19 L817.51 417.56 L817.09 415.93 L816.67 414.31 L816.26 412.68 L815.86 411.06 L815.46 409.43 L815.07 407.80 L814.69 406.18 L814.31 404.55 L813.94 402.93 L813.58 401.30 L813.22 399.67 L812.87 398.05 L812.53 396.42 L812.20 394.80 L811.87 393.17 L811.54 391.54 L811.23 389.92 L810.92 388.29 L810.62 386.67 L810.32 385.04 L810.04 383.41 L809.76 381.79 L809.48 380.16 L809.21 378.54 L808.96 376.91 L808.70 375.28 L808.46 373.66 L808.22 372.03 L807.99 370.41 L807.76 368.78 L807.55 367.15 L807.34 365.53 L807.14 363.90 L806.94 362.28 L806.75 360.65 L806.57 359.02 L806.40 357.40 L806.23 355.77 L806.07 354.15 L805.92 352.52 L805.78 350.89 L805.64 349.27 L805.51 347.64 L805.39 346.02 L805.27 344.39 L805.17 342.76 L805.07 341.14 L804.97 339.51 L804.89 337.89 L804.81 336.26 L804.74 334.63 L804.68 333.01 L804.62 331.38 L804.57 329.76 L804.53 328.13 L804.50 326.50 L804.47 324.88 L804.45 323.25 L804.44 321.63 L804.44 320.00 L804.44 318.37 L804.45 316.75 L804.47 315.12 L804.50 313.50 L804.53 311.87 L804.57 310.24 L804.62 308.62 L804.68 306.99 L804.74 305.37 L804.81 303.74 L804.89 302.11 L804.97 300.49 L805.07 298.86 L805.17 297.24 L805.27 295.61 L805.39 293.98 L805.51 292.36 L805.64 290.73 L805.78 289.11 L805.92 287.48 L806.07 285.85 L806.23 284.23 L806.40 282.60 L806.57 280.98 L806.75 279.35 L806.94 277.72 L807.14 276.10 L807.34 274.47 L807.55 272.85 L807.76 271.22 L807.99 269.59 L808.22 267.97 L808.46 266.34 L808.70 264.72 L808.96 263.09 L809.21 261.46 L809.48 259.84 L809.76 258.21 L810.04 256.59 L810.32 254.96 L810.62 253.33 L810.92 251.71 L811.23 250.08 L811.54 248.46 L811.87 246.83 L812.20 245.20 L812.53 243.58 L812.87 241.95 L813.22 240.33 L813.58 238.70 L813.94 237.07 L814.31 235.45 L814.69 233.82 L815.07 232.20 L815.46 230.57 L815.86 228.94 L816.26 227.32 L816.67 225.69 L817.09 224.07 L817.51 222.44 L817.94 220.81 L818.37 219.19 L818.82 217.56 L819.26 215.94 L819.72 214.31 L820.18 212.68 L820.65 211.06 L821.12 209.43 L821.60 207.81 L822.08 206.18 L822.57 204.55 L823.07 202.93 L823.58 201.30 L824.09 199.68 L824.60 198.05 L825.12 196.42 L825.65 194.80 L826.18 193.17 L826.72 191.55 L827.26 189.92 L827.81 188.29 L828.37 186.67 L828.93 185.04 L829.50 183.42 L830.07 181.79 L830.65 180.16 L831.23 178.54 L831.82 176.91 L832.42 175.29 L833.01 173.66 L833.62 172.03 L834.23 170.41 L834.84 168.78 L835.46 167.16 L836.09 165.53 L836.72 163.90 L837.35 162.28 L837.99 160.65 L838.64 159.03 L839.29 157.40 L839.94 155.77 L840.60 154.15 L841.27 152.52 L841.94 150.90 L842.61 149.27 L843.29 147.64 L843.97 146.02 L844.66 144.39 L845.35 142.77 L846.04 141.14 L846.74 139.51 L847.45 137.89 L848.15 136.26 L848.87 134.64 L849.58 133.01 L850.30 131.38 L851.03 129.76 L851.75 128.13 L852.48 126.51 L853.22 124.88 L853.96 123.25 L854.70 121.63 L855.45 120.00 L856.20 118.38 L856.95 116.75 L857.71 115.12 L858.47 113.50 L859.23 111.87 L860.00 110.25 L860.77 108.62 L861.54 106.99 L862.32 105.37 L863.10 103.74 L863.88 102.12 L864.67 100.49 L865.45 98.86 L866.24 97.24 L867.04 95.61 L867.83 93.99 L868.63 92.36 L869.43 90.73 L870.24 89.11 L871.04 87.48 L871.85 85.86 L872.66 84.23 L873.48 82.60 L874.29 80.98 L875.11 79.35 L875.93 77.73 L876.75 76.10 L877.57 74.47 L878.40 72.85 L879.23 71.22 L880.05 69.60 L880.88 67.97 L881.72 66.34 L882.55 64.72 L883.38 63.09 L884.22 61.47 L885.06 59.84 L885.90 58.21 L886.74 56.59 L887.58 54.96 L888.42 53.34 L889.27 51.71 L890.11 50.08 L890.96 48.46 L891.80 46.83 L892.65 45.21 L893.50 43.58 L894.35 41.95 L895.19 40.33 L896.04 38.70 L896.89 37.08 L897.74 35.45 L898.60 33.82 L899.45 32.20 L900.30 30.57 L901.15 28.95 L902.00 27.32 M902.00 612.68 L900.72 611.05 L899.45 609.43 L898.17 607.80 L896.89 606.18 L895.62 604.55 L894.34 602.92 L893.07 601.30 L891.79 599.67 L890.52 598.05 L889.25 596.42 L887.97 594.79 L886.70 593.17 L885.43 591.54 L884.17 589.92 L882.90 588.29 L881.63 586.66 L880.37 585.04 L879.11 583.41 L877.85 581.79 L876.59 580.16 L875.33 578.53 L874.08 576.91 L872.82 575.28 L871.57 573.66 L870.33 572.03 L869.08 570.40 L867.84 568.78 L866.60 567.15 L865.36 565.53 L864.12 563.90 L862.89 562.27 L861.66 560.65 L860.44 559.02 L859.21 557.40 L857.99 555.77 L856.78 554.14 L855.57 552.52 L854.36 550.89 L853.15 549.27 L851.95 547.64 L850.75 546.01 L849.56 544.39 L848.37 542.76 L847.18 541.14 L846.00 539.51 L844.82 537.88 L843.65 536.26 L842.48 534.63 L841.31 533.01 L840.15 531.38 L839.00 529.75 L837.85 528.13 L836.70 526.50 L835.56 524.88 L834.43 523.25 L833.30 521.62 L832.17 520.00 L831.05 518.37 L829.94 516.75 L828.83 515.12 L827.73 513.49 L826.63 511.87 L825.54 510.24 L824.45 508.62 L823.37 506.99 L822.30 505.36 L821.23 503.74 L820.17 502.11 L819.11 500.49 L818.06 498.86 L817.02 497.23 L815.98 495.61 L814.95 493.98 L813.93 492.36 L812.91 490.73 L811.90 489.10 L810.90 487.48 L809.91 485.85 L808.92 484.23 L807.93 482.60 L806.96 480.97 L805.99 479.35 L805.03 477.72 L804.08 476.10 L803.13 474.47 L802.20 472.84 L801.27 471.22 L800.34 469.59 L799.43 467.97 L798.52 466.34 L797.62 464.71 L796.73 463.09 L795.85 461.46 L794.97 459.84 L794.11 458.21 L793.25 456.58 L792.40 454.96 L791.56 453.33 L790.72 451.71 L789.90 450.08 L789.08 448.45 L788.27 446.83 L787.47 445.20 L786.68 443.58 L785.90 441.95 L785.13 440.32 L784.36 438.70 L783.61 437.07 L782.86 435.45 L782.13 433.82 L781.40 432.19 L780.68 430.57 L779.97 428.94 L779.27 427.32 L778.58 425.69 L777.90 424.06 L777.22 422.44 L776.56 420.81 L775.91 419.19 L775.27 417.56 L774.63 415.93 L774.01 414.31 L773.39 412.68 L772.79 411.06 L772.19 409.43 L771.61 407.80 L771.04 406.18 L770.47 404.55 L769.92 402.93 L769.37 401.30 L768.84 399.67 L768.31 398.05 L767.80 396.42 L767.29 394.80 L766.80 393.17 L766.32 391.54 L765.84 389.92 L765.38 388.29 L764.93 386.67 L764.49 385.04 L764.05 383.41 L763.63 381.79 L763.22 380.16 L762.82 378.54 L762.43 376.91 L762.05 375.28 L761.69 373.66 L761.33 372.03 L760.98 370.41 L760.65 368.78 L760.32 367.15 L760.01 365.53 L759.70 363.90 L759.41 362.28 L759.13 360.65 L758.86 359.02 L758.60 357.40 L758.35 355.77 L758.11 354.15 L757.88 352.52 L757.67 350.89 L757.46 349.27 L757.27 347.64 L757.08 346.02 L756.91 344.39 L756.75 342.76 L756.60 341.14 L756.46 339.51 L756.33 337.89 L756.22 336.26 L756.11 334.63 L756.02 333.01 L755.93 331.38 L755.86 329.76 L755.80 328.13 L755.75 326.50 L755.71 324.88 L755.68 323.25 L755.67 321.63 L755.66 320.00 L755.67 318.37 L755.68 316.75 L755.71 315.12 L755.75 313.50 L755.80 311.87 L755.86 310.24 L755.93 308.62 L756.02 306.99 L756.11 305.37 L756.22 303.74 L756.33 302.11 L756.46 300.49 L756.60 298.86 L756.75 297.24 L756.91 295.61 L757.08 293.98 L757.27 292.36 L757.46 290.73 L757.67 289.11 L757.88 287.48 L758.11 285.85 L758.35 284.23 L758.60 282.60 L758.86 280.98 L759.13 279.35 L759.41 277.72 L759.70 276.10 L760.01 274.47 L760.32 272.85 L760.65 271.22 L760.98 269.59 L761.33 267.97 L761.69 266.34 L762.05 264.72 L762.43 263.09 L762.82 261.46 L763.22 259.84 L763.63 258.21 L764.05 256.59 L764.49 254.96 L764.93 253.33 L765.38 251.71 L765.84 250.08 L766.32 248.46 L766.80 246.83 L767.29 245.20 L767.80 243.58 L768.31 241.95 L768.84 240.33 L769.37 238.70 L769.92 237.07 L770.47 235.45 L771.04 233.82 L771.61 232.20 L772.19 230.57 L772.79 228.94 L773.39 227.32 L774.01 225.69 L774.63 224.07 L775.27 222.44 L775.91 220.81 L776.56 219.19 L777.22 217.56 L777.90 215.94 L778.58 214.31 L779.27 212.68 L779.97 211.06 L780.68 209.43 L781.40 207.81 L782.13 206.18 L782.86 204.55 L783.61 202.93 L784.36 201.30 L785.13 199.68 L785.90 198.05 L786.68 196.42 L787.47 194.80 L788.27 193.17 L789.08 191.55 L789.90 189.92 L790.72 188.29 L791.56 186.67 L792.40 185.04 L793.25 183.42 L794.11 181.79 L794.97 180.16 L795.85 178.54 L796.73 176.91 L797.62 175.29 L798.52 173.66 L799.43 172.03 L800.34 170.41 L801.27 168.78 L802.20 167.16 L803.13 165.53 L804.08 163.90 L805.03 162.28 L805.99 160.65 L806.96 159.03 L807.93 157.40 L808.92 155.77 L809.91 154.15 L810.90 152.52 L811.90 150.90 L812.91 149.27 L813.93 147.64 L814.95 146.02 L815.98 144.39 L817.02 142.77 L818.06 141.14 L819.11 139.51 L820.17 137.89 L821.23 136.26 L822.30 134.64 L823.37 133.01 L824.45 131.38 L825.54 129.76 L826.63 128.13 L827.73 126.51 L828.83 124.88 L829.94 123.25 L831.05 121.63 L832.17 120.00 L833.30 118.38 L834.43 116.75 L835.56 115.12 L836.70 113.50 L837.85 111.87 L839.00 110.25 L840.15 108.62 L841.31 106.99 L842.48 105.37 L843.65 103.74 L844.82 102.12 L846.00 100.49 L847.18 98.86 L848.37 97.24 L849.56 95.61 L850.75 93.99 L851.95 92.36 L853.15 90.73 L854.36 89.11 L855.57 87.48 L856.78 85.86 L857.99 84.23 L859.21 82.60 L860.44 80.98 L861.66 79.35 L862.89 77.73 L864.12 76.10 L865.36 74.47 L866.60 72.85 L867.84 71.22 L869.08 69.60 L870.33 67.97 L871.57 66.34 L872.82 64.72 L874.08 63.09 L875.33 61.47 L876.59 59.84 L877.85 58.21 L879.11 56.59 L880.37 54.96 L881.63 53.34 L882.90 51.71 L884.17 50.08 L885.43 48.46 L886.70 46.83 L887.97 45.21 L889.25 43.58 L890.52 41.95 L891.79 40.33 L893.07 38.70 L894.34 37.08 L895.62 35.45 L896.89 33.82 L898.17 32.20 L899.45 30.57 L900.72 28.95 L902.00 27.32 M902.00 612.68 L900.30 611.05 L898.59 609.43 L896.89 607.80 L895.19 606.18 L893.49 604.55 L891.79 602.92 L890.09 601.30 L888.39 599.67 L886.69 598.05 L884.99 596.42 L883.30 594.79 L881.60 593.17 L879.91 591.54 L878.22 589.92 L876.53 588.29 L874.84 586.66 L873.16 585.04 L871.48 583.41 L869.80 581.79 L868.12 580.16 L866.44 578.53 L864.77 576.91 L863.10 575.28 L861.43 573.66 L859.77 572.03 L858.11 570.40 L856.45 568.78 L854.80 567.15 L853.15 565.53 L851.50 563.90 L849.86 562.27 L848.22 560.65 L846.58 559.02 L844.95 557.40 L843.33 555.77 L841.70 554.14 L840.09 552.52 L838.48 550.89 L836.87 549.27 L835.27 547.64 L833.67 546.01 L832.08 544.39 L830.49 542.76 L828.91 541.14 L827.33 539.51 L825.76 537.88 L824.20 536.26 L822.64 534.63 L821.09 533.01 L819.54 531.38 L818.00 529.75 L816.47 528.13 L814.94 526.50 L813.42 524.88 L811.90 523.25 L810.40 521.62 L808.90 520.00 L807.40 518.37 L805.92 516.75 L804.44 515.12 L802.97 513.49 L801.51 511.87 L800.05 510.24 L798.60 508.62 L797.16 506.99 L795.73 505.36 L794.31 503.74 L792.89 502.11 L791.48 500.49 L790.08 498.86 L788.69 497.23 L787.31 495.61 L785.94 493.98 L784.57 492.36 L783.22 490.73 L781.87 489.10 L780.53 487.48 L779.21 485.85 L777.89 484.23 L776.58 482.60 L775.28 480.97 L773.99 479.35 L772.71 477.72 L771.44 476.10 L770.18 474.47 L768.93 472.84 L767.69 471.22 L766.46 469.59 L765.24 467.97 L764.03 466.34 L762.83 464.71 L761.64 463.09 L760.46 461.46 L759.30 459.84 L758.14 458.21 L757.00 456.58 L755.86 454.96 L754.74 453.33 L753.63 451.71 L752.53 450.08 L751.44 448.45 L750.36 446.83 L749.30 445.20 L748.24 443.58 L747.20 441.95 L746.17 440.32 L745.15 438.70 L744.14 437.07 L743.15 435.45 L742.17 433.82 L741.20 432.19 L740.24 430.57 L739.29 428.94 L738.36 427.32 L737.44 425.69 L736.53 424.06 L735.63 422.44 L734.75 420.81 L733.88 419.19 L733.02 417.56 L732.18 415.93 L731.34 414.31 L730.53 412.68 L729.72 411.06 L728.93 409.43 L728.15 407.80 L727.38 406.18 L726.63 404.55 L725.89 402.93 L725.16 401.30 L724.45 399.67 L723.75 398.05 L723.06 396.42 L722.39 394.80 L721.73 393.17 L721.09 391.54 L720.46 389.92 L719.84 388.29 L719.24 386.67 L718.65 385.04 L718.07 383.41 L717.51 381.79 L716.96 380.16 L716.43 378.54 L715.91 376.91 L715.41 375.28 L714.92 373.66 L714.44 372.03 L713.98 370.41 L713.53 368.78 L713.10 367.15 L712.68 365.53 L712.27 363.90 L711.88 362.28 L711.51 360.65 L711.14 359.02 L710.80 357.40 L710.46 355.77 L710.15 354.15 L709.84 352.52 L709.56 350.89 L709.28 349.27 L709.02 347.64 L708.78 346.02 L708.55 344.39 L708.33 342.76 L708.13 341.14 L707.95 339.51 L707.78 337.89 L707.62 336.26 L707.48 334.63 L707.36 333.01 L707.24 331.38 L707.15 329.76 L707.07 328.13 L707.00 326.50 L706.95 324.88 L706.91 323.25 L706.89 321.63 L706.88 320.00 L706.89 318.37 L706.91 316.75 L706.95 315.12 L707.00 313.50 L707.07 311.87 L707.15 310.24 L707.24 308.62 L707.36 306.99 L707.48 305.37 L707.62 303.74 L707.78 302.11 L707.95 300.49 L708.13 298.86 L708.33 297.24 L708.55 295.61 L708.78 293.98 L709.02 292.36 L709.28 290.73 L709.56 289.11 L709.84 287.48 L710.15 285.85 L710.46 284.23 L710.80 282.60 L711.14 280.98 L711.51 279.35 L711.88 277.72 L712.27 276.10 L712.68 274.47 L713.10 272.85 L713.53 271.22 L713.98 269.59 L714.44 267.97 L714.92 266.34 L715.41 264.72 L715.91 263.09 L716.43 261.46 L716.96 259.84 L717.51 258.21 L718.07 256.59 L718.65 254.96 L719.24 253.33 L719.84 251.71 L720.46 250.08 L721.09 248.46 L721.73 246.83 L722.39 245.20 L723.06 243.58 L723.75 241.95 L724.45 240.33 L725.16 238.70 L725.89 237.07 L726.63 235.45 L727.38 233.82 L728.15 232.20 L728.93 230.57 L729.72 228.94 L730.53 227.32 L731.34 225.69 L732.18 224.07 L733.02 222.44 L733.88 220.81 L734.75 219.19 L735.63 217.56 L736.53 215.94 L737.44 214.31 L738.36 212.68 L739.29 211.06 L740.24 209.43 L741.20 207.81 L742.17 206.18 L743.15 204.55 L744.14 202.93 L745.15 201.30 L746.17 199.68 L747.20 198.05 L748.24 196.42 L749.30 194.80 L750.36 193.17 L751.44 191.55 L752.53 189.92 L753.63 188.29 L754.74 186.67 L755.86 185.04 L757.00 183.42 L758.14 181.79 L759.30 180.16 L760.46 178.54 L761.64 176.91 L762.83 175.29 L764.03 173.66 L765.24 172.03 L766.46 170.41 L767.69 168.78 L768.93 167.16 L770.18 165.53 L771.44 163.90 L772.71 162.28 L773.99 160.65 L775.28 159.03 L776.58 157.40 L777.89 155.77 L779.21 154.15 L780.53 152.52 L781.87 150.90 L783.22 149.27 L784.57 147.64 L785.94 146.02 L787.31 144.39 L788.69 142.77 L790.08 141.14 L791.48 139.51 L792.89 137.89 L794.31 136.26 L795.73 134.64 L797.16 133.01 L798.60 131.38 L800.05 129.76 L801.51 128.13 L802.97 126.51 L804.44 124.88 L805.92 123.25 L807.40 121.63 L808.90 120.00 L810.40 118.38 L811.90 116.75 L813.42 115.12 L814.94 113.50 L816.47 111.87 L818.00 110.25 L819.54 108.62 L821.09 106.99 L822.64 105.37 L824.20 103.74 L825.76 102.12 L827.33 100.49 L828.91 98.86 L830.49 97.24 L832.08 95.61 L833.67 93.99 L835.27 92.36 L836.87 90.73 L838.48 89.11 L840.09 87.48 L841.70 85.86 L843.33 84.23 L844.95 82.60 L846.58 80.98 L848.22 79.35 L849.86 77.73 L851.50 76.10 L853.15 74.47 L854.80 72.85 L856.45 71.22 L858.11 69.60 L859.77 67.97 L861.43 66.34 L863.10 64.72 L864.77 63.09 L866.44 61.47 L868.12 59.84 L869.80 58.21 L871.48 56.59 L873.16 54.96 L874.84 53.34 L876.53 51.71 L878.22 50.08 L879.91 48.46 L881.60 46.83 L883.30 45.21 L884.99 43.58 L886.69 41.95 L888.39 40.33 L890.09 38.70 L891.79 37.08 L893.49 35.45 L895.19 33.82 L896.89 32.20 L898.59 30.57 L900.30 28.95 L902.00 27.32 M902.00 612.68 L899.87 611.05 L897.74 609.43 L895.62 607.80 L893.49 606.18 L891.36 604.55 L889.24 602.92 L887.11 601.30 L884.99 599.67 L882.86 598.05 L880.74 596.42 L878.62 594.79 L876.51 593.17 L874.39 591.54 L872.28 589.92 L870.16 588.29 L868.06 586.66 L865.95 585.04 L863.85 583.41 L861.74 581.79 L859.65 580.16 L857.55 578.53 L855.46 576.91 L853.37 575.28 L851.29 573.66 L849.21 572.03 L847.13 570.40 L845.06 568.78 L843.00 567.15 L840.93 565.53 L838.87 563.90 L836.82 562.27 L834.77 560.65 L832.73 559.02 L830.69 557.40 L828.66 555.77 L826.63 554.14 L824.61 552.52 L822.59 550.89 L820.58 549.27 L818.58 547.64 L816.58 546.01 L814.59 544.39 L812.61 542.76 L810.63 541.14 L808.66 539.51 L806.70 537.88 L804.75 536.26 L802.80 534.63 L800.86 533.01 L798.92 531.38 L797.00 529.75 L795.08 528.13 L793.17 526.50 L791.27 524.88 L789.38 523.25 L787.50 521.62 L785.62 520.00 L783.75 518.37 L781.90 516.75 L780.05 515.12 L778.21 513.49 L776.38 511.87 L774.56 510.24 L772.75 508.62 L770.95 506.99 L769.16 505.36 L767.38 503.74 L765.61 502.11 L763.85 500.49 L762.10 498.86 L760.37 497.23 L758.64 495.61 L756.92 493.98 L755.22 492.36 L753.52 490.73 L751.84 489.10 L750.17 487.48 L748.51 485.85 L746.86 484.23 L745.22 482.60 L743.60 480.97 L741.99 479.35 L740.39 477.72 L738.80 476.10 L737.22 474.47 L735.66 472.84 L734.11 471.22 L732.57 469.59 L731.05 467.97 L729.54 466.34 L728.04 464.71 L726.55 463.09 L725.08 461.46 L723.62 459.84 L722.18 458.21 L720.75 456.58 L719.33 454.96 L717.93 453.33 L716.54 451.71 L715.16 450.08 L713.80 448.45 L712.45 446.83 L711.12 445.20 L709.80 443.58 L708.50 441.95 L707.21 440.32 L705.94 438.70 L704.68 437.07 L703.44 435.45 L702.21 433.82 L701.00 432.19 L699.80 430.57 L698.62 428.94 L697.45 427.32 L696.30 425.69 L695.16 424.06 L694.04 422.44 L692.94 420.81 L691.85 419.19 L690.78 417.56 L689.72 415.93 L688.68 414.31 L687.66 412.68 L686.65 411.06 L685.66 409.43 L684.68 407.80 L683.73 406.18 L682.78 404.55 L681.86 402.93 L680.95 401.30 L680.06 399.67 L679.19 398.05 L678.33 396.42 L677.49 394.80 L676.67 393.17 L675.86 391.54 L675.07 389.92 L674.30 388.29 L673.55 386.67 L672.81 385.04 L672.09 383.41 L671.39 381.79 L670.70 380.16 L670.04 378.54 L669.39 376.91 L668.76 375.28 L668.14 373.66 L667.55 372.03 L666.97 370.41 L666.41 368.78 L665.87 367.15 L665.34 365.53 L664.84 363.90 L664.35 362.28 L663.88 360.65 L663.43 359.02 L663.00 357.40 L662.58 355.77 L662.18 354.15 L661.81 352.52 L661.44 350.89 L661.10 349.27 L660.78 347.64 L660.47 346.02 L660.19 344.39 L659.92 342.76 L659.67 341.14 L659.44 339.51 L659.22 337.89 L659.03 336.26 L658.85 334.63 L658.69 333.01 L658.55 331.38 L658.43 329.76 L658.33 328.13 L658.25 326.50 L658.18 324.88 L658.14 323.25 L658.11 321.63 L658.10 320.00 L658.11 318.37 L658.14 316.75 L658.18 315.12 L658.25 313.50 L658.33 311.87 L658.43 310.24 L658.55 308.62 L658.69 306.99 L658.85 305.37 L659.03 303.74 L659.22 302.11 L659.44 300.49 L659.67 298.86 L659.92 297.24 L660.19 295.61 L660.47 293.98 L660.78 292.36 L661.10 290.73 L661.44 289.11 L661.81 287.48 L662.18 285.85 L662.58 284.23 L663.00 282.60 L663.43 280.98 L663.88 279.35 L664.35 277.72 L664.84 276.10 L665.34 274.47 L665.87 272.85 L666.41 271.22 L666.97 269.59 L667.55 267.97 L668.14 266.34 L668.76 264.72 L669.39 263.09 L670.04 261.46 L670.70 259.84 L671.39 258.21 L672.09 256.59 L672.81 254.96 L673.55 253.33 L674.30 251.71 L675.07 250.08 L675.86 248.46 L676.67 246.83 L677.49 245.20 L678.33 243.58 L679.19 241.95 L680.06 240.33 L680.95 238.70 L681.86 237.07 L682.78 235.45 L683.73 233.82 L684.68 232.20 L685.66 230.57 L686.65 228.94 L687.66 227.32 L688.68 225.69 L689.72 224.07 L690.78 222.44 L691.85 220.81 L692.94 219.19 L694.04 217.56 L695.16 215.94 L696.30 214.31 L697.45 212.68 L698.62 211.06 L699.80 209.43 L701.00 207.81 L702.21 206.18 L703.44 204.55 L704.68 202.93 L705.94 201.30 L707.21 199.68 L708.50 198.05 L709.80 196.42 L711.12 194.80 L712.45 193.17 L713.80 191.55 L715.16 189.92 L716.54 188.29 L717.93 186.67 L719.33 185.04 L720.75 183.42 L722.18 181.79 L723.62 180.16 L725.08 178.54 L726.55 176.91 L728.04 175.29 L729.54 173.66 L731.05 172.03 L732.57 170.41 L734.11 168.78 L735.66 167.16 L737.22 165.53 L738.80 163.90 L740.39 162.28 L741.99 160.65 L743.60 159.03 L745.22 157.40 L746.86 155.77 L748.51 154.15 L750.17 152.52 L751.84 150.90 L753.52 149.27 L755.22 147.64 L756.92 146.02 L758.64 144.39 L760.37 142.77 L762.10 141.14 L763.85 139.51 L765.61 137.89 L767.38 136.26 L769.16 134.64 L770.95 133.01 L772.75 131.38 L774.56 129.76 L776.38 128.13 L778.21 126.51 L780.05 124.88 L781.90 123.25 L783.75 121.63 L785.62 120.00 L787.50 118.38 L789.38 116.75 L791.27 115.12 L793.17 113.50 L795.08 111.87 L797.00 110.25 L798.92 108.62 L800.86 106.99 L802.80 105.37 L804.75 103.74 L806.70 102.12 L808.66 100.49 L810.63 98.86 L812.61 97.24 L814.59 95.61 L816.58 93.99 L818.58 92.36 L820.58 90.73 L822.59 89.11 L824.61 87.48 L826.63 85.86 L828.66 84.23 L830.69 82.60 L832.73 80.98 L834.77 79.35 L836.82 77.73 L838.87 76.10 L840.93 74.47 L843.00 72.85 L845.06 71.22 L847.13 69.60 L849.21 67.97 L851.29 66.34 L853.37 64.72 L855.46 63.09 L857.55 61.47 L859.65 59.84 L861.74 58.21 L863.85 56.59 L865.95 54.96 L868.06 53.34 L870.16 51.71 L872.28 50.08 L874.39 48.46 L876.51 46.83 L878.62 45.21 L880.74 43.58 L882.86 41.95 L884.99 40.33 L887.11 38.70 L889.24 37.08 L891.36 35.45 L893.49 33.82 L895.62 32.20 L897.74 30.57 L899.87 28.95 L902.00 27.32 M902.00 612.68 L899.45 611.05 L896.89 609.43 L894.34 607.80 L891.79 606.18 L889.23 604.55 L886.68 602.92 L884.13 601.30 L881.58 599.67 L879.04 598.05 L876.49 596.42 L873.95 594.79 L871.41 593.17 L868.87 591.54 L866.33 589.92 L863.80 588.29 L861.27 586.66 L858.74 585.04 L856.21 583.41 L853.69 581.79 L851.18 580.16 L848.66 578.53 L846.15 576.91 L843.65 575.28 L841.15 573.66 L838.65 572.03 L836.16 570.40 L833.68 568.78 L831.19 567.15 L828.72 565.53 L826.25 563.90 L823.78 562.27 L821.33 560.65 L818.87 559.02 L816.43 557.40 L813.99 555.77 L811.56 554.14 L809.13 552.52 L806.71 550.89 L804.30 549.27 L801.90 547.64 L799.50 546.01 L797.11 544.39 L794.73 542.76 L792.36 541.14 L790.00 539.51 L787.64 537.88 L785.29 536.26 L782.96 534.63 L780.63 533.01 L778.31 531.38 L776.00 529.75 L773.70 528.13 L771.41 526.50 L769.13 524.88 L766.86 523.25 L764.60 521.62 L762.35 520.00 L760.11 518.37 L757.88 516.75 L755.66 515.12 L753.45 513.49 L751.26 511.87 L749.08 510.24 L746.90 508.62 L744.74 506.99 L742.60 505.36 L740.46 503.74 L738.34 502.11 L736.22 500.49 L734.13 498.86 L732.04 497.23 L729.97 495.61 L727.91 493.98 L725.86 492.36 L723.83 490.73 L721.81 489.10 L719.80 487.48 L717.81 485.85 L715.83 484.23 L713.87 482.60 L711.92 480.97 L709.98 479.35 L708.06 477.72 L706.16 476.10 L704.27 474.47 L702.39 472.84 L700.53 471.22 L698.69 469.59 L696.86 467.97 L695.04 466.34 L693.25 464.71 L691.46 463.09 L689.70 461.46 L687.95 459.84 L686.21 458.21 L684.50 456.58 L682.80 454.96 L681.11 453.33 L679.44 451.71 L677.79 450.08 L676.16 448.45 L674.54 446.83 L672.95 445.20 L671.37 443.58 L669.80 441.95 L668.26 440.32 L666.73 438.70 L665.22 437.07 L663.72 435.45 L662.25 433.82 L660.79 432.19 L659.36 430.57 L657.94 428.94 L656.54 427.32 L655.16 425.69 L653.79 424.06 L652.45 422.44 L651.12 420.81 L649.82 419.19 L648.53 417.56 L647.26 415.93 L646.02 414.31 L644.79 412.68 L643.58 411.06 L642.39 409.43 L641.22 407.80 L640.07 406.18 L638.94 404.55 L637.83 402.93 L636.74 401.30 L635.67 399.67 L634.62 398.05 L633.59 396.42 L632.59 394.80 L631.60 393.17 L630.63 391.54 L629.69 389.92 L628.76 388.29 L627.85 386.67 L626.97 385.04 L626.11 383.41 L625.27 381.79 L624.44 380.16 L623.64 378.54 L622.87 376.91 L622.11 375.28 L621.37 373.66 L620.66 372.03 L619.96 370.41 L619.29 368.78 L618.64 367.15 L618.01 365.53 L617.41 363.90 L616.82 362.28 L616.26 360.65 L615.72 359.02 L615.20 357.40 L614.70 355.77 L614.22 354.15 L613.77 352.52 L613.33 350.89 L612.92 349.27 L612.53 347.64 L612.17 346.02 L611.82 344.39 L611.50 342.76 L611.20 341.14 L610.92 339.51 L610.67 337.89 L610.43 336.26 L610.22 334.63 L610.03 333.01 L609.87 331.38 L609.72 329.76 L609.60 328.13 L609.50 326.50 L609.42 324.88 L609.36 323.25 L609.33 321.63 L609.32 320.00 L609.33 318.37 L609.36 316.75 L609.42 315.12 L609.50 313.50 L609.60 311.87 L609.72 310.24 L609.87 308.62 L610.03 306.99 L610.22 305.37 L610.43 303.74 L610.67 302.11 L610.92 300.49 L611.20 298.86 L611.50 297.24 L611.82 295.61 L612.17 293.98 L612.53 292.36 L612.92 290.73 L613.33 289.11 L613.77 287.48 L614.22 285.85 L614.70 284.23 L615.20 282.60 L615.72 280.98 L616.26 279.35 L616.82 277.72 L617.41 276.10 L618.01 274.47 L618.64 272.85 L619.29 271.22 L619.96 269.59 L620.66 267.97 L621.37 266.34 L622.11 264.72 L622.87 263.09 L623.64 261.46 L624.44 259.84 L625.27 258.21 L626.11 256.59 L626.97 254.96 L627.85 253.33 L628.76 251.71 L629.69 250.08 L630.63 248.46 L631.60 246.83 L632.59 245.20 L633.59 243.58 L634.62 241.95 L635.67 240.33 L636.74 238.70 L637.83 237.07 L638.94 235.45 L640.07 233.82 L641.22 232.20 L642.39 230.57 L643.58 228.94 L644.79 227.32 L646.02 225.69 L647.26 224.07 L648.53 222.44 L649.82 220.81 L651.12 219.19 L652.45 217.56 L653.79 215.94 L655.16 214.31 L656.54 212.68 L657.94 211.06 L659.36 209.43 L660.79 207.81 L662.25 206.18 L663.72 204.55 L665.22 202.93 L666.73 201.30 L668.26 199.68 L669.80 198.05 L671.37 196.42 L672.95 194.80 L674.54 193.17 L676.16 191.55 L677.79 189.92 L679.44 188.29 L681.11 186.67 L682.80 185.04 L684.50 183.42 L686.21 181.79 L687.95 180.16 L689.70 178.54 L691.46 176.91 L693.25 175.29 L695.04 173.66 L696.86 172.03 L698.69 170.41 L700.53 168.78 L702.39 167.16 L704.27 165.53 L706.16 163.90 L708.06 162.28 L709.98 160.65 L711.92 159.03 L713.87 157.40 L715.83 155.77 L717.81 154.15 L719.80 152.52 L721.81 150.90 L723.83 149.27 L725.86 147.64 L727.91 146.02 L729.97 144.39 L732.04 142.77 L734.13 141.14 L736.22 139.51 L738.34 137.89 L740.46 136.26 L742.60 134.64 L744.74 133.01 L746.90 131.38 L749.08 129.76 L751.26 128.13 L753.45 126.51 L755.66 124.88 L757.88 123.25 L760.11 121.63 L762.35 120.00 L764.60 118.38 L766.86 116.75 L769.13 115.12 L771.41 113.50 L773.70 111.87 L776.00 110.25 L778.31 108.62 L780.63 106.99 L782.96 105.37 L785.29 103.74 L787.64 102.12 L790.00 100.49 L792.36 98.86 L794.73 97.24 L797.11 95.61 L799.50 93.99 L801.90 92.36 L804.30 90.73 L806.71 89.11 L809.13 87.48 L811.56 85.86 L813.99 84.23 L816.43 82.60 L818.87 80.98 L821.33 79.35 L823.78 77.73 L826.25 76.10 L828.72 74.47 L831.19 72.85 L833.68 71.22 L836.16 69.60 L838.65 67.97 L841.15 66.34 L843.65 64.72 L846.15 63.09 L848.66 61.47 L851.18 59.84 L853.69 58.21 L856.21 56.59 L858.74 54.96 L861.27 53.34 L863.80 51.71 L866.33 50.08 L868.87 48.46 L871.41 46.83 L873.95 45.21 L876.49 43.58 L879.04 41.95 L881.58 40.33 L884.13 38.70 L886.68 37.08 L889.23 35.45 L891.79 33.82 L894.34 32.20 L896.89 30.57 L899.45 28.95 L902.00 27.32 M902.00 612.68 L899.02 611.05 L896.04 609.43 L893.06 607.80 L890.08 606.18 L887.11 604.55 L884.13 602.92 L881.15 601.30 L878.18 599.67 L875.21 598.05 L872.24 596.42 L869.27 594.79 L866.31 593.17 L863.35 591.54 L860.39 589.92 L857.43 588.29 L854.48 586.66 L851.53 585.04 L848.58 583.41 L845.64 581.79 L842.71 580.16 L839.77 578.53 L836.85 576.91 L833.92 575.28 L831.01 573.66 L828.09 572.03 L825.19 570.40 L822.29 568.78 L819.39 567.15 L816.51 565.53 L813.62 563.90 L810.75 562.27 L807.88 560.65 L805.02 559.02 L802.17 557.40 L799.32 555.77 L796.48 554.14 L793.65 552.52 L790.83 550.89 L788.02 549.27 L785.21 547.64 L782.42 546.01 L779.63 544.39 L776.85 542.76 L774.09 541.14 L771.33 539.51 L768.58 537.88 L765.84 536.26 L763.12 534.63 L760.40 533.01 L757.69 531.38 L755.00 529.75 L752.31 528.13 L749.64 526.50 L746.98 524.88 L744.33 523.25 L741.69 521.62 L739.07 520.00 L736.46 518.37 L733.86 516.75 L731.27 515.12 L728.70 513.49 L726.14 511.87 L723.59 510.24 L721.05 508.62 L718.53 506.99 L716.03 505.36 L713.54 503.74 L711.06 502.11 L708.59 500.49 L706.15 498.86 L703.71 497.23 L701.29 495.61 L698.89 493.98 L696.50 492.36 L694.13 490.73 L691.78 489.10 L689.44 487.48 L687.11 485.85 L684.80 484.23 L682.51 482.60 L680.24 480.97 L677.98 479.35 L675.74 477.72 L673.52 476.10 L671.31 474.47 L669.12 472.84 L666.95 471.22 L664.80 469.59 L662.67 467.97 L660.55 466.34 L658.45 464.71 L656.37 463.09 L654.31 461.46 L652.27 459.84 L650.25 458.21 L648.25 456.58 L646.26 454.96 L644.30 453.33 L642.35 451.71 L640.43 450.08 L638.52 448.45 L636.64 446.83 L634.77 445.20 L632.93 443.58 L631.10 441.95 L629.30 440.32 L627.52 438.70 L625.75 437.07 L624.01 435.45 L622.29 433.82 L620.59 432.19 L618.92 430.57 L617.26 428.94 L615.63 427.32 L614.02 425.69 L612.43 424.06 L610.86 422.44 L609.31 420.81 L607.79 419.19 L606.29 417.56 L604.81 415.93 L603.35 414.31 L601.92 412.68 L600.51 411.06 L599.12 409.43 L597.76 407.80 L596.42 406.18 L595.10 404.55 L593.80 402.93 L592.53 401.30 L591.28 399.67 L590.06 398.05 L588.86 396.42 L587.68 394.80 L586.53 393.17 L585.40 391.54 L584.30 389.92 L583.22 388.29 L582.16 386.67 L581.13 385.04 L580.13 383.41 L579.14 381.79 L578.19 380.16 L577.25 378.54 L576.34 376.91 L575.46 375.28 L574.60 373.66 L573.77 372.03 L572.96 370.41 L572.17 368.78 L571.42 367.15 L570.68 365.53 L569.97 363.90 L569.29 362.28 L568.63 360.65 L568.00 359.02 L567.39 357.40 L566.81 355.77 L566.26 354.15 L565.73 352.52 L565.22 350.89 L564.74 349.27 L564.29 347.64 L563.86 346.02 L563.46 344.39 L563.09 342.76 L562.73 341.14 L562.41 339.51 L562.11 337.89 L561.84 336.26 L561.59 334.63 L561.37 333.01 L561.18 331.38 L561.01 329.76 L560.86 328.13 L560.75 326.50 L560.66 324.88 L560.59 323.25 L560.55 321.63 L560.54 320.00 L560.55 318.37 L560.59 316.75 L560.66 315.12 L560.75 313.50 L560.86 311.87 L561.01 310.24 L561.18 308.62 L561.37 306.99 L561.59 305.37 L561.84 303.74 L562.11 302.11 L562.41 300.49 L562.73 298.86 L563.09 297.24 L563.46 295.61 L563.86 293.98 L564.29 292.36 L564.74 290.73 L565.22 289.11 L565.73 287.48 L566.26 285.85 L566.81 284.23 L567.39 282.60 L568.00 280.98 L568.63 279.35 L569.29 277.72 L569.97 276.10 L570.68 274.47 L571.42 272.85 L572.17 271.22 L572.96 269.59 L573.77 267.97 L574.60 266.34 L575.46 264.72 L576.34 263.09 L577.25 261.46 L578.19 259.84 L579.14 258.21 L580.13 256.59 L581.13 254.96 L582.16 253.33 L583.22 251.71 L584.30 250.08 L585.40 248.46 L586.53 246.83 L587.68 245.20 L588.86 243.58 L590.06 241.95 L591.28 240.33 L592.53 238.70 L593.80 237.07 L595.10 235.45 L596.42 233.82 L597.76 232.20 L599.12 230.57 L600.51 228.94 L601.92 227.32 L603.35 225.69 L604.81 224.07 L606.29 222.44 L607.79 220.81 L609.31 219.19 L610.86 217.56 L612.43 215.94 L614.02 214.31 L615.63 212.68 L617.26 211.06 L618.92 209.43 L620.59 207.81 L622.29 206.18 L624.01 204.55 L625.75 202.93 L627.52 201.30 L629.30 199.68 L631.10 198.05 L632.93 196.42 L634.77 194.80 L636.64 193.17 L638.52 191.55 L640.43 189.92 L642.35 188.29 L644.30 186.67 L646.26 185.04 L648.25 183.42 L650.25 181.79 L652.27 180.16 L654.31 178.54 L656.37 176.91 L658.45 175.29 L660.55 173.66 L662.67 172.03 L664.80 170.41 L666.95 168.78 L669.12 167.16 L671.31 165.53 L673.52 163.90 L675.74 162.28 L677.98 160.65 L680.24 159.03 L682.51 157.40 L684.80 155.77 L687.11 154.15 L689.44 152.52 L691.78 150.90 L694.13 149.27 L696.50 147.64 L698.89 146.02 L701.29 144.39 L703.71 142.77 L706.15 141.14 L708.59 139.51 L711.06 137.89 L713.54 136.26 L716.03 134.64 L718.53 133.01 L721.05 131.38 L723.59 129.76 L726.14 128.13 L728.70 126.51 L731.27 124.88 L733.86 123.25 L736.46 121.63 L739.07 120.00 L741.69 118.38 L744.33 116.75 L746.98 115.12 L749.64 113.50 L752.31 111.87 L755.00 110.25 L757.69 108.62 L760.40 106.99 L763.12 105.37 L765.84 103.74 L768.58 102.12 L771.33 100.49 L774.09 98.86 L776.85 97.24 L779.63 95.61 L782.42 93.99 L785.21 92.36 L788.02 90.73 L790.83 89.11 L793.65 87.48 L796.48 85.86 L799.32 84.23 L802.17 82.60 L805.02 80.98 L807.88 79.35 L810.75 77.73 L813.62 76.10 L816.51 74.47 L819.39 72.85 L822.29 71.22 L825.19 69.60 L828.09 67.97 L831.01 66.34 L833.92 64.72 L836.85 63.09 L839.77 61.47 L842.71 59.84 L845.64 58.21 L848.58 56.59 L851.53 54.96 L854.48 53.34 L857.43 51.71 L860.39 50.08 L863.35 48.46 L866.31 46.83 L869.27 45.21 L872.24 43.58 L875.21 41.95 L878.18 40.33 L881.15 38.70 L884.13 37.08 L887.11 35.45 L890.08 33.82 L893.06 32.20 L896.04 30.57 L899.02 28.95 L902.00 27.32 M902.00 612.68 L898.59 611.05 L895.19 609.43 L891.78 607.80 L888.38 606.18 L884.98 604.55 L881.58 602.92 L878.18 601.30 L874.78 599.67 L871.38 598.05 L867.99 596.42 L864.60 594.79 L861.21 593.17 L857.82 591.54 L854.44 589.92 L851.06 588.29 L847.69 586.66 L844.32 585.04 L840.95 583.41 L837.59 581.79 L834.24 580.16 L830.88 578.53 L827.54 576.91 L824.20 575.28 L820.86 573.66 L817.54 572.03 L814.22 570.40 L810.90 568.78 L807.59 567.15 L804.29 565.53 L801.00 563.90 L797.71 562.27 L794.44 560.65 L791.17 559.02 L787.90 557.40 L784.65 555.77 L781.41 554.14 L778.18 552.52 L774.95 550.89 L771.74 549.27 L768.53 547.64 L765.34 546.01 L762.15 544.39 L758.98 542.76 L755.81 541.14 L752.66 539.51 L749.52 537.88 L746.39 536.26 L743.28 534.63 L740.17 533.01 L737.08 531.38 L734.00 529.75 L730.93 528.13 L727.88 526.50 L724.83 524.88 L721.81 523.25 L718.79 521.62 L715.79 520.00 L712.81 518.37 L709.84 516.75 L706.88 515.12 L703.94 513.49 L701.01 511.87 L698.10 510.24 L695.20 508.62 L692.32 506.99 L689.46 505.36 L686.61 503.74 L683.78 502.11 L680.97 500.49 L678.17 498.86 L675.39 497.23 L672.62 495.61 L669.88 493.98 L667.15 492.36 L664.44 490.73 L661.74 489.10 L659.07 487.48 L656.41 485.85 L653.78 484.23 L651.16 482.60 L648.56 480.97 L645.98 479.35 L643.42 477.72 L640.88 476.10 L638.36 474.47 L635.86 472.84 L633.38 471.22 L630.92 469.59 L628.48 467.97 L626.06 466.34 L623.66 464.71 L621.28 463.09 L618.93 461.46 L616.60 459.84 L614.28 458.21 L612.00 456.58 L609.73 454.96 L607.48 453.33 L605.26 451.71 L603.06 450.08 L600.88 448.45 L598.73 446.83 L596.59 445.20 L594.49 443.58 L592.40 441.95 L590.34 440.32 L588.30 438.70 L586.29 437.07 L584.30 435.45 L582.33 433.82 L580.39 432.19 L578.48 430.57 L576.58 428.94 L574.72 427.32 L572.87 425.69 L571.06 424.06 L569.27 422.44 L567.50 420.81 L565.76 419.19 L564.04 417.56 L562.35 415.93 L560.69 414.31 L559.05 412.68 L557.44 411.06 L555.85 409.43 L554.29 407.80 L552.76 406.18 L551.25 404.55 L549.78 402.93 L548.32 401.30 L546.90 399.67 L545.50 398.05 L544.13 396.42 L542.78 394.80 L541.47 393.17 L540.18 391.54 L538.91 389.92 L537.68 388.29 L536.47 386.67 L535.29 385.04 L534.14 383.41 L533.02 381.79 L531.93 380.16 L530.86 378.54 L529.82 376.91 L528.81 375.28 L527.83 373.66 L526.88 372.03 L525.95 370.41 L525.06 368.78 L524.19 367.15 L523.35 365.53 L522.54 363.90 L521.76 362.28 L521.01 360.65 L520.29 359.02 L519.59 357.40 L518.93 355.77 L518.29 354.15 L517.69 352.52 L517.11 350.89 L516.56 349.27 L516.05 347.64 L515.56 346.02 L515.10 344.39 L514.67 342.76 L514.27 341.14 L513.90 339.51 L513.56 337.89 L513.24 336.26 L512.96 334.63 L512.71 333.01 L512.49 331.38 L512.29 329.76 L512.13 328.13 L512.00 326.50 L511.89 324.88 L511.82 323.25 L511.77 321.63 L511.76 320.00 L511.77 318.37 L511.82 316.75 L511.89 315.12 L512.00 313.50 L512.13 311.87 L512.29 310.24 L512.49 308.62 L512.71 306.99 L512.96 305.37 L513.24 303.74 L513.56 302.11 L513.90 300.49 L514.27 298.86 L514.67 297.24 L515.10 295.61 L515.56 293.98 L516.05 292.36 L516.56 290.73 L517.11 289.11 L517.69 287.48 L518.29 285.85 L518.93 284.23 L519.59 282.60 L520.29 280.98 L521.01 279.35 L521.76 277.72 L522.54 276.10 L523.35 274.47 L524.19 272.85 L525.06 271.22 L525.95 269.59 L526.88 267.97 L527.83 266.34 L528.81 264.72 L529.82 263.09 L530.86 261.46 L531.93 259.84 L533.02 258.21 L534.14 256.59 L535.29 254.96 L536.47 253.33 L537.68 251.71 L538.91 250.08 L540.18 248.46 L541.47 246.83 L542.78 245.20 L544.13 243.58 L545.50 241.95 L546.90 240.33 L548.32 238.70 L549.78 237.07 L551.25 235.45 L552.76 233.82 L554.29 232.20 L555.85 230.57 L557.44 228.94 L559.05 227.32 L560.69 225.69 L562.35 224.07 L564.04 222.44 L565.76 220.81 L567.50 219.19 L569.27 217.56 L571.06 215.94 L572.87 214.31 L574.72 212.68 L576.58 211.06 L578.48 209.43 L580.39 207.81 L582.33 206.18 L584.30 204.55 L586.29 202.93 L588.30 201.30 L590.34 199.68 L592.40 198.05 L594.49 196.42 L596.59 194.80 L598.73 193.17 L600.88 191.55 L603.06 189.92 L605.26 188.29 L607.48 186.67 L609.73 185.04 L612.00 183.42 L614.28 181.79 L616.60 180.16 L618.93 178.54 L621.28 176.91 L623.66 175.29 L626.06 173.66 L628.48 172.03 L630.92 170.41 L633.38 168.78 L635.86 167.16 L638.36 165.53 L640.88 163.90 L643.42 162.28 L645.98 160.65 L648.56 159.03 L651.16 157.40 L653.78 155.77 L656.41 154.15 L659.07 152.52 L661.74 150.90 L664.44 149.27 L667.15 147.64 L669.88 146.02 L672.62 144.39 L675.39 142.77 L678.17 141.14 L680.97 139.51 L683.78 137.89 L686.61 136.26 L689.46 134.64 L692.32 133.01 L695.20 131.38 L698.10 129.76 L701.01 128.13 L703.94 126.51 L706.88 124.88 L709.84 123.25 L712.81 121.63 L715.79 120.00 L718.79 118.38 L721.81 116.75 L724.83 115.12 L727.88 113.50 L730.93 111.87 L734.00 110.25 L737.08 108.62 L740.17 106.99 L743.28 105.37 L746.39 103.74 L749.52 102.12 L752.66 100.49 L755.81 98.86 L758.98 97.24 L762.15 95.61 L765.34 93.99 L768.53 92.36 L771.74 90.73 L774.95 89.11 L778.18 87.48 L781.41 85.86 L784.65 84.23 L787.90 82.60 L791.17 80.98 L794.44 79.35 L797.71 77.73 L801.00 76.10 L804.29 74.47 L807.59 72.85 L810.90 71.22 L814.22 69.60 L817.54 67.97 L820.86 66.34 L824.20 64.72 L827.54 63.09 L830.88 61.47 L834.24 59.84 L837.59 58.21 L840.95 56.59 L844.32 54.96 L847.69 53.34 L851.06 51.71 L854.44 50.08 L857.82 48.46 L861.21 46.83 L864.60 45.21 L867.99 43.58 L871.38 41.95 L874.78 40.33 L878.18 38.70 L881.58 37.08 L884.98 35.45 L888.38 33.82 L891.78 32.20 L895.19 30.57 L898.59 28.95 L902.00 27.32 M902.00 612.68 L898.17 611.05 L894.34 609.43 L890.51 607.80 L886.68 606.18 L882.85 604.55 L879.02 602.92 L875.20 601.30 L871.38 599.67 L867.55 598.05 L863.74 596.42 L859.92 594.79 L856.11 593.17 L852.30 591.54 L848.50 589.92 L844.70 588.29 L840.90 586.66 L837.11 585.04 L833.32 583.41 L829.54 581.79 L825.76 580.16 L821.99 578.53 L818.23 576.91 L814.47 575.28 L810.72 573.66 L806.98 572.03 L803.24 570.40 L799.51 568.78 L795.79 567.15 L792.08 565.53 L788.37 563.90 L784.68 562.27 L780.99 560.65 L777.31 559.02 L773.64 557.40 L769.98 555.77 L766.34 554.14 L762.70 552.52 L759.07 550.89 L755.45 549.27 L751.85 547.64 L748.25 546.01 L744.67 544.39 L741.10 542.76 L737.54 541.14 L733.99 539.51 L730.46 537.88 L726.94 536.26 L723.43 534.63 L719.94 533.01 L716.46 531.38 L713.00 529.75 L709.55 528.13 L706.11 526.50 L702.69 524.88 L699.28 523.25 L695.89 521.62 L692.52 520.00 L689.16 518.37 L685.82 516.75 L682.49 515.12 L679.18 513.49 L675.89 511.87 L672.61 510.24 L669.35 508.62 L666.11 506.99 L662.89 505.36 L659.69 503.74 L656.50 502.11 L653.34 500.49 L650.19 498.86 L647.06 497.23 L643.95 495.61 L640.86 493.98 L637.79 492.36 L634.74 490.73 L631.71 489.10 L628.70 487.48 L625.72 485.85 L622.75 484.23 L619.80 482.60 L616.88 480.97 L613.98 479.35 L611.10 477.72 L608.24 476.10 L605.40 474.47 L602.59 472.84 L599.80 471.22 L597.03 469.59 L594.29 467.97 L591.57 466.34 L588.87 464.71 L586.20 463.09 L583.55 461.46 L580.92 459.84 L578.32 458.21 L575.74 456.58 L573.19 454.96 L570.67 453.33 L568.17 451.71 L565.69 450.08 L563.24 448.45 L560.82 446.83 L558.42 445.20 L556.05 443.58 L553.70 441.95 L551.38 440.32 L549.09 438.70 L546.83 437.07 L544.59 435.45 L542.38 433.82 L540.19 432.19 L538.04 430.57 L535.91 428.94 L533.81 427.32 L531.73 425.69 L529.69 424.06 L527.67 422.44 L525.69 420.81 L523.73 419.19 L521.80 417.56 L519.90 415.93 L518.02 414.31 L516.18 412.68 L514.37 411.06 L512.58 409.43 L510.83 407.80 L509.11 406.18 L507.41 404.55 L505.75 402.93 L504.11 401.30 L502.51 399.67 L500.94 398.05 L499.39 396.42 L497.88 394.80 L496.40 393.17 L494.95 391.54 L493.53 389.92 L492.14 388.29 L490.78 386.67 L489.46 385.04 L488.16 383.41 L486.90 381.79 L485.67 380.16 L484.47 378.54 L483.30 376.91 L482.16 375.28 L481.06 373.66 L479.99 372.03 L478.95 370.41 L477.94 368.78 L476.96 367.15 L476.02 365.53 L475.11 363.90 L474.23 362.28 L473.39 360.65 L472.57 359.02 L471.79 357.40 L471.05 355.77 L470.33 354.15 L469.65 352.52 L469.00 350.89 L468.39 349.27 L467.80 347.64 L467.25 346.02 L466.74 344.39 L466.25 342.76 L465.80 341.14 L465.38 339.51 L465.00 337.89 L464.65 336.26 L464.33 334.63 L464.05 333.01 L463.80 331.38 L463.58 329.76 L463.40 328.13 L463.25 326.50 L463.13 324.88 L463.05 323.25 L463.00 321.63 L462.98 320.00 L463.00 318.37 L463.05 316.75 L463.13 315.12 L463.25 313.50 L463.40 311.87 L463.58 310.24 L463.80 308.62 L464.05 306.99 L464.33 305.37 L464.65 303.74 L465.00 302.11 L465.38 300.49 L465.80 298.86 L466.25 297.24 L466.74 295.61 L467.25 293.98 L467.80 292.36 L468.39 290.73 L469.00 289.11 L469.65 287.48 L470.33 285.85 L471.05 284.23 L471.79 282.60 L472.57 280.98 L473.39 279.35 L474.23 277.72 L475.11 276.10 L476.02 274.47 L476.96 272.85 L477.94 271.22 L478.95 269.59 L479.99 267.97 L481.06 266.34 L482.16 264.72 L483.30 263.09 L484.47 261.46 L485.67 259.84 L486.90 258.21 L488.16 256.59 L489.46 254.96 L490.78 253.33 L492.14 251.71 L493.53 250.08 L494.95 248.46 L496.40 246.83 L497.88 245.20 L499.39 243.58 L500.94 241.95 L502.51 240.33 L504.11 238.70 L505.75 237.07 L507.41 235.45 L509.11 233.82 L510.83 232.20 L512.58 230.57 L514.37 228.94 L516.18 227.32 L518.02 225.69 L519.90 224.07 L521.80 222.44 L523.73 220.81 L525.69 219.19 L527.67 217.56 L529.69 215.94 L531.73 214.31 L533.81 212.68 L535.91 211.06 L538.04 209.43 L540.19 207.81 L542.38 206.18 L544.59 204.55 L546.83 202.93 L549.09 201.30 L551.38 199.68 L553.70 198.05 L556.05 196.42 L558.42 194.80 L560.82 193.17 L563.24 191.55 L565.69 189.92 L568.17 188.29 L570.67 186.67 L573.19 185.04 L575.74 183.42 L578.32 181.79 L580.92 180.16 L583.55 178.54 L586.20 176.91 L588.87 175.29 L591.57 173.66 L594.29 172.03 L597.03 170.41 L599.80 168.78 L602.59 167.16 L605.40 165.53 L608.24 163.90 L611.10 162.28 L613.98 160.65 L616.88 159.03 L619.80 157.40 L622.75 155.77 L625.72 154.15 L628.70 152.52 L631.71 150.90 L634.74 149.27 L637.79 147.64 L640.86 146.02 L643.95 144.39 L647.06 142.77 L650.19 141.14 L653.34 139.51 L656.50 137.89 L659.69 136.26 L662.89 134.64 L666.11 133.01 L669.35 131.38 L672.61 129.76 L675.89 128.13 L679.18 126.51 L682.49 124.88 L685.82 123.25 L689.16 121.63 L692.52 120.00 L695.89 118.38 L699.28 116.75 L702.69 115.12 L706.11 113.50 L709.55 111.87 L713.00 110.25 L716.46 108.62 L719.94 106.99 L723.43 105.37 L726.94 103.74 L730.46 102.12 L733.99 100.49 L737.54 98.86 L741.10 97.24 L744.67 95.61 L748.25 93.99 L751.85 92.36 L755.45 90.73 L759.07 89.11 L762.70 87.48 L766.34 85.86 L769.98 84.23 L773.64 82.60 L777.31 80.98 L780.99 79.35 L784.68 77.73 L788.37 76.10 L792.08 74.47 L795.79 72.85 L799.51 71.22 L803.24 69.60 L806.98 67.97 L810.72 66.34 L814.47 64.72 L818.23 63.09 L821.99 61.47 L825.76 59.84 L829.54 58.21 L833.32 56.59 L837.11 54.96 L840.90 53.34 L844.70 51.71 L848.50 50.08 L852.30 48.46 L856.11 46.83 L859.92 45.21 L863.74 43.58 L867.55 41.95 L871.38 40.33 L875.20 38.70 L879.02 37.08 L882.85 35.45 L886.68 33.82 L890.51 32.20 L894.34 30.57 L898.17 28.95 L902.00 27.32 M902.00 612.68 L897.74 611.05 L893.49 609.43 L889.23 607.80 L884.98 606.18 L880.72 604.55 L876.47 602.92 L872.22 601.30 L867.97 599.67 L863.73 598.05 L859.49 596.42 L855.25 594.79 L851.01 593.17 L846.78 591.54 L842.55 589.92 L838.33 588.29 L834.11 586.66 L829.90 585.04 L825.69 583.41 L821.49 581.79 L817.29 580.16 L813.11 578.53 L808.92 576.91 L804.75 575.28 L800.58 573.66 L796.42 572.03 L792.27 570.40 L788.13 568.78 L783.99 567.15 L779.86 565.53 L775.75 563.90 L771.64 562.27 L767.54 560.65 L763.46 559.02 L759.38 557.40 L755.32 555.77 L751.26 554.14 L747.22 552.52 L743.19 550.89 L739.17 549.27 L735.16 547.64 L731.17 546.01 L727.19 544.39 L723.22 542.76 L719.27 541.14 L715.33 539.51 L711.40 537.88 L707.49 536.26 L703.59 534.63 L699.71 533.01 L695.85 531.38 L692.00 529.75 L688.16 528.13 L684.34 526.50 L680.54 524.88 L676.76 523.25 L672.99 521.62 L669.24 520.00 L665.51 518.37 L661.80 516.75 L658.10 515.12 L654.42 513.49 L650.76 511.87 L647.13 510.24 L643.51 508.62 L639.91 506.99 L636.33 505.36 L632.77 503.74 L629.23 502.11 L625.71 500.49 L622.21 498.86 L618.73 497.23 L615.28 495.61 L611.85 493.98 L608.43 492.36 L605.05 490.73 L601.68 489.10 L598.34 487.48 L595.02 485.85 L591.72 484.23 L588.45 482.60 L585.20 480.97 L581.97 479.35 L578.77 477.72 L575.60 476.10 L572.45 474.47 L569.32 472.84 L566.22 471.22 L563.15 469.59 L560.10 467.97 L557.07 466.34 L554.08 464.71 L551.11 463.09 L548.16 461.46 L545.25 459.84 L542.36 458.21 L539.49 456.58 L536.66 454.96 L533.85 453.33 L531.07 451.71 L528.32 450.08 L525.60 448.45 L522.91 446.83 L520.24 445.20 L517.61 443.58 L515.00 441.95 L512.43 440.32 L509.88 438.70 L507.36 437.07 L504.87 435.45 L502.42 433.82 L499.99 432.19 L497.60 430.57 L495.23 428.94 L492.90 427.32 L490.59 425.69 L488.32 424.06 L486.08 422.44 L483.87 420.81 L481.70 419.19 L479.55 417.56 L477.44 415.93 L475.36 414.31 L473.31 412.68 L471.30 411.06 L469.32 409.43 L467.37 407.80 L465.45 406.18 L463.57 404.55 L461.72 402.93 L459.90 401.30 L458.12 399.67 L456.37 398.05 L454.66 396.42 L452.98 394.80 L451.33 393.17 L449.72 391.54 L448.14 389.92 L446.60 388.29 L445.09 386.67 L443.62 385.04 L442.18 383.41 L440.78 381.79 L439.41 380.16 L438.07 378.54 L436.78 376.91 L435.51 375.28 L434.29 373.66 L433.10 372.03 L431.94 370.41 L430.82 368.78 L429.74 367.15 L428.69 365.53 L427.68 363.90 L426.70 362.28 L425.76 360.65 L424.86 359.02 L423.99 357.40 L423.16 355.77 L422.37 354.15 L421.61 352.52 L420.89 350.89 L420.21 349.27 L419.56 347.64 L418.95 346.02 L418.37 344.39 L417.84 342.76 L417.34 341.14 L416.87 339.51 L416.45 337.89 L416.06 336.26 L415.70 334.63 L415.39 333.01 L415.11 331.38 L414.87 329.76 L414.66 328.13 L414.50 326.50 L414.37 324.88 L414.27 323.25 L414.22 321.63 L414.20 320.00 L414.22 318.37 L414.27 316.75 L414.37 315.12 L414.50 313.50 L414.66 311.87 L414.87 310.24 L415.11 308.62 L415.39 306.99 L415.70 305.37 L416.06 303.74 L416.45 302.11 L416.87 300.49 L417.34 298.86 L417.84 297.24 L418.37 295.61 L418.95 293.98 L419.56 292.36 L420.21 290.73 L420.89 289.11 L421.61 287.48 L422.37 285.85 L423.16 284.23 L423.99 282.60 L424.86 280.98 L425.76 279.35 L426.70 277.72 L427.68 276.10 L428.69 274.47 L429.74 272.85 L430.82 271.22 L431.94 269.59 L433.10 267.97 L434.29 266.34 L435.51 264.72 L436.78 263.09 L438.07 261.46 L439.41 259.84 L440.78 258.21 L442.18 256.59 L443.62 254.96 L445.09 253.33 L446.60 251.71 L448.14 250.08 L449.72 248.46 L451.33 246.83 L452.98 245.20 L454.66 243.58 L456.37 241.95 L458.12 240.33 L459.90 238.70 L461.72 237.07 L463.57 235.45 L465.45 233.82 L467.37 232.20 L469.32 230.57 L471.30 228.94 L473.31 227.32 L475.36 225.69 L477.44 224.07 L479.55 222.44 L481.70 220.81 L483.87 219.19 L486.08 217.56 L488.32 215.94 L490.59 214.31 L492.90 212.68 L495.23 211.06 L497.60 209.43 L499.99 207.81 L502.42 206.18 L504.87 204.55 L507.36 202.93 L509.88 201.30 L512.43 199.68 L515.00 198.05 L517.61 196.42 L520.24 194.80 L522.91 193.17 L525.60 191.55 L528.32 189.92 L531.07 188.29 L533.85 186.67 L536.66 185.04 L539.49 183.42 L542.36 181.79 L545.25 180.16 L548.16 178.54 L551.11 176.91 L554.08 175.29 L557.07 173.66 L560.10 172.03 L563.15 170.41 L566.22 168.78 L569.32 167.16 L572.45 165.53 L575.60 163.90 L578.77 162.28 L581.97 160.65 L585.20 159.03 L588.45 157.40 L591.72 155.77 L595.02 154.15 L598.34 152.52 L601.68 150.90 L605.05 149.27 L608.43 147.64 L611.85 146.02 L615.28 144.39 L618.73 142.77 L622.21 141.14 L625.71 139.51 L629.23 137.89 L632.77 136.26 L636.33 134.64 L639.91 133.01 L643.51 131.38 L647.13 129.76 L650.76 128.13 L654.42 126.51 L658.10 124.88 L661.80 123.25 L665.51 121.63 L669.24 120.00 L672.99 118.38 L676.76 116.75 L680.54 115.12 L684.34 113.50 L688.16 111.87 L692.00 110.25 L695.85 108.62 L699.71 106.99 L703.59 105.37 L707.49 103.74 L711.40 102.12 L715.33 100.49 L719.27 98.86 L723.22 97.24 L727.19 95.61 L731.17 93.99 L735.16 92.36 L739.17 90.73 L743.19 89.11 L747.22 87.48 L751.26 85.86 L755.32 84.23 L759.38 82.60 L763.46 80.98 L767.54 79.35 L771.64 77.73 L775.75 76.10 L779.86 74.47 L783.99 72.85 L788.13 71.22 L792.27 69.60 L796.42 67.97 L800.58 66.34 L804.75 64.72 L808.92 63.09 L813.11 61.47 L817.29 59.84 L821.49 58.21 L825.69 56.59 L829.90 54.96 L834.11 53.34 L838.33 51.71 L842.55 50.08 L846.78 48.46 L851.01 46.83 L855.25 45.21 L859.49 43.58 L863.73 41.95 L867.97 40.33 L872.22 38.70 L876.47 37.08 L880.72 35.45 L884.98 33.82 L889.23 32.20 L893.49 30.57 L897.74 28.95 L902.00 27.32 M902.00 612.68 L897.32 611.05 L892.64 609.43 L887.95 607.80 L883.27 606.18 L878.59 604.55 L873.92 602.92 L869.24 601.30 L864.57 599.67 L859.90 598.05 L855.23 596.42 L850.57 594.79 L845.91 593.17 L841.26 591.54 L836.61 589.92 L831.96 588.29 L827.32 586.66 L822.69 585.04 L818.06 583.41 L813.44 581.79 L808.82 580.16 L804.22 578.53 L799.62 576.91 L795.02 575.28 L790.44 573.66 L785.86 572.03 L781.30 570.40 L776.74 568.78 L772.19 567.15 L767.65 565.53 L763.12 563.90 L758.61 562.27 L754.10 560.65 L749.60 559.02 L745.12 557.40 L740.65 555.77 L736.19 554.14 L731.74 552.52 L727.31 550.89 L722.89 549.27 L718.48 547.64 L714.09 546.01 L709.71 544.39 L705.34 542.76 L700.99 541.14 L696.66 539.51 L692.34 537.88 L688.04 536.26 L683.75 534.63 L679.48 533.01 L675.23 531.38 L671.00 529.75 L666.78 528.13 L662.58 526.50 L658.40 524.88 L654.23 523.25 L650.09 521.62 L645.97 520.00 L641.86 518.37 L637.78 516.75 L633.71 515.12 L629.67 513.49 L625.64 511.87 L621.64 510.24 L617.66 508.62 L613.70 506.99 L609.76 505.36 L605.84 503.74 L601.95 502.11 L598.08 500.49 L594.23 498.86 L590.41 497.23 L586.61 495.61 L582.83 493.98 L579.08 492.36 L575.35 490.73 L571.65 489.10 L567.97 487.48 L564.32 485.85 L560.69 484.23 L557.09 482.60 L553.52 480.97 L549.97 479.35 L546.45 477.72 L542.96 476.10 L539.49 474.47 L536.05 472.84 L532.64 471.22 L529.26 469.59 L525.91 467.97 L522.58 466.34 L519.28 464.71 L516.02 463.09 L512.78 461.46 L509.57 459.84 L506.39 458.21 L503.24 456.58 L500.13 454.96 L497.04 453.33 L493.98 451.71 L490.96 450.08 L487.96 448.45 L485.00 446.83 L482.07 445.20 L479.17 443.58 L476.30 441.95 L473.47 440.32 L470.67 438.70 L467.90 437.07 L465.16 435.45 L462.46 433.82 L459.79 432.19 L457.16 430.57 L454.55 428.94 L451.99 427.32 L449.45 425.69 L446.95 424.06 L444.49 422.44 L442.06 420.81 L439.67 419.19 L437.31 417.56 L434.98 415.93 L432.70 414.31 L430.44 412.68 L428.23 411.06 L426.05 409.43 L423.90 407.80 L421.80 406.18 L419.73 404.55 L417.69 402.93 L415.69 401.30 L413.73 399.67 L411.81 398.05 L409.92 396.42 L408.08 394.80 L406.26 393.17 L404.49 391.54 L402.76 389.92 L401.06 388.29 L399.40 386.67 L397.78 385.04 L396.20 383.41 L394.65 381.79 L393.15 380.16 L391.68 378.54 L390.25 376.91 L388.87 375.28 L387.52 373.66 L386.21 372.03 L384.94 370.41 L383.70 368.78 L382.51 367.15 L381.36 365.53 L380.25 363.90 L379.17 362.28 L378.14 360.65 L377.15 359.02 L376.19 357.40 L375.28 355.77 L374.41 354.15 L373.57 352.52 L372.78 350.89 L372.03 349.27 L371.31 347.64 L370.64 346.02 L370.01 344.39 L369.42 342.76 L368.87 341.14 L368.36 339.51 L367.89 337.89 L367.46 336.26 L367.07 334.63 L366.73 333.01 L366.42 331.38 L366.16 329.76 L365.93 328.13 L365.75 326.50 L365.60 324.88 L365.50 323.25 L365.44 321.63 L365.42 320.00 L365.44 318.37 L365.50 316.75 L365.60 315.12 L365.75 313.50 L365.93 311.87 L366.16 310.24 L366.42 308.62 L366.73 306.99 L367.07 305.37 L367.46 303.74 L367.89 302.11 L368.36 300.49 L368.87 298.86 L369.42 297.24 L370.01 295.61 L370.64 293.98 L371.31 292.36 L372.03 290.73 L372.78 289.11 L373.57 287.48 L374.41 285.85 L375.28 284.23 L376.19 282.60 L377.15 280.98 L378.14 279.35 L379.17 277.72 L380.25 276.10 L381.36 274.47 L382.51 272.85 L383.70 271.22 L384.94 269.59 L386.21 267.97 L387.52 266.34 L388.87 264.72 L390.25 263.09 L391.68 261.46 L393.15 259.84 L394.65 258.21 L396.20 256.59 L397.78 254.96 L399.40 253.33 L401.06 251.71 L402.76 250.08 L404.49 248.46 L406.26 246.83 L408.08 245.20 L409.92 243.58 L411.81 241.95 L413.73 240.33 L415.69 238.70 L417.69 237.07 L419.73 235.45 L421.80 233.82 L423.90 232.20 L426.05 230.57 L428.23 228.94 L430.44 227.32 L432.70 225.69 L434.98 224.07 L437.31 222.44 L439.67 220.81 L442.06 219.19 L444.49 217.56 L446.95 215.94 L449.45 214.31 L451.99 212.68 L454.55 211.06 L457.16 209.43 L459.79 207.81 L462.46 206.18 L465.16 204.55 L467.90 202.93 L470.67 201.30 L473.47 199.68 L476.30 198.05 L479.17 196.42 L482.07 194.80 L485.00 193.17 L487.96 191.55 L490.96 189.92 L493.98 188.29 L497.04 186.67 L500.13 185.04 L503.24 183.42 L506.39 181.79 L509.57 180.16 L512.78 178.54 L516.02 176.91 L519.28 175.29 L522.58 173.66 L525.91 172.03 L529.26 170.41 L532.64 168.78 L536.05 167.16 L539.49 165.53 L542.96 163.90 L546.45 162.28 L549.97 160.65 L553.52 159.03 L557.09 157.40 L560.69 155.77 L564.32 154.15 L567.97 152.52 L571.65 150.90 L575.35 149.27 L579.08 147.64 L582.83 146.02 L586.61 144.39 L590.41 142.77 L594.23 141.14 L598.08 139.51 L601.95 137.89 L605.84 136.26 L609.76 134.64 L613.70 133.01 L617.66 131.38 L621.64 129.76 L625.64 128.13 L629.67 126.51 L633.71 124.88 L637.78 123.25 L641.86 121.63 L645.97 120.00 L650.09 118.38 L654.23 116.75 L658.40 115.12 L662.58 113.50 L666.78 111.87 L671.00 110.25 L675.23 108.62 L679.48 106.99 L683.75 105.37 L688.04 103.74 L692.34 102.12 L696.66 100.49 L700.99 98.86 L705.34 97.24 L709.71 95.61 L714.09 93.99 L718.48 92.36 L722.89 90.73 L727.31 89.11 L731.74 87.48 L736.19 85.86 L740.65 84.23 L745.12 82.60 L749.60 80.98 L754.10 79.35 L758.61 77.73 L763.12 76.10 L767.65 74.47 L772.19 72.85 L776.74 71.22 L781.30 69.60 L785.86 67.97 L790.44 66.34 L795.02 64.72 L799.62 63.09 L804.22 61.47 L808.82 59.84 L813.44 58.21 L818.06 56.59 L822.69 54.96 L827.32 53.34 L831.96 51.71 L836.61 50.08 L841.26 48.46 L845.91 46.83 L850.57 45.21 L855.23 43.58 L859.90 41.95 L864.57 40.33 L869.24 38.70 L873.92 37.08 L878.59 35.45 L883.27 33.82 L887.95 32.20 L892.64 30.57 L897.32 28.95 L902.00 27.32 M902.00 612.68 L896.89 611.05 L891.78 609.43 L886.68 607.80 L881.57 606.18 L876.47 604.55 L871.36 602.92 L866.26 601.30 L861.17 599.67 L856.07 598.05 L850.98 596.42 L845.90 594.79 L840.81 593.17 L835.74 591.54 L830.66 589.92 L825.60 588.29 L820.53 586.66 L815.48 585.04 L810.43 583.41 L805.39 581.79 L800.35 580.16 L795.33 578.53 L790.31 576.91 L785.30 575.28 L780.30 573.66 L775.30 572.03 L770.32 570.40 L765.35 568.78 L760.39 567.15 L755.44 565.53 L750.50 563.90 L745.57 562.27 L740.65 560.65 L735.75 559.02 L730.86 557.40 L725.98 555.77 L721.11 554.14 L716.26 552.52 L711.43 550.89 L706.60 549.27 L701.80 547.64 L697.00 546.01 L692.23 544.39 L687.46 542.76 L682.72 541.14 L677.99 539.51 L673.28 537.88 L668.59 536.26 L663.91 534.63 L659.26 533.01 L654.62 531.38 L650.00 529.75 L645.40 528.13 L640.81 526.50 L636.25 524.88 L631.71 523.25 L627.19 521.62 L622.69 520.00 L618.21 518.37 L613.75 516.75 L609.32 515.12 L604.91 513.49 L600.52 511.87 L596.15 510.24 L591.81 508.62 L587.49 506.99 L583.19 505.36 L578.92 503.74 L574.67 502.11 L570.45 500.49 L566.25 498.86 L562.08 497.23 L557.93 495.61 L553.81 493.98 L549.72 492.36 L545.66 490.73 L541.62 489.10 L537.60 487.48 L533.62 485.85 L529.67 484.23 L525.74 482.60 L521.84 480.97 L517.97 479.35 L514.13 477.72 L510.32 476.10 L506.54 474.47 L502.79 472.84 L499.06 471.22 L495.37 469.59 L491.72 467.97 L488.09 466.34 L484.49 464.71 L480.93 463.09 L477.39 461.46 L473.89 459.84 L470.43 458.21 L466.99 456.58 L463.59 454.96 L460.22 453.33 L456.89 451.71 L453.59 450.08 L450.32 448.45 L447.09 446.83 L443.89 445.20 L440.73 443.58 L437.60 441.95 L434.51 440.32 L431.45 438.70 L428.43 437.07 L425.45 435.45 L422.50 433.82 L419.59 432.19 L416.71 430.57 L413.88 428.94 L411.08 427.32 L408.31 425.69 L405.59 424.06 L402.90 422.44 L400.25 420.81 L397.64 419.19 L395.06 417.56 L392.53 415.93 L390.03 414.31 L387.58 412.68 L385.16 411.06 L382.78 409.43 L380.44 407.80 L378.14 406.18 L375.88 404.55 L373.66 402.93 L371.48 401.30 L369.35 399.67 L367.25 398.05 L365.19 396.42 L363.17 394.80 L361.20 393.17 L359.26 391.54 L357.37 389.92 L355.52 388.29 L353.71 386.67 L351.94 385.04 L350.22 383.41 L348.53 381.79 L346.89 380.16 L345.29 378.54 L343.73 376.91 L342.22 375.28 L340.75 373.66 L339.32 372.03 L337.93 370.41 L336.59 368.78 L335.29 367.15 L334.03 365.53 L332.81 363.90 L331.64 362.28 L330.52 360.65 L329.43 359.02 L328.39 357.40 L327.39 355.77 L326.44 354.15 L325.53 352.52 L324.67 350.89 L323.85 349.27 L323.07 347.64 L322.34 346.02 L321.65 344.39 L321.00 342.76 L320.40 341.14 L319.85 339.51 L319.33 337.89 L318.87 336.26 L318.44 334.63 L318.07 333.01 L317.73 331.38 L317.44 329.76 L317.20 328.13 L317.00 326.50 L316.84 324.88 L316.73 323.25 L316.66 321.63 L316.64 320.00 L316.66 318.37 L316.73 316.75 L316.84 315.12 L317.00 313.50 L317.20 311.87 L317.44 310.24 L317.73 308.62 L318.07 306.99 L318.44 305.37 L318.87 303.74 L319.33 302.11 L319.85 300.49 L320.40 298.86 L321.00 297.24 L321.65 295.61 L322.34 293.98 L323.07 292.36 L323.85 290.73 L324.67 289.11 L325.53 287.48 L326.44 285.85 L327.39 284.23 L328.39 282.60 L329.43 280.98 L330.52 279.35 L331.64 277.72 L332.81 276.10 L334.03 274.47 L335.29 272.85 L336.59 271.22 L337.93 269.59 L339.32 267.97 L340.75 266.34 L342.22 264.72 L343.73 263.09 L345.29 261.46 L346.89 259.84 L348.53 258.21 L350.22 256.59 L351.94 254.96 L353.71 253.33 L355.52 251.71 L357.37 250.08 L359.26 248.46 L361.20 246.83 L363.17 245.20 L365.19 243.58 L367.25 241.95 L369.35 240.33 L371.48 238.70 L373.66 237.07 L375.88 235.45 L378.14 233.82 L380.44 232.20 L382.78 230.57 L385.16 228.94 L387.58 227.32 L390.03 225.69 L392.53 224.07 L395.06 222.44 L397.64 220.81 L400.25 219.19 L402.90 217.56 L405.59 215.94 L408.31 214.31 L411.08 212.68 L413.88 211.06 L416.71 209.43 L419.59 207.81 L422.50 206.18 L425.45 204.55 L428.43 202.93 L431.45 201.30 L434.51 199.68 L437.60 198.05 L440.73 196.42 L443.89 194.80 L447.09 193.17 L450.32 191.55 L453.59 189.92 L456.89 188.29 L460.22 186.67 L463.59 185.04 L466.99 183.42 L470.43 181.79 L473.89 180.16 L477.39 178.54 L480.93 176.91 L484.49 175.29 L488.09 173.66 L491.72 172.03 L495.37 170.41 L499.06 168.78 L502.79 167.16 L506.54 165.53 L510.32 163.90 L514.13 162.28 L517.97 160.65 L521.84 159.03 L525.74 157.40 L529.67 155.77 L533.62 154.15 L537.60 152.52 L541.62 150.90 L545.66 149.27 L549.72 147.64 L553.81 146.02 L557.93 144.39 L562.08 142.77 L566.25 141.14 L570.45 139.51 L574.67 137.89 L578.92 136.26 L583.19 134.64 L587.49 133.01 L591.81 131.38 L596.15 129.76 L600.52 128.13 L604.91 126.51 L609.32 124.88 L613.75 123.25 L618.21 121.63 L622.69 120.00 L627.19 118.38 L631.71 116.75 L636.25 115.12 L640.81 113.50 L645.40 111.87 L650.00 110.25 L654.62 108.62 L659.26 106.99 L663.91 105.37 L668.59 103.74 L673.28 102.12 L677.99 100.49 L682.72 98.86 L687.46 97.24 L692.23 95.61 L697.00 93.99 L701.80 92.36 L706.60 90.73 L711.43 89.11 L716.26 87.48 L721.11 85.86 L725.98 84.23 L730.86 82.60 L735.75 80.98 L740.65 79.35 L745.57 77.73 L750.50 76.10 L755.44 74.47 L760.39 72.85 L765.35 71.22 L770.32 69.60 L775.30 67.97 L780.30 66.34 L785.30 64.72 L790.31 63.09 L795.33 61.47 L800.35 59.84 L805.39 58.21 L810.43 56.59 L815.48 54.96 L820.53 53.34 L825.60 51.71 L830.66 50.08 L835.74 48.46 L840.81 46.83 L845.90 45.21 L850.98 43.58 L856.07 41.95 L861.17 40.33 L866.26 38.70 L871.36 37.08 L876.47 35.45 L881.57 33.82 L886.68 32.20 L891.78 30.57 L896.89 28.95 L902.00 27.32 M1053.50 563.90 L750.50 563.90 M1194.68 515.12 L609.32 515.12 M1315.91 466.34 L488.09 466.34 M1408.94 417.56 L395.06 417.56 M1467.41 368.78 L336.59 368.78 M1487.36 320.00 L316.64 320.00 M1467.41 271.22 L336.59 271.22 M1408.94 222.44 L395.06 222.44 M1315.91 173.66 L488.09 173.66 M1194.68 124.88 L609.32 124.88 M1053.50 76.10 L750.50 76.10" fill="none" stroke="#767676" stroke-width="2.08" stroke-dasharray="2.08 3.44"/>
<path d="M1246.19 144.99 L1246.93 144.98 M556.61 144.97 L557.39 144.97 L558.16 144.97 L558.91 144.98 L559.65 144.99 L560.38 145.00 L561.11 145.02 L561.82 145.05 L562.52 145.08 L563.20 145.11 L563.88 145.15 L564.55 145.19 L565.21 145.23 L565.85 145.28 L566.49 145.34 L567.11 145.40 L567.73 145.46 L568.33 145.53 L568.92 145.60 L569.51 145.68 L570.08 145.76 L570.64 145.84 L571.19 145.93 L571.73 146.02 L572.27 146.12 L572.79 146.22 L573.30 146.33 L573.80 146.44 L574.29 146.55 L574.78 146.67 L575.25 146.79 L575.71 146.92 L576.17 147.05 L576.61 147.18 L577.05 147.32 L577.47 147.47 L577.89 147.61 L578.29 147.76 L578.69 147.92 L579.08 148.08 L579.46 148.24 L579.83 148.41 L580.19 148.58 L580.55 148.76 L580.89 148.94 L581.23 149.12 L581.55 149.31 L581.87 149.50 L582.18 149.69 L582.49 149.89 L582.78 150.09 L583.07 150.30 L583.35 150.51 L583.62 150.73 L583.88 150.94 L584.13 151.17 L584.38 151.39 L584.62 151.62 L584.85 151.85 L585.08 152.09 L585.29 152.33 L585.50 152.57 L585.71 152.82 L585.90 153.07 L586.09 153.33 L586.28 153.58 L586.45 153.85 L586.62 154.11 L586.78 154.38 L586.94 154.65 L587.09 154.93 L587.23 155.21 L587.37 155.49 L587.50 155.77 L587.62 156.06 L587.74 156.35 L587.85 156.65 L587.96 156.95 L588.06 157.25 L588.15 157.55 L588.24 157.86 L588.33 158.17 L588.41 158.49 L588.48 158.81 L588.55 159.13 L588.61 159.45 L588.67 159.78 L588.72 160.11 L588.77 160.44 L588.82 160.78 L588.85 161.12 L588.89 161.46 L588.92 161.80 L588.94 162.15 L588.97 162.50 L588.98 162.86 L588.99 163.21 L589.00 163.57 L589.01 163.93 L589.01 164.30 L589.00 164.66 L589.00 165.03 L588.99 165.41 L588.97 165.78 L588.95 166.16 L588.93 166.54 L588.91 166.92 L588.88 167.31 L588.85 167.70 L588.81 168.09 L588.78 168.48 L588.74 168.88 L588.69 169.28 L588.64 169.68 L588.60 170.08 L588.54 170.49 L588.49 170.89 L588.43 171.30 L588.37 171.72 L588.31 172.13 L588.24 172.55 L588.18 172.97 L588.11 173.39 L588.04 173.82 L587.96 174.24 L587.89 174.67 L587.81 175.10 L587.73 175.53 L587.65 175.97 L587.57 176.41 L587.48 176.84 L587.40 177.29 L587.31 177.73 L587.22 178.17 L587.13 178.62 L587.04 179.07 L586.94 179.52 L586.85 179.98 L586.75 180.43 L586.66 180.89 L586.56 181.35 L586.46 181.81 L586.36 182.27 L586.26 182.74 L586.16 183.20 L586.05 183.67 L585.95 184.14 L585.85 184.61 L585.74 185.09 L585.64 185.56 L585.53 186.04 L585.43 186.52 L585.32 187.00 L585.21 187.48 L585.10 187.96 L585.00 188.45 L584.89 188.94 L584.78 189.43 L584.67 189.92 L584.57 190.41 L584.46 190.90 L584.35 191.40 L584.24 191.89 L584.13 192.39 L584.03 192.89 L583.92 193.39 L583.81 193.90 L583.70 194.40 L583.60 194.91 L583.49 195.41 L583.39 195.92 L583.28 196.43 L583.18 196.94 L583.07 197.46 L582.97 197.97 L582.86 198.49 L582.76 199.00 L582.66 199.52 L582.56 200.04 L582.46 200.56 L582.36 201.08 L582.26 201.61 L582.17 202.13 L582.07 202.66 L581.97 203.18 L581.88 203.71 L581.79 204.24 L581.69 204.77 L581.60 205.30 L581.51 205.84 L581.43 206.37 L581.34 206.91 L581.25 207.44 L581.17 207.98 L581.08 208.52 L581.00 209.06 L580.92 209.60 L580.84 210.14 L580.77 210.69 L580.69 211.23 L580.61 211.78 L580.54 212.32 L580.47 212.87 L580.40 213.42 L580.33 213.97 L580.27 214.52 L580.20 215.07 L580.14 215.62 L580.08 216.18 L580.02 216.73 L579.96 217.29 L579.91 217.84 L579.85 218.40 L579.80 218.96 L579.75 219.52 L579.70 220.08 L579.66 220.64 L579.61 221.20 L579.57 221.76 L579.53 222.32 L579.49 222.89 L579.46 223.45 L579.43 224.02 L579.39 224.59 L579.37 225.15 L579.34 225.72 L579.31 226.29 L579.29 226.86 L579.27 227.43 L579.25 228.00 L579.24 228.58 L579.23 229.15 L579.22 229.72 L579.21 230.30 L579.20 230.87 L579.20 231.45 L579.20 232.03 L579.20 232.60 L579.20 233.18 L579.21 233.76 L579.22 234.34 L579.23 234.92 L579.24 235.50 L579.26 236.08 L579.28 236.67 L579.30 237.25 L579.33 237.83 L579.35 238.42 L579.38 239.00 L579.42 239.59 L579.45 240.17 L579.49 240.76 L579.53 241.35 L579.57 241.93 L579.62 242.52 L579.67 243.11 L579.72 243.70 L579.77 244.29 L579.83 244.88 L579.89 245.47 L579.95 246.07 L580.02 246.66 L580.09 247.25 L580.16 247.85 L580.23 248.44 L580.31 249.03 L580.39 249.63 L580.48 250.23 L580.56 250.82 L580.65 251.42 L580.74 252.02 L580.84 252.61 L580.94 253.21 L581.04 253.81 L581.14 254.41 L581.25 255.01 L581.36 255.61 L581.47 256.21 L581.59 256.81 L581.71 257.41 L581.83 258.01 L581.96 258.62 L582.08 259.22 L582.22 259.82 L582.35 260.42 L582.49 261.03 L582.63 261.63 L582.77 262.24 L582.92 262.84 L583.07 263.45 L583.23 264.05 L583.38 264.66 L583.54 265.27 L583.71 265.87 L583.87 266.48 L584.04 267.09 L584.22 267.70 L584.39 268.31 M818.42 112.87 L817.11 113.40 L815.79 113.94 L814.47 114.48 L813.14 115.03 L811.80 115.58 L810.46 116.15 L809.12 116.72 L807.76 117.29 L806.41 117.88 L805.04 118.47 L803.68 119.06 L802.31 119.66 L800.93 120.27 L799.55 120.88 L798.16 121.50 L796.77 122.13 L795.37 122.76 L793.97 123.39 L792.57 124.03 L791.16 124.68 L789.75 125.33 L788.33 125.99 L786.91 126.65 L785.49 127.31 L784.07 127.99 L782.64 128.66 L781.20 129.34 L779.77 130.02 L778.33 130.71 L776.89 131.41 L775.44 132.10 L773.99 132.80 L772.54 133.51 L771.09 134.22 L769.64 134.93 L768.18 135.65 L766.72 136.37 L765.26 137.09 L763.80 137.82 L762.34 138.55 L760.87 139.29 L759.40 140.02 L757.94 140.76 L756.47 141.51 L754.99 142.26 L753.52 143.01 L752.05 143.76 L750.58 144.52 L749.10 145.28 L747.63 146.04 L746.15 146.80 L744.67 147.57 L743.20 148.34 L741.72 149.11 L740.24 149.89 L738.77 150.67 L737.29 151.45 L735.81 152.23 L734.34 153.02 L732.86 153.80 L731.39 154.59 L729.91 155.39 L728.44 156.18 L726.96 156.98 L725.49 157.78 L724.02 158.58 L722.55 159.38 L721.08 160.19 L719.61 160.99 L718.14 161.80 L716.68 162.61 L715.21 163.43 L713.75 164.24 L712.29 165.06 L710.83 165.87 L709.37 166.69 L707.91 167.52 L706.46 168.34 L705.00 169.16 L703.55 169.99 L702.11 170.82 L700.66 171.65 L699.22 172.48 L697.78 173.31 L696.34 174.15 L694.90 174.98 L693.47 175.82 L692.04 176.66 L690.61 177.50 L689.18 178.34 L687.76 179.18 L686.34 180.02 L684.92 180.87 L683.51 181.72 L682.10 182.56 L680.69 183.41 L679.29 184.26 L677.89 185.11 L676.49 185.97 L675.10 186.82 L673.71 187.67 L672.32 188.53 L670.94 189.39 L669.56 190.24 L668.19 191.10 L666.82 191.96 L665.45 192.82 L664.09 193.68 L662.73 194.55 L661.38 195.41 L660.03 196.28 L658.68 197.14 L657.34 198.01 L656.00 198.87 L654.67 199.74 L653.34 200.61 L652.02 201.48 L650.70 202.35 L649.38 203.22 L648.07 204.10 L646.77 204.97 L645.47 205.84 L644.17 206.72 L642.88 207.59 L641.60 208.47 L640.32 209.35 L639.04 210.23 L637.77 211.10 L636.51 211.98 L635.25 212.86 L634.00 213.74 L632.75 214.62 L631.51 215.51 L630.27 216.39 L629.04 217.27 L627.81 218.16 L626.59 219.04 L625.37 219.93 L624.16 220.81 L622.96 221.70 L621.76 222.58 L620.57 223.47 L619.38 224.36 L618.20 225.25 L617.03 226.14 L615.86 227.02 L614.70 227.91 L613.54 228.81 L612.39 229.70 L611.25 230.59 L610.11 231.48 L608.98 232.37 L607.86 233.26 L606.74 234.16 L605.63 235.05 L604.52 235.95 L603.42 236.84 L602.33 237.74 L601.25 238.63 L600.17 239.53 L599.09 240.42 L598.03 241.32 L596.97 242.22 L595.92 243.11 L594.87 244.01 L593.83 244.91 L592.80 245.81 L591.78 246.71 L590.76 247.61 L589.75 248.51 L588.75 249.41 L587.75 250.31 L586.76 251.21 L585.78 252.11 L584.81 253.01 L583.84 253.91 L582.88 254.81 L581.92 255.72 L580.98 256.62 L580.04 257.52 L579.11 258.42 L578.19 259.33 L577.27 260.23 L576.36 261.14 L575.46 262.04 L574.57 262.94 L573.68 263.85 L572.80 264.75 L571.93 265.66 L571.07 266.56 L570.21 267.47 L569.36 268.38 L568.52 269.28 L567.69 270.19 L566.87 271.10 L566.05 272.00 L565.24 272.91 L564.44 273.82 L563.65 274.72 L562.86 275.63 L562.09 276.54 L561.32 277.45 L560.56 278.35 L559.80 279.26 L559.06 280.17 L558.32 281.08 L557.59 281.99 L556.87 282.90 L556.16 283.81 L555.46 284.72 L554.76 285.63 L554.07 286.54 L553.39 287.45 L552.72 288.36 L552.06 289.27 L551.40 290.18 L550.76 291.09 L550.12 292.00 L549.49 292.91 L548.87 293.82 L548.26 294.73 L547.65 295.64 L547.06 296.55 L546.47 297.46 L545.89 298.37 L545.32 299.28 L544.76 300.19 L544.20 301.10 L543.66 302.02 L543.12 302.93 L542.59 303.84 L542.08 304.75 L541.56 305.66 L541.06 306.57 L540.57 307.49 L540.08 308.40 L539.61 309.31 L539.14 310.22 L538.68 311.13 L538.23 312.04 L537.79 312.96 L537.36 313.87 L536.93 314.78 L536.52 315.69 L536.11 316.60 L535.72 317.52 L535.33 318.43 L534.95 319.34 L534.58 320.25 L534.21 321.17 L533.86 322.08 L533.52 322.99 L533.18 323.90 L532.85 324.81 L532.53 325.73 L532.22 326.64 L531.92 327.55 L531.63 328.46 L531.35 329.37 L531.08 330.29 L530.81 331.20 L530.55 332.11 L530.31 333.02 L530.07 333.93 L529.84 334.84 L529.62 335.76 L529.41 336.67 L529.20 337.58 L529.01 338.49 L528.83 339.40 L528.65 340.31 L528.48 341.22 L528.32 342.14 L528.18 343.05 L528.03 343.96 L527.90 344.87 L527.78 345.78 L527.67 346.69 L527.56 347.60 L527.47 348.51 L527.38 349.42 L527.30 350.33 L527.23 351.24 L527.17 352.15 L527.12 353.06 L527.08 353.97 L527.04 354.88 L527.02 355.79 L527.00 356.70 L527.00 357.61 L527.00 358.52 L527.01 359.42 L527.03 360.33 L527.06 361.24 L527.09 362.15 L527.14 363.06 L527.20 363.97 L527.26 364.87 L527.33 365.78 M773.18 112.58 L773.08 112.44 L772.98 112.29 L772.88 112.15 L772.78 112.01 L772.68 111.87 L772.57 111.73 L772.46 111.59 L772.36 111.45 L772.25 111.32 L772.13 111.18 L772.02 111.04 L771.91 110.91 L771.79 110.78 L771.68 110.65 L771.56 110.52 L771.44 110.39 L771.32 110.26 L771.19 110.13 L771.07 110.01 L770.94 109.88 L770.82 109.76 L770.69 109.63 L770.56 109.51 L770.42 109.39 L770.29 109.27 L770.15 109.15 L770.02 109.04 L769.88 108.92 L769.74 108.80 L769.60 108.69 L769.45 108.58 L769.31 108.47 L769.16 108.36 L769.01 108.25 L768.86 108.14 L768.71 108.03 L768.55 107.93 L768.40 107.82 L768.24 107.72 L768.08 107.62 L767.92 107.51 L767.75 107.41 L767.59 107.32 L767.42 107.22 L767.25 107.12 L767.08 107.03 L766.91 106.93 L766.73 106.84 L766.56 106.75 L766.38 106.66 L766.20 106.57 L766.01 106.48 L765.83 106.40 L765.64 106.31 L765.45 106.23 L765.26 106.14 L765.07 106.06 L764.88 105.98 L764.68 105.90 L764.48 105.83 L764.28 105.75 L764.08 105.68 L763.87 105.60 L763.67 105.53 L763.46 105.46 L763.25 105.39 L763.03 105.32 L762.82 105.25 L762.60 105.19 L762.38 105.12 L762.16 105.06 L761.93 105.00 L761.71 104.94 L761.48 104.88 L761.25 104.82 L761.01 104.76 L760.78 104.71 L760.54 104.65 L760.30 104.60 L760.06 104.55 L759.81 104.50 L759.56 104.45 L759.32 104.40 L759.06 104.36 L758.81 104.31 L758.55 104.27 L758.29 104.23 L758.03 104.19 L757.77 104.15 L757.50 104.11 L757.23 104.07 L756.96 104.04 L756.69 104.00 L756.41 103.97 L756.14 103.94 L755.86 103.91 L755.57 103.88 L755.29 103.85 L755.00 103.83 L754.71 103.80 L754.41 103.78 L754.12 103.76 L753.82 103.74 L753.52 103.72 L753.22 103.70 L752.91 103.69 L752.60 103.67 L752.29 103.66 L751.98 103.65 L751.66 103.64 L751.34 103.63 L751.02 103.62 L750.70 103.62 L750.37 103.61 L750.04 103.61 L749.71 103.61 L749.38 103.61 L749.04 103.61 L748.70 103.61 L748.36 103.61 L748.02 103.62 L747.67 103.62 L747.32 103.63 L746.96 103.64 L746.61 103.65 L746.25 103.66 L745.89 103.68 L745.53 103.69 L745.16 103.71 L744.79 103.72 L744.42 103.74 L744.05 103.76 L743.67 103.78 L743.29 103.81 L742.91 103.83 L742.52 103.86 L742.14 103.88 L741.75 103.91 L741.35 103.94 L740.96 103.97 L740.56 104.01 L740.16 104.04 L739.75 104.08 L739.35 104.11 L738.94 104.15 L738.53 104.19 L738.11 104.23 L737.69 104.27 L737.27 104.32 L736.85 104.36 L736.43 104.41 L736.00 104.46 L735.57 104.50 L735.13 104.55 L734.70 104.61 L734.26 104.66 L733.81 104.71 L733.37 104.77 L732.92 104.83 L732.47 104.88 L732.02 104.94 L731.56 105.00 L731.11 105.07 L730.65 105.13 L730.18 105.20 L729.72 105.26 L729.25 105.33 L728.78 105.40 L728.30 105.47 L727.82 105.54 L727.34 105.61 L726.86 105.69 L726.38 105.76 L725.89 105.84 L725.40 105.92 L724.91 105.99 L724.41 106.07 L723.91 106.16 L723.41 106.24 L722.91 106.32 L722.40 106.41 L721.89 106.49 L721.38 106.58 L720.87 106.67 L720.35 106.76 L719.83 106.85 L719.31 106.95 L718.79 107.04 L718.26 107.14 L717.73 107.23 L717.20 107.33 L716.66 107.43 L716.13 107.53 L715.59 107.63 L715.04 107.73 L714.50 107.84 L713.95 107.94 L713.40 108.05 L712.85 108.15 L712.29 108.26 L711.74 108.37 L711.18 108.48 L710.62 108.59 L710.05 108.71 L709.48 108.82 L708.91 108.94 L708.34 109.05 L707.77 109.17 L707.19 109.29 L706.61 109.41 L706.03 109.53 L705.45 109.65 L704.86 109.77 L704.27 109.90 L703.68 110.02 L703.08 110.15 L702.49 110.28 L701.89 110.40 L701.29 110.53 L700.69 110.67 L700.08 110.80 L699.47 110.93 L698.86 111.06 L698.25 111.20 L697.64 111.33 L697.02 111.47 L696.40 111.61 L695.78 111.75 L695.16 111.89 L694.53 112.03 L693.91 112.17 L693.28 112.31 L692.64 112.46 L692.01 112.60 L691.37 112.75 L690.74 112.90 L690.10 113.04 L689.45 113.19 L688.81 113.34 L688.16 113.49 L687.51 113.65 L686.86 113.80 L686.21 113.95 L685.55 114.11 L684.90 114.26 L684.24 114.42 L683.58 114.58 L682.91 114.74 L682.25 114.90 L681.58 115.06 L680.91 115.22 L680.24 115.38 L679.57 115.54 L678.89 115.71 L678.22 115.87 L677.54 116.04 L676.86 116.20 L676.17 116.37 L675.49 116.54 L674.80 116.71 L674.12 116.88 L673.43 117.05 L672.74 117.22 L672.04 117.40 L671.35 117.57 L670.65 117.74 L669.95 117.92 L669.25 118.10 L668.55 118.27 L667.85 118.45 L667.14 118.63 L666.43 118.81 L665.72 118.99 L665.01 119.17 L664.30 119.35 L663.59 119.53 L662.87 119.72 L662.15 119.90 L661.44 120.09 L660.71 120.27 L659.99 120.46 L659.27 120.64 L658.54 120.83 L657.82 121.02 L657.09 121.21 L656.36 121.40 L655.63 121.59 L654.90 121.78 L654.16 121.98 L653.43 122.17 L652.69 122.36 L651.95 122.56 L651.21 122.75 L650.47 122.95 L649.73 123.14 L648.98 123.34 L648.24 123.54 L647.49 123.74 L646.74 123.94 M461.47 193.33 L462.91 193.24 L464.35 193.15 L465.77 193.08 L467.18 193.01 L468.58 192.94 L469.96 192.89 L471.33 192.84 L472.68 192.80 L474.03 192.76 L475.36 192.74 L476.67 192.72 L477.97 192.70 L479.26 192.70 L480.54 192.70 L481.80 192.71 L483.05 192.72 L484.29 192.75 L485.51 192.78 L486.72 192.81 L487.92 192.86 L489.11 192.91 L490.28 192.97 L491.44 193.03 L492.58 193.11 L493.72 193.19 L494.84 193.27 L495.95 193.37 L497.05 193.47 L498.13 193.57 L499.21 193.69 L500.27 193.81 L501.32 193.94 L502.35 194.08 L503.38 194.22 L504.39 194.37 L505.39 194.53 L506.38 194.69 L507.36 194.86 L508.33 195.04 L509.29 195.22 L510.24 195.41 L511.17 195.61 L512.10 195.82 L513.01 196.03 L513.91 196.24 L514.81 196.47 L515.69 196.70 L516.56 196.94 L517.43 197.18 L518.28 197.43 L519.13 197.69 L519.96 197.95 L520.78 198.22 L521.60 198.50 L522.41 198.78 L523.20 199.07 L523.99 199.37 L524.77 199.67 L525.55 199.98 L526.31 200.30 L527.06 200.62 L527.81 200.94 L528.55 201.28 L529.28 201.61 L530.01 201.96 L530.72 202.31 L531.43 202.67 L532.13 203.03 L532.83 203.40 L533.52 203.77 L534.20 204.15 L534.87 204.54 L535.54 204.93 L536.20 205.33 L536.86 205.73 L537.51 206.14 L538.16 206.55 L538.79 206.97 L539.43 207.40 L540.06 207.83 L540.68 208.26 L541.30 208.70 L541.91 209.15 L542.52 209.60 L543.12 210.06 L543.72 210.52 L544.32 210.98 L544.91 211.46 L545.49 211.93 L546.08 212.41 L546.66 212.90 L547.23 213.39 L547.81 213.89 L548.37 214.39 L548.94 214.89 L549.50 215.40 L550.06 215.92 L550.62 216.44 L551.18 216.96 L551.73 217.49 L552.28 218.02 L552.83 218.56 L553.37 219.10 L553.92 219.65 L554.46 220.20 L555.00 220.75 L555.54 221.31 L556.08 221.88 L556.61 222.44 L557.15 223.01 L557.68 223.59 L558.22 224.17 L558.75 224.75 L559.28 225.34 L559.81 225.93 L560.35 226.52 L560.88 227.12 L561.41 227.72 L561.94 228.33 L562.47 228.94 L563.00 229.55 L563.53 230.17 L564.06 230.79 L564.60 231.41 L565.13 232.04 L565.66 232.67 L566.20 233.30 L566.73 233.94 L567.27 234.58 L567.80 235.22 L568.34 235.87 L568.88 236.52 L569.42 237.17 L569.97 237.83 L570.51 238.49 L571.06 239.15 L571.60 239.82 L572.15 240.48 L572.70 241.15 L573.26 241.83 L573.81 242.51 L574.37 243.18 L574.93 243.87 L575.49 244.55 L576.06 245.24 L576.63 245.93 L577.20 246.62 L577.77 247.32 L578.34 248.02 L578.92 248.72 L579.50 249.42 L580.09 250.12 L580.67 250.83 L581.26 251.54 L581.85 252.25 L582.45 252.97 L583.05 253.69 L583.65 254.41 L584.26 255.13 L584.87 255.85 L585.48 256.58 L586.10 257.30 L586.72 258.03 L587.34 258.77 L587.97 259.50 L588.60 260.24 L589.24 260.97 L589.87 261.71 L590.52 262.45 L591.16 263.20 L591.81 263.94 L592.47 264.69 L593.13 265.44 L593.79 266.19 L594.46 266.94 L595.13 267.70 L595.81 268.45 L596.49 269.21 L597.17 269.97 L597.86 270.73 L598.55 271.49 L599.25 272.25 L599.95 273.02 L600.66 273.79 L601.37 274.55 L602.08 275.32 L602.80 276.09 L603.53 276.87 L604.26 277.64 L604.99 278.41 L605.73 279.19 L606.47 279.97 L607.22 280.74 L607.98 281.52 L608.73 282.30 L609.50 283.09 L610.26 283.87 L611.04 284.65 L611.81 285.44 L612.59 286.22 L613.38 287.01 L614.17 287.80 L614.97 288.59 L615.77 289.38 L616.58 290.17 L617.39 290.96 L618.20 291.75 L619.03 292.55 L619.85 293.34 L620.68 294.13 L621.52 294.93 L622.36 295.73 L623.21 296.52 L624.06 297.32 L624.91 298.12 L625.77 298.92 L626.64 299.72 L627.51 300.52 L628.39 301.32 L629.27 302.12 L630.15 302.92 L631.04 303.72 L631.94 304.53 L632.84 305.33 L633.74 306.13 L634.66 306.94 L635.57 307.74 L636.49 308.55 L637.42 309.35 L638.35 310.16 L639.28 310.96 L640.22 311.77 L641.17 312.57 L642.12 313.38 L643.07 314.19 L644.03 314.99 L645.00 315.80 L645.96 316.61 L646.94 317.42 L647.92 318.22 L648.90 319.03 L649.89 319.84 L650.88 320.64 L651.88 321.45 L652.88 322.26 L653.89 323.07 L654.90 323.87 L655.92 324.68 L656.94 325.49 L657.96 326.29 L658.99 327.10 L660.03 327.91 L661.07 328.71 L662.11 329.52 L663.16 330.32 L664.21 331.13 L665.27 331.93 L666.33 332.74 L667.40 333.54 L668.47 334.34 L669.54 335.15 L670.62 335.95 L671.70 336.75 L672.79 337.56 L673.88 338.36 L674.98 339.16 L676.08 339.96 L677.18 340.76 L678.29 341.56 L679.40 342.36 L680.52 343.15 L681.64 343.95 L682.76 344.75 L683.89 345.54 L685.02 346.34 L686.15 347.13 L687.29 347.93 L688.44 348.72 L689.58 349.51 L690.73 350.30 L691.89 351.09 L693.04 351.88 L694.20 352.67 L695.37 353.46 L696.54 354.24 L697.71 355.03 L698.88 355.81 L700.06 356.60 L701.24 357.38 L702.43 358.16 L703.62 358.94 L704.81 359.72 L706.00 360.50 L707.20 361.27 L708.40 362.05 L709.60 362.82 L710.81 363.59 L712.02 364.37 L713.23 365.14 M752.81 383.60 L752.05 382.67 L751.30 381.73 L750.55 380.79 L749.81 379.85 L749.07 378.91 L748.33 377.97 L747.60 377.03 L746.87 376.09 L746.15 375.15 L745.43 374.21 L744.71 373.27 L744.00 372.33 L743.29 371.39 L742.59 370.44 L741.88 369.50 L741.19 368.56 L740.49 367.61 L739.81 366.67 L739.12 365.73 L738.44 364.78 L737.76 363.84 L737.09 362.89 L736.42 361.95 L735.76 361.00 L735.10 360.06 L734.44 359.11 L733.79 358.16 L733.15 357.22 L732.50 356.27 L731.87 355.32 L731.23 354.37 L730.60 353.43 L729.98 352.48 L729.36 351.53 L728.74 350.58 L728.13 349.64 L727.52 348.69 L726.92 347.74 L726.32 346.79 L725.73 345.84 L725.14 344.89 L724.55 343.94 L723.97 342.99 L723.40 342.04 L722.83 341.09 L722.26 340.14 L721.70 339.19 L721.14 338.24 L720.59 337.29 L720.04 336.34 L719.50 335.39 L718.96 334.44 L718.43 333.49 L717.90 332.54 L717.38 331.59 L716.86 330.64 L716.34 329.69 L715.84 328.74 L715.33 327.78 L714.83 326.83 L714.34 325.88 L713.85 324.93 L713.36 323.98 L712.88 323.03 L712.41 322.08 L711.94 321.13 L711.47 320.17 L711.01 319.22 L710.56 318.27 L710.11 317.32 L709.66 316.37 L709.22 315.42 L708.79 314.47 L708.36 313.52 L707.93 312.56 L707.51 311.61 L707.10 310.66 L706.69 309.71 L706.28 308.76 L705.88 307.81 L705.49 306.86 L705.10 305.91 L704.72 304.96 L704.34 304.01 L703.96 303.06 L703.59 302.11 L703.23 301.16 L702.87 300.21 L702.52 299.26 L702.17 298.31 L701.83 297.36 L701.49 296.41 L701.16 295.46 L700.83 294.51 L700.51 293.56 L700.19 292.61 L699.88 291.66 L699.57 290.71 L699.27 289.76 L698.97 288.82 L698.68 287.87 L698.40 286.92 L698.12 285.97 L697.84 285.02 L697.57 284.08 L697.30 283.13 L697.05 282.18 L696.79 281.24 L696.54 280.29 L696.30 279.35 L696.06 278.40 L695.83 277.45 L695.60 276.51 L695.37 275.56 L695.16 274.62 L694.94 273.68 L694.74 272.73 L694.53 271.79 L694.34 270.84 L694.15 269.90 L693.96 268.96 L693.78 268.02 L693.60 267.08 L693.43 266.13 L693.27 265.19 L693.11 264.25 L692.95 263.31 L692.80 262.37 L692.65 261.43 L692.52 260.49 L692.38 259.55 L692.25 258.62 L692.13 257.68 L692.01 256.74 L691.89 255.80 L691.79 254.87 L691.68 253.93 L691.58 252.99 L691.49 252.06 L691.40 251.12 L691.32 250.19 L691.24 249.26 L691.17 248.32 L691.10 247.39 L691.03 246.46 L690.98 245.53 L690.92 244.60 L690.88 243.67 L690.83 242.74 L690.79 241.81 L690.76 240.88 L690.73 239.95 L690.71 239.02 L690.69 238.10 L690.68 237.17 L690.67 236.25 L690.66 235.32 L690.66 234.40 L690.67 233.48 L690.68 232.55 L690.69 231.63 L690.71 230.71 L690.74 229.79 L690.77 228.87 L690.80 227.95 L690.84 227.03 L690.88 226.12 L690.93 225.20 L690.98 224.29 L691.04 223.37 L691.10 222.46 L691.17 221.54 L691.24 220.63 L691.31 219.72 L691.39 218.81 L691.48 217.90 L691.56 216.99 L691.66 216.09 L691.75 215.18 L691.85 214.28 L691.96 213.37 L692.07 212.47 L692.18 211.57 L692.30 210.67 L692.42 209.77 L692.54 208.87 L692.67 207.97 L692.81 207.07 L692.95 206.18 L693.09 205.28 L693.23 204.39 L693.38 203.50 L693.53 202.61 L693.69 201.72 L693.85 200.83 L694.01 199.95 L694.18 199.06 L694.35 198.18 L694.53 197.29 L694.70 196.41 L694.88 195.53 L695.07 194.66 L695.26 193.78 L695.45 192.90 L695.64 192.03 L695.84 191.16 L696.04 190.29 L696.24 189.42 L696.45 188.55 L696.66 187.69 L696.87 186.82 L697.08 185.96 L697.30 185.10 L697.52 184.24 L697.74 183.39 L697.97 182.53 L698.19 181.68 L698.42 180.83 L698.66 179.98 L698.89 179.13 L699.13 178.29 L699.36 177.44 L699.60 176.60 L699.85 175.76 L700.09 174.93 L700.33 174.09 L700.58 173.26 L700.83 172.43 L701.08 171.61 L701.33 170.78 L701.58 169.96 L701.84 169.14 L702.09 168.32 L702.35 167.51 L702.60 166.69 L702.86 165.88 L703.12 165.08 L703.37 164.27 L703.63 163.47 L703.89 162.67 L704.15 161.88 L704.41 161.09 L704.67 160.30 L704.92 159.51 L705.18 158.73 L705.44 157.95 L705.70 157.17 L705.95 156.40 L706.21 155.63 L706.46 154.86 L706.71 154.10 L706.97 153.34 L707.22 152.58 L707.46 151.83 L707.71 151.08 L707.95 150.34 L708.20 149.60 L708.44 148.86 L708.67 148.13 L708.91 147.40 L709.14 146.67 L709.37 145.95 L709.59 145.24 L709.82 144.53 L710.04 143.82 L710.25 143.12 L710.46 142.42 L710.67 141.73 L710.87 141.04 L711.06 140.36 L711.26 139.68 L711.44 139.01 L711.63 138.34 L711.80 137.68 L711.97 137.02 L712.13 136.37 L712.29 135.73 L712.44 135.09 L712.59 134.45 L712.72 133.83 L712.85 133.21 L712.97 132.59 L713.09 131.98 L713.19 131.38 L713.29 130.78 L713.38 130.19 L713.45 129.61 L713.52 129.04 L713.58 128.47 L713.63 127.91 L713.67 127.35 L713.69 126.80 L713.71 126.26 L713.72 125.73 L713.71 125.21 L713.69 124.69 L713.66 124.18 L713.61 123.68 L713.55 123.19 M776.05 366.45 L776.31 365.43 L776.56 364.41 L776.82 363.39 L777.09 362.36 L777.36 361.34 L777.63 360.32 L777.90 359.30 L778.18 358.28 L778.46 357.25 L778.75 356.23 L779.04 355.21 L779.33 354.19 L779.63 353.16 L779.93 352.14 L780.24 351.12 L780.55 350.09 L780.86 349.07 L781.17 348.04 L781.49 347.02 L781.82 346.00 L782.14 344.97 L782.47 343.95 L782.81 342.92 L783.14 341.90 L783.49 340.87 L783.83 339.85 L784.18 338.82 L784.53 337.80 L784.88 336.77 L785.24 335.75 L785.61 334.72 L785.97 333.70 L786.34 332.67 L786.71 331.64 L787.09 330.62 L787.47 329.59 L787.85 328.57 L788.24 327.54 L788.63 326.52 L789.02 325.49 L789.42 324.46 L789.82 323.44 L790.23 322.41 L790.63 321.39 L791.04 320.36 L791.46 319.33 L791.87 318.31 L792.30 317.28 L792.72 316.26 L793.15 315.23 L793.58 314.20 L794.01 313.18 L794.45 312.15 L794.89 311.13 L795.33 310.10 L795.78 309.07 L796.23 308.05 L796.68 307.02 L797.14 306.00 L797.60 304.97 L798.06 303.95 L798.53 302.92 L799.00 301.90 L799.47 300.87 L799.94 299.85 L800.42 298.82 L800.90 297.80 L801.39 296.77 L801.88 295.75 L802.37 294.72 L802.86 293.70 L803.36 292.67 L803.86 291.65 L804.36 290.63 L804.86 289.60 L805.37 288.58 L805.88 287.55 L806.40 286.53 L806.92 285.51 L807.44 284.49 L807.96 283.46 L808.48 282.44 L809.01 281.42 L809.54 280.40 L810.08 279.37 L810.61 278.35 L811.15 277.33 L811.69 276.31 L812.24 275.29 L812.79 274.27 L813.34 273.25 L813.89 272.23 L814.44 271.21 L815.00 270.19 L815.56 269.17 L816.13 268.15 L816.69 267.13 L817.26 266.11 L817.83 265.09 L818.40 264.07 L818.98 263.05 L819.56 262.04 L820.14 261.02 L820.72 260.00 L821.30 258.99 L821.89 257.97 L822.48 256.95 L823.07 255.94 L823.67 254.92 L824.26 253.91 L824.86 252.90 L825.46 251.88 L826.07 250.87 L826.67 249.85 L827.28 248.84 L827.89 247.83 L828.50 246.82 L829.12 245.81 L829.73 244.80 L830.35 243.79 L830.97 242.78 L831.59 241.77 L832.22 240.76 L832.84 239.75 L833.47 238.74 L834.10 237.73 L834.73 236.73 L835.37 235.72 L836.00 234.71 L836.64 233.71 L837.28 232.70 L837.92 231.70 L838.56 230.70 L839.21 229.69 L839.85 228.69 L840.50 227.69 L841.15 226.69 L841.80 225.69 L842.45 224.69 L843.11 223.69 L843.76 222.69 L844.42 221.69 L845.08 220.70 L845.74 219.70 L846.40 218.70 L847.06 217.71 L847.73 216.72 L848.40 215.72 L849.06 214.73 L849.73 213.74 L850.40 212.75 L851.07 211.76 L851.75 210.77 L852.42 209.78 L853.10 208.79 L853.77 207.81 L854.45 206.82 L855.13 205.84 L855.81 204.85 L856.49 203.87 L857.17 202.89 L857.86 201.91 L858.54 200.93 L859.22 199.95 L859.91 198.97 L860.60 198.00 L861.29 197.02 L861.98 196.05 L862.67 195.08 L863.36 194.11 L864.05 193.13 L864.74 192.17 L865.43 191.20 L866.13 190.23 L866.82 189.27 L867.52 188.30 L868.22 187.34 L868.91 186.38 L869.61 185.42 L870.31 184.46 L871.01 183.50 L871.71 182.55 L872.41 181.59 L873.11 180.64 L873.81 179.69 L874.51 178.74 L875.21 177.79 L875.92 176.85 L876.62 175.90 L877.32 174.96 L878.03 174.02 L878.73 173.08 L879.43 172.15 L880.14 171.21 L880.84 170.28 L881.55 169.35 L882.26 168.42 L882.96 167.49 L883.67 166.56 L884.38 165.64 L885.08 164.72 L885.79 163.80 L886.50 162.89 L887.20 161.97 L887.91 161.06 L888.62 160.15 L889.33 159.25 L890.03 158.34 L890.74 157.44 L891.45 156.54 L892.16 155.65 L892.87 154.75 L893.57 153.86 L894.28 152.98 L894.99 152.09 L895.70 151.21 L896.41 150.33 L897.11 149.46 L897.82 148.58 L898.53 147.71 L899.24 146.85 L899.95 145.99 L900.66 145.13 L901.36 144.27 L902.07 143.42 L902.78 142.57 L903.49 141.73 L904.20 140.89 L904.90 140.06 L905.61 139.22 L906.32 138.40 L907.03 137.57 L907.74 136.75 L908.45 135.94 L909.15 135.13 L909.86 134.32 L910.57 133.52 L911.28 132.73 L911.99 131.94 L912.70 131.15 L913.41 130.37 L914.12 129.60 L914.83 128.83 L915.54 128.07 L916.25 127.31 L916.96 126.56 L917.68 125.81 L918.39 125.07 L919.10 124.34 L919.82 123.61 L920.53 122.89 L921.25 122.18 L921.97 121.47 L922.69 120.77 L923.41 120.08 L924.13 119.40 L924.85 118.72 L925.57 118.05 L926.30 117.39 L927.03 116.74 L927.76 116.09 L928.49 115.45 L929.22 114.83 L929.96 114.21 L930.69 113.60 L931.43 113.00 L932.18 112.40 L932.92 111.82 L933.67 111.25 L934.42 110.69 L935.18 110.14 L935.94 109.60 L936.70 109.06 L937.47 108.54 L938.24 108.04 L939.01 107.54 L939.79 107.05 L940.58 106.58 L941.37 106.11 L942.17 105.66 L942.97 105.23 L943.78 104.80 L944.59 104.39 L945.41 103.99 L946.24 103.60 L947.07 103.23 L947.91 102.87 L948.76 102.52 L949.62 102.19 L950.49 101.87 L951.36 101.57 L952.24 101.28 L953.14 101.00 L954.04 100.74 L954.95 100.50 L955.87 100.27 L956.81 100.05 L957.75 99.85 L958.71 99.67 M543.80 205.24 L543.63 205.49 L543.47 205.73 L543.30 205.98 L543.14 206.23 L542.97 206.47 L542.81 206.72 L542.64 206.97 L542.48 207.21 L542.32 207.46 L542.16 207.71 L541.99 207.95 L541.83 208.20 L541.67 208.45 L541.51 208.69 L541.35 208.94 L541.19 209.19 L541.03 209.44 L540.88 209.69 L540.72 209.93 L540.56 210.18 L540.40 210.43 L540.25 210.68 L540.09 210.93 L539.94 211.17 L539.78 211.42 L539.63 211.67 L539.48 211.92 L539.32 212.17 L539.17 212.42 L539.02 212.67 L538.87 212.91 L538.72 213.16 L538.57 213.41 L538.42 213.66 L538.27 213.91 L538.12 214.16 L537.97 214.41 L537.82 214.66 L537.68 214.91 L537.53 215.16 L537.38 215.41 L537.24 215.66 L537.09 215.91 L536.95 216.16 L536.81 216.41 L536.66 216.66 L536.52 216.91 L536.38 217.16 L536.24 217.41 L536.10 217.66 L535.96 217.91 L535.82 218.16 L535.68 218.42 L535.54 218.67 L535.40 218.92 L535.26 219.17 L535.12 219.42 L534.99 219.67 L534.85 219.92 L534.72 220.17 L534.58 220.43 L534.45 220.68 L534.31 220.93 L534.18 221.18 L534.05 221.43 L533.92 221.68 L533.79 221.94 L533.66 222.19 L533.53 222.44 L533.40 222.69 L533.27 222.95 L533.14 223.20 L533.01 223.45 L532.88 223.70 L532.76 223.96 L532.63 224.21 L532.51 224.46 L532.38 224.71 L532.26 224.97 L532.13 225.22 L532.01 225.47 L531.89 225.73 L531.77 225.98 L531.65 226.23 L531.52 226.49 L531.40 226.74 L531.29 226.99 L531.17 227.25 L531.05 227.50 L530.93 227.76 L530.81 228.01 L530.70 228.26 L530.58 228.52 L530.47 228.77 L530.35 229.03 L530.24 229.28 L530.13 229.53 L530.01 229.79 L529.90 230.04 L529.79 230.30 L529.68 230.55 L529.57 230.81 L529.46 231.06 L529.35 231.32 L529.24 231.57 L529.14 231.83 L529.03 232.08 L528.92 232.34 L528.82 232.59 L528.71 232.85 L528.61 233.10 L528.50 233.36 L528.40 233.61 L528.30 233.87 L528.20 234.12 L528.10 234.38 L527.99 234.63 L527.89 234.89 L527.80 235.14 L527.70 235.40 L527.60 235.66 L527.50 235.91 L527.40 236.17 L527.31 236.42 L527.21 236.68 L527.12 236.94 L527.02 237.19 L526.93 237.45 L526.84 237.70 L526.75 237.96 L526.65 238.22 L526.56 238.47 L526.47 238.73 L526.38 238.99 L526.30 239.24 L526.21 239.50 L526.12 239.76 L526.03 240.01 L525.95 240.27 L525.86 240.53 L525.78 240.78 L525.69 241.04 L525.61 241.30 L525.53 241.56 L525.44 241.81 L525.36 242.07 L525.28 242.33 L525.20 242.58 L525.12 242.84 L525.04 243.10 L524.96 243.36 L524.89 243.61 L524.81 243.87 L524.73 244.13 L524.66 244.39 L524.58 244.65 L524.51 244.90 L524.44 245.16 L524.36 245.42 L524.29 245.68 L524.22 245.93 L524.15 246.19 L524.08 246.45 L524.01 246.71 L523.94 246.97 L523.87 247.23 L523.81 247.48 L523.74 247.74 L523.67 248.00 L523.61 248.26 L523.54 248.52 L523.48 248.78 L523.42 249.03 L523.36 249.29 L523.29 249.55 L523.23 249.81 L523.17 250.07 L523.11 250.33 L523.05 250.59 L523.00 250.85 L522.94 251.11 L522.88 251.36 L522.82 251.62 L522.77 251.88 L522.71 252.14 L522.66 252.40 L522.61 252.66 L522.55 252.92 L522.50 253.18 L522.45 253.44 L522.40 253.70 L522.35 253.96 L522.30 254.22 L522.25 254.48 L522.20 254.74 L522.16 255.00 L522.11 255.25 L522.07 255.51 L522.02 255.77 L521.98 256.03 L521.93 256.29 L521.89 256.55 L521.85 256.81 L521.81 257.07 L521.77 257.33 L521.73 257.59 L521.69 257.85 L521.65 258.11 L521.61 258.37 L521.57 258.63 L521.54 258.89 L521.50 259.15 L521.47 259.41 L521.43 259.68 L521.40 259.94 L521.37 260.20 L521.33 260.46 L521.30 260.72 L521.27 260.98 L521.24 261.24 L521.21 261.50 L521.18 261.76 L521.16 262.02 L521.13 262.28 L521.10 262.54 L521.08 262.80 L521.05 263.06 L521.03 263.32 L521.00 263.58 L520.98 263.85 L520.96 264.11 L520.94 264.37 L520.92 264.63 L520.90 264.89 L520.88 265.15 L520.86 265.41 L520.84 265.67 L520.83 265.93 L520.81 266.20 L520.79 266.46 L520.78 266.72 L520.77 266.98 L520.75 267.24 L520.74 267.50 L520.73 267.76 L520.72 268.02 L520.71 268.29 L520.70 268.55 L520.69 268.81 L520.68 269.07 L520.67 269.33 L520.67 269.59 L520.66 269.86 L520.66 270.12 L520.65 270.38 L520.65 270.64 L520.64 270.90 L520.64 271.16 L520.64 271.43 L520.64 271.69 L520.64 271.95 L520.64 272.21 L520.64 272.47 L520.64 272.74 L520.65 273.00 L520.65 273.26 L520.66 273.52 L520.66 273.78 L520.67 274.05 L520.67 274.31 L520.68 274.57 L520.69 274.83 L520.70 275.09 L520.71 275.36 L520.72 275.62 L520.73 275.88 L520.74 276.14 L520.75 276.41 L520.77 276.67 L520.78 276.93 L520.79 277.19 L520.81 277.46 L520.83 277.72 L520.84 277.98 L520.86 278.24 L520.88 278.51 L520.90 278.77 L520.92 279.03 L520.94 279.29 L520.96 279.56 L520.98 279.82 L521.01 280.08 L521.03 280.34 L521.05 280.61 L521.08 280.87 L521.11 281.13 L521.13 281.39 L521.16 281.66 L521.19 281.92 M1229.27 197.77 L1230.71 198.65 L1232.15 199.52 L1233.58 200.39 L1235.01 201.26 L1236.43 202.14 L1237.84 203.01 L1239.24 203.88 L1240.64 204.76 L1242.03 205.63 L1243.41 206.51 L1244.79 207.38 L1246.15 208.26 L1247.52 209.13 L1248.87 210.01 L1250.22 210.88 L1251.55 211.76 L1252.89 212.64 L1254.21 213.51 L1255.53 214.39 L1256.83 215.27 L1258.14 216.14 L1259.43 217.02 L1260.72 217.90 L1261.99 218.77 L1263.26 219.65 L1264.53 220.53 L1265.78 221.41 L1267.03 222.29 L1268.27 223.17 L1269.50 224.05 L1270.72 224.92 L1271.94 225.80 L1273.14 226.68 L1274.34 227.56 L1275.53 228.44 L1276.72 229.32 L1277.89 230.20 L1279.06 231.08 L1280.22 231.96 L1281.37 232.84 L1282.51 233.72 L1283.64 234.61 L1284.76 235.49 L1285.88 236.37 L1286.99 237.25 L1288.09 238.13 L1289.18 239.01 L1290.26 239.89 L1291.34 240.78 L1292.40 241.66 L1293.46 242.54 L1294.51 243.42 L1295.54 244.30 L1296.58 245.19 L1297.60 246.07 L1298.61 246.95 L1299.61 247.84 L1300.61 248.72 L1301.60 249.60 L1302.57 250.48 L1303.54 251.37 L1304.50 252.25 L1305.45 253.14 L1306.40 254.02 L1307.33 254.90 L1308.25 255.79 L1309.17 256.67 L1310.07 257.55 L1310.97 258.44 L1311.86 259.32 L1312.73 260.21 L1313.60 261.09 L1314.46 261.98 L1315.31 262.86 L1316.16 263.75 L1316.99 264.63 L1317.81 265.52 L1318.62 266.40 L1319.43 267.29 L1320.22 268.17 L1321.01 269.06 L1321.78 269.94 L1322.55 270.83 L1323.31 271.71 L1324.06 272.60 L1324.79 273.48 L1325.52 274.37 L1326.24 275.25 L1326.95 276.14 L1327.65 277.03 L1328.34 277.91 L1329.02 278.80 L1329.69 279.68 L1330.35 280.57 L1331.01 281.46 L1331.65 282.34 L1332.28 283.23 L1332.90 284.11 L1333.52 285.00 L1334.12 285.89 L1334.71 286.77 L1335.30 287.66 L1335.87 288.55 L1336.43 289.43 L1336.99 290.32 L1337.53 291.21 L1338.07 292.09 L1338.59 292.98 L1339.11 293.87 L1339.61 294.75 L1340.11 295.64 L1340.59 296.53 L1341.07 297.41 L1341.53 298.30 L1341.99 299.19 L1342.43 300.07 L1342.87 300.96 L1343.30 301.85 L1343.71 302.74 L1344.12 303.62 L1344.51 304.51 L1344.90 305.40 L1345.27 306.28 L1345.64 307.17 L1345.99 308.06 L1346.34 308.95 L1346.67 309.83 L1347.00 310.72 L1347.31 311.61 L1347.62 312.49 L1347.91 313.38 L1348.20 314.27 L1348.47 315.16 L1348.74 316.04 L1348.99 316.93 L1349.23 317.82 L1349.47 318.71 L1349.69 319.59 L1349.91 320.48 L1350.11 321.37 L1350.30 322.25 L1350.49 323.14 L1350.66 324.03 L1350.82 324.92 L1350.97 325.80 L1351.12 326.69 L1351.25 327.58 L1351.37 328.47 L1351.48 329.35 L1351.59 330.24 L1351.68 331.13 L1351.76 332.01 L1351.83 332.90 L1351.89 333.79 L1351.94 334.68 L1351.98 335.56 L1352.01 336.45 L1352.03 337.34 L1352.04 338.22 L1352.04 339.11 L1352.03 340.00 L1352.01 340.88 L1351.98 341.77 L1351.94 342.66 L1351.89 343.55 L1351.83 344.43 L1351.76 345.32 L1351.67 346.21 L1351.58 347.09 L1351.48 347.98 L1351.37 348.87 L1351.25 349.75 L1351.11 350.64 L1350.97 351.53 L1350.82 352.41 L1350.66 353.30 L1350.48 354.18 L1350.30 355.07 L1350.11 355.96 L1349.90 356.84 L1349.69 357.73 L1349.47 358.62 L1349.23 359.50 L1348.99 360.39 L1348.73 361.27 L1348.47 362.16 L1348.20 363.05 L1347.91 363.93 L1347.62 364.82 L1347.31 365.70 L1347.00 366.59 L1346.68 367.47 L1346.34 368.36 L1346.00 369.25 L1345.64 370.13 L1345.28 371.02 L1344.90 371.90 L1344.52 372.79 L1344.13 373.67 L1343.72 374.56 L1343.31 375.44 L1342.89 376.33 L1342.45 377.21 L1342.01 378.10 L1341.56 378.98 L1341.09 379.86 L1340.62 380.75 L1340.14 381.63 L1339.64 382.52 L1339.14 383.40 L1338.63 384.29 L1338.11 385.17 L1337.58 386.05 L1337.04 386.94 L1336.48 387.82 L1335.92 388.70 L1335.35 389.59 L1334.77 390.47 L1334.18 391.35 L1333.59 392.24 L1332.98 393.12 L1332.36 394.00 L1331.73 394.89 L1331.09 395.77 L1330.45 396.65 L1329.79 397.53 L1329.12 398.41 L1328.45 399.30 L1327.76 400.18 L1327.07 401.06 L1326.37 401.94 L1325.65 402.82 L1324.93 403.70 L1324.20 404.59 L1323.46 405.47 L1322.71 406.35 L1321.95 407.23 L1321.18 408.11 L1320.41 408.99 L1319.62 409.87 L1318.82 410.75 L1318.02 411.63 L1317.20 412.51 L1316.38 413.39 L1315.55 414.27 L1314.71 415.15 L1313.86 416.03 L1313.00 416.91 L1312.13 417.78 L1311.26 418.66 L1310.37 419.54 L1309.48 420.42 L1308.57 421.30 L1307.66 422.17 L1306.74 423.05 L1305.81 423.93 L1304.87 424.81 L1303.93 425.68 L1302.97 426.56 L1302.01 427.44 L1301.04 428.31 L1300.05 429.19 L1299.07 430.06 L1298.07 430.94 L1297.06 431.81 L1296.05 432.69 L1295.02 433.56 L1293.99 434.44 L1292.95 435.31 L1291.91 436.19 L1290.85 437.06 L1289.79 437.93 L1288.72 438.81 L1287.64 439.68 L1286.55 440.55 L1285.45 441.42 L1284.35 442.30 L1283.24 443.17 L1282.12 444.04 L1280.99 444.91 L1279.85 445.78 L1278.71 446.65 L1277.56 447.52 L1276.40 448.39 L1275.24 449.26 L1274.06 450.13 L1272.88 451.00 L1271.69 451.87 L1270.50 452.74 L1269.30 453.60 L1268.09 454.47 L1266.87 455.34 L1265.64 456.20 L1264.41 457.07 L1263.17 457.94 L1261.93 458.80 L1260.67 459.67 L1259.41 460.53 L1258.15 461.39 M1355.00 249.00 C1356.83 259.33 1366.00 290.83 1366.00 311.00 C1366.00 331.17 1364.83 350.50 1355.00 370.00 C1345.17 389.50 1315.00 418.33 1307.00 428.00 M1406.00 234.00 C1409.67 244.42 1426.17 276.33 1428.00 296.50 C1429.83 316.67 1426.67 335.42 1417.00 355.00 C1407.33 374.58 1390.08 395.67 1370.00 414.00 C1349.92 432.33 1308.75 456.50 1296.50 465.00 M570.00 266.70 C565.83 272.25 550.55 291.12 545.00 300.00 C539.45 308.88 538.37 311.67 536.70 320.00 C535.03 328.33 534.73 341.95 535.00 350.00 C535.27 358.05 534.13 361.92 538.30 368.30 C542.47 374.68 548.05 378.85 560.00 388.30 C571.95 397.75 601.67 418.88 610.00 425.00 M553.30 280.00 C549.42 286.95 534.43 307.82 530.00 321.70 C525.57 335.58 526.15 353.58 526.70 363.30 C527.25 373.02 529.13 374.43 533.30 380.00 C537.47 385.57 544.47 389.75 551.70 396.70 C558.93 403.65 572.53 417.53 576.70 421.70 M338.70 373.00 C340.38 374.45 343.03 377.62 348.80 381.70 C354.57 385.78 363.92 391.97 373.30 397.50 C382.68 403.03 395.47 409.83 405.10 414.90 C414.73 419.97 421.95 423.57 431.10 427.90 C440.25 432.23 449.17 436.33 460.00 440.90 C470.83 445.47 485.27 451.22 496.10 455.30 C506.93 459.38 514.35 461.78 525.00 465.40 C535.65 469.02 554.17 475.07 560.00 477.00" fill="none" stroke="#707070" stroke-width="1.2" stroke-dasharray="1.2 2.4"/>
<path d="M1463.20 266.52 L1462.44 266.31 L1461.67 266.09 L1460.89 265.86 L1460.10 265.61 L1459.31 265.35 L1458.51 265.08 L1457.70 264.79 L1456.89 264.49 L1456.07 264.17 L1455.25 263.84 L1454.42 263.50 L1453.59 263.14 L1452.75 262.78 L1451.91 262.40 L1451.06 262.01 L1450.22 261.60 L1449.36 261.19 L1448.51 260.76 L1447.65 260.32 L1446.79 259.88 L1445.93 259.42 L1445.07 258.95 L1444.21 258.47 L1443.35 257.98 L1442.48 257.48 L1441.62 256.98 L1440.75 256.46 L1439.89 255.94 L1439.03 255.41 L1438.17 254.87 L1437.31 254.32 L1436.45 253.77 L1435.60 253.21 L1434.75 252.64 L1433.90 252.07 L1433.06 251.49 L1432.22 250.91 L1431.39 250.32 L1430.56 249.72 L1429.73 249.13 L1428.91 248.53 L1428.10 247.92 L1427.30 247.32 L1426.50 246.71 L1425.71 246.10 L1424.93 245.48 L1424.16 244.87 L1423.39 244.25 L1422.64 243.64 L1421.89 243.02 L1421.16 242.41 L1420.44 241.79 L1419.73 241.18 L1419.03 240.57 L1418.35 239.96 L1417.68 239.35 L1417.02 238.75 L1416.38 238.15 L1415.75 237.55 L1415.14 236.96 L1414.54 236.37 L1413.96 235.79 L1413.40 235.21 L1412.86 234.64 L1412.34 234.07 L1411.83 233.51 L1411.34 232.96 L1410.88 232.41 L1410.43 231.88 L1410.01 231.35 L1409.60 230.83 L1409.22 230.32 L1408.87 229.82 L1408.53 229.33 L1408.22 228.85 L1407.94 228.37 L1407.67 227.91 L1407.44 227.47 L1407.23 227.03 L1407.05 226.60 L1406.89 226.19 L1406.76 225.79 L1406.66 225.41 L1406.58 225.03 L1406.53 224.67 L1406.51 224.33 L1406.52 223.99 L1406.56 223.68 L1406.63 223.37 L1406.73 223.09 L1406.86 222.81 L1407.02 222.55 L1407.20 222.31 L1407.42 222.09 L1407.67 221.88 M396.46 221.68 L397.33 221.50 L398.18 221.34 L399.01 221.20 L399.81 221.07 L400.59 220.96 L401.35 220.87 L402.08 220.79 L402.79 220.73 L403.47 220.69 L404.13 220.66 L404.76 220.65 L405.36 220.66 L405.93 220.69 L406.48 220.73 L407.00 220.79 L407.49 220.87 L407.95 220.96 L408.38 221.07 L408.79 221.20 L409.16 221.34 L409.51 221.50 L409.82 221.68 L410.11 221.88 L410.36 222.09 L410.59 222.31 L410.79 222.55 L410.96 222.81 L411.10 223.09 L411.21 223.37 L411.29 223.68 L411.34 223.99 L411.37 224.33 L411.36 224.67 L411.33 225.03 L411.27 225.41 L411.18 225.79 L411.07 226.19 L410.93 226.60 L410.76 227.03 L410.57 227.47 L410.35 227.91 L410.11 228.37 L409.84 228.85 L409.55 229.33 L409.24 229.82 L408.90 230.32 L408.54 230.83 L408.16 231.35 L407.75 231.88 L407.33 232.41 L406.88 232.96 L406.42 233.51 L405.94 234.07 L405.43 234.64 L404.91 235.21 L404.37 235.79 L403.81 236.37 L403.24 236.96 L402.65 237.55 L402.04 238.15 L401.42 238.75 L400.79 239.35 L400.14 239.96 L399.48 240.57 L398.80 241.18 L398.11 241.79 L397.41 242.41 L396.70 243.02 L395.98 243.64 L395.24 244.25 L394.50 244.87 L393.75 245.48 L392.99 246.10 L392.22 246.71 L391.44 247.32 L390.66 247.92 L389.86 248.53 L389.06 249.13 L388.26 249.72 L387.45 250.32 L386.63 250.91 L385.81 251.49 L384.98 252.07 L384.15 252.64 L383.32 253.21 L382.48 253.77 L381.64 254.32 L380.80 254.87 L379.96 255.41 L379.11 255.94 L378.26 256.46 L377.41 256.98 L376.56 257.48 L375.71 257.98 L374.86 258.47 L374.01 258.95 L373.17 259.42 L372.32 259.88 L371.47 260.32 L370.63 260.76 L369.78 261.19 L368.94 261.60 L368.10 262.01 L367.27 262.40 L366.44 262.78 L365.61 263.14 L364.79 263.50 L363.97 263.84 L363.15 264.17 L362.34 264.49 L361.54 264.79 L360.74 265.08 L359.95 265.35 L359.16 265.61 L358.38 265.86 L357.61 266.09 L356.84 266.31 L356.08 266.52 L355.33 266.70 L354.59 266.88 L353.86 267.04 L353.14 267.18 L352.43 267.31 L351.72 267.43 L351.03 267.53 L350.35 267.61 L349.68 267.68 L349.02 267.74 L348.37 267.77 L347.74 267.80 L347.11 267.81 L346.50 267.80 L345.91 267.77 L345.33 267.74 L344.76 267.68 L344.21 267.61 L343.67 267.53 L343.15 267.43 L342.65 267.31 L342.16 267.18 L341.69 267.04 L341.23 266.88 L340.80 266.70" fill="none" stroke="#52c569" stroke-width="2.08"/>
<path d="M1205.66 161.41 L1206.69 162.02 L1207.70 162.62 L1208.69 163.23 L1209.65 163.83 L1210.59 164.43 L1211.49 165.02 L1212.38 165.61 L1213.23 166.19 L1214.06 166.77 L1214.86 167.34 L1215.63 167.91 L1216.37 168.47 L1217.08 169.02 L1217.77 169.57 L1218.42 170.11 L1219.05 170.64 L1219.65 171.16 L1220.21 171.68 L1220.75 172.19 L1221.25 172.69 L1221.73 173.18 L1222.17 173.66 L1222.58 174.14 L1222.97 174.60 L1223.32 175.05 L1223.64 175.50 L1223.93 175.93 L1224.19 176.35 L1224.42 176.76 L1224.62 177.16 L1224.79 177.55 L1224.93 177.93 L1225.04 178.30 L1225.12 178.65 L1225.17 179.00 L1225.19 179.33 L1225.18 179.65 L1225.14 179.95 L1225.08 180.25 L1224.98 180.53 L1224.86 180.79 L1224.70 181.05 L1224.52 181.29 L1224.31 181.52 L1224.08 181.74 L1223.81 181.94 L1223.52 182.13 L1223.21 182.30 L1222.87 182.46 L1222.50 182.61 L1222.10 182.75 L1221.68 182.87 L1221.24 182.97 L1220.77 183.06 L1220.28 183.14 L1219.76 183.21 L1219.23 183.25 L1218.66 183.29 L1218.08 183.31 L1217.47 183.32 L1216.85 183.31 L1216.20 183.29 L1215.53 183.25 L1214.84 183.21 L1214.12 183.14 L1213.39 183.06 L1212.65 182.97 L1211.88 182.87 L1211.09 182.75 L1210.29 182.61 L1209.47 182.46 L1208.63 182.30 L1207.77 182.13 L1206.90 181.94 L1206.02 181.74 L1205.12 181.52 L1204.20 181.29 L1203.27 181.05 L1202.33 180.79 L1201.37 180.53 L1200.40 180.25 L1199.42 179.95 L1198.43 179.65 L1197.43 179.33 L1196.41 179.00 L1195.39 178.65 L1194.35 178.30 L1193.31 177.93 L1192.25 177.55 L1191.19 177.16 L1190.12 176.76 L1189.05 176.35 L1187.97 175.93 L1186.88 175.50 L1185.78 175.05 L1184.68 174.60 L1183.58 174.14 L1182.47 173.66 L1181.36 173.18 L1180.24 172.69 L1179.13 172.19 L1178.01 171.68 L1176.89 171.16 L1175.77 170.64 L1174.65 170.11 L1173.53 169.57 L1172.41 169.02 L1171.29 168.47 L1170.17 167.91 L1169.06 167.34 L1167.95 166.77 L1166.84 166.19 L1165.74 165.61 L1164.65 165.02 L1163.55 164.43 L1162.47 163.83 L1161.39 163.23 L1160.32 162.62 L1159.26 162.02 L1158.21 161.41 L1157.17 160.80 L1156.13 160.18 L1155.11 159.57 L1154.10 158.95 L1153.10 158.33 L1152.12 157.72 L1151.14 157.10 L1150.19 156.48 L1149.24 155.87 L1148.31 155.25 L1147.40 154.64 L1146.51 154.03 L1145.63 153.42 L1144.77 152.82 L1143.93 152.22 L1143.11 151.62 L1142.31 151.03 L1141.54 150.44 L1140.78 149.86 L1140.05 149.29 L1139.34 148.72 L1138.65 148.15 L1137.99 147.60 L1137.35 147.05 L1136.74 146.51 L1136.15 145.98 L1135.60 145.46 L1135.07 144.95 L1134.57 144.45 L1134.10 143.96 L1133.66 143.48 L1133.24 143.01 L1132.87 142.55 L1132.52 142.11 L1132.20 141.67 L1131.92 141.25 L1131.67 140.85 L1131.46 140.46 L1131.27 140.08 L1131.13 139.72 L1131.02 139.37 L1130.94 139.04 L1130.91 138.72 L1130.90 138.42 L1130.94 138.14 L1131.01 137.87 L1131.12 137.62 L1131.27 137.39 L1131.45 137.18 L1131.67 136.98 L1131.93 136.80 L1132.23 136.64 L1132.57 136.50 L1132.94 136.38 L1133.36 136.27 L1133.81 136.19 L1134.29 136.12 L1134.82 136.07 L1135.38 136.04 L1135.98 136.03 L1136.62 136.04 L1137.29 136.07 L1137.99 136.12 L1138.74 136.19 L1139.51 136.27 L1140.32 136.38 L1141.17 136.50 L1142.04 136.64 L1142.95 136.80 L1143.89 136.98 L1144.85 137.18 L1145.85 137.39 L1146.88 137.62 L1147.93 137.87 L1149.01 138.14 L1150.11 138.42 L1151.24 138.72 L1152.39 139.04 L1153.56 139.37 L1154.76 139.72 L1155.97 140.08 L1157.20 140.46 L1158.45 140.85 L1159.72 141.25 L1161.00 141.67 L1162.29 142.11 L1163.59 142.55 L1164.91 143.01 L1166.24 143.48 L1167.57 143.96 L1168.91 144.45 L1170.26 144.95 L1171.61 145.46 L1172.97 145.98 L1174.33 146.51 L1175.69 147.05 L1177.05 147.60 L1178.40 148.15 L1179.76 148.72 L1181.11 149.29 L1182.45 149.86 L1183.79 150.44 L1185.13 151.03 L1186.45 151.62 L1187.76 152.22 L1189.07 152.82 L1190.36 153.42 L1191.64 154.03 L1192.90 154.64 L1194.15 155.25 L1195.39 155.87 L1196.61 156.48 L1197.81 157.10 L1198.99 157.72 L1200.15 158.33 L1201.30 158.95 L1202.42 159.57 L1203.52 160.18 L1204.60 160.80 L1205.66 161.41" fill="none" stroke="#2ab07f" stroke-width="2.08"/>
<path d="M512.03 344.17 L512.21 344.82 L512.38 345.48 L512.54 346.13 L512.69 346.78 L512.82 347.43 L512.94 348.08 L513.05 348.73 L513.15 349.37 L513.23 350.01 L513.30 350.65 L513.36 351.28 L513.40 351.91 L513.43 352.53 L513.44 353.15 L513.44 353.76 L513.43 354.36 L513.40 354.96 L513.36 355.55 L513.31 356.14 L513.24 356.71 L513.15 357.28 L513.05 357.84 L512.94 358.39 L512.81 358.93 L512.67 359.46 L512.51 359.98 L512.33 360.49 L512.14 360.99 L511.94 361.48 L511.71 361.96 L511.48 362.42 L511.23 362.87 L510.96 363.31 L510.68 363.74 L510.38 364.15 L510.06 364.55 L509.73 364.93 L509.39 365.30 L509.03 365.66 L508.65 366.00 L508.26 366.33 L507.85 366.64 L507.43 366.94 L506.99 367.22 L506.54 367.48 L506.07 367.73 L505.59 367.96 L505.10 368.18 L504.59 368.37 L504.06 368.56 L503.52 368.72 L502.97 368.87 L502.41 369.00 L501.83 369.11 L501.24 369.21 L500.64 369.29 L500.02 369.35 L499.40 369.40 L498.76 369.42 L498.11 369.43 L497.45 369.42 L496.78 369.40 L496.10 369.35 L495.42 369.29 L494.72 369.21 L494.02 369.11 L493.31 369.00 L492.59 368.87 L491.87 368.72 L491.14 368.56 L490.40 368.37 L489.66 368.18 L488.92 367.96 L488.17 367.73 L487.43 367.48 L486.67 367.22 L485.92 366.94 L485.17 366.64 L484.42 366.33 L483.67 366.00 L482.92 365.66 L482.17 365.30 L481.42 364.93 L480.68 364.55 L479.95 364.15 L479.21 363.74 L478.49 363.31 L477.77 362.87 L477.06 362.42 L476.35 361.96 L475.66 361.48 L474.97 360.99 L474.29 360.49 L473.63 359.98 L472.97 359.46 L472.33 358.93 L471.70 358.39 L471.09 357.84 L470.48 357.28 L469.90 356.71 L469.32 356.14 L468.76 355.55 L468.22 354.96 L467.70 354.36 L467.19 353.76 L466.70 353.15 L466.23 352.53 L465.78 351.91 L465.35 351.28 L464.93 350.65 L464.54 350.01 L464.16 349.37 L463.81 348.73 L463.48 348.08 L463.17 347.43 L462.88 346.78 L462.61 346.13 L462.37 345.48 L462.14 344.82 L461.94 344.17 L461.76 343.52 L461.61 342.86 L461.47 342.21 L461.36 341.56 L461.28 340.91 L461.21 340.27 L461.17 339.63 L461.15 338.99 L461.15 338.35 L461.18 337.72 L461.22 337.10 L461.29 336.47 L461.39 335.86 L461.50 335.25 L461.64 334.64 L461.79 334.05 L461.97 333.46 L462.17 332.87 L462.39 332.30 L462.63 331.73 L462.89 331.18 L463.17 330.63 L463.46 330.09 L463.78 329.56 L464.12 329.04 L464.47 328.53 L464.84 328.03 L465.23 327.54 L465.63 327.06 L466.05 326.60 L466.49 326.15 L466.94 325.71 L467.40 325.28 L467.88 324.87 L468.37 324.46 L468.88 324.08 L469.40 323.70 L469.93 323.34 L470.47 323.00 L471.02 322.67 L471.58 322.35 L472.15 322.05 L472.73 321.76 L473.32 321.49 L473.92 321.23 L474.52 320.99 L475.13 320.77 L475.75 320.56 L476.38 320.37 L477.01 320.19 L477.64 320.03 L478.28 319.89 L478.92 319.76 L479.56 319.65 L480.21 319.56 L480.86 319.49 L481.51 319.43 L482.16 319.38 L482.82 319.36 L483.47 319.35 L484.12 319.36 L484.78 319.38 L485.43 319.43 L486.08 319.49 L486.73 319.56 L487.37 319.65 L488.02 319.76 L488.66 319.89 L489.30 320.03 L489.93 320.19 L490.56 320.37 L491.19 320.56 L491.81 320.77 L492.42 320.99 L493.03 321.23 L493.64 321.49 L494.24 321.76 L494.83 322.05 L495.42 322.35 L496.00 322.67 L496.58 323.00 L497.14 323.34 L497.70 323.70 L498.26 324.08 L498.80 324.46 L499.34 324.87 L499.87 325.28 L500.39 325.71 L500.90 326.15 L501.41 326.60 L501.91 327.06 L502.39 327.54 L502.87 328.03 L503.34 328.53 L503.80 329.04 L504.26 329.56 L504.70 330.09 L505.13 330.63 L505.55 331.18 L505.97 331.73 L506.37 332.30 L506.76 332.87 L507.15 333.46 L507.52 334.05 L507.88 334.64 L508.24 335.25 L508.58 335.86 L508.91 336.47 L509.23 337.10 L509.54 337.72 L509.84 338.35 L510.13 338.99 L510.41 339.63 L510.67 340.27 L510.93 340.91 L511.17 341.56 L511.40 342.21 L511.62 342.86 L511.83 343.52 L512.03 344.17" fill="none" stroke="#c2df23" stroke-width="2.08"/>
<path d="M852.00 55.00 L850.78 55.24 L849.53 55.51 L848.23 55.79 L846.90 56.09 L845.53 56.42 L844.13 56.76 L842.69 57.12 L841.21 57.50 L839.70 57.90 L838.16 58.31 L836.59 58.74 L834.98 59.18 L833.35 59.64 L831.69 60.11 L830.00 60.59 L828.28 61.09 L826.54 61.60 L824.77 62.12 L822.98 62.65 L821.17 63.19 L819.34 63.75 L817.48 64.31 L815.61 64.88 L813.71 65.46 L811.80 66.05 L809.87 66.64 L807.92 67.25 L805.96 67.86 L803.98 68.48 L801.99 69.10 L799.98 69.74 L797.96 70.37 L795.93 71.02 L793.88 71.67 L791.82 72.32 L789.76 72.98 L787.68 73.64 L785.59 74.31 L783.50 74.99 L781.39 75.66 L779.28 76.35 L777.15 77.03 L775.02 77.72 L772.89 78.42 L770.74 79.11 L768.59 79.81 L766.44 80.52 L764.27 81.22 L762.11 81.93 L759.93 82.65 L757.76 83.36 L755.57 84.08 L753.39 84.80 L751.20 85.52 L749.00 86.25 L746.81 86.98 L744.61 87.71 L742.40 88.44 L740.20 89.17 L737.99 89.91 L735.78 90.64 L733.57 91.38 L731.35 92.13 L729.14 92.87 L726.92 93.61 L724.70 94.36 L722.48 95.11 L720.26 95.86 L718.04 96.61 L715.82 97.36 L713.60 98.11 L711.37 98.87 L709.15 99.62 L706.93 100.38 L704.71 101.14 L702.49 101.90 L700.26 102.66 L698.04 103.42 L695.82 104.19 L693.61 104.95 L691.39 105.72 L689.17 106.48 L686.95 107.25 L684.74 108.02 L682.53 108.78 L680.32 109.55 L678.11 110.32 L675.90 111.10 L673.69 111.87 L671.49 112.64 L669.29 113.41 L667.09 114.19 L664.89 114.96 L662.69 115.74 L660.50 116.52 L658.31 117.29 L656.12 118.07 L653.94 118.85 L651.76 119.63 L649.58 120.41 L647.40 121.19 L645.23 121.97 L643.06 122.75 L640.89 123.53 L638.73 124.31 L636.57 125.10 L634.41 125.88 L632.26 126.66 L630.11 127.45 L627.97 128.23 L625.83 129.02 L623.69 129.80 L621.55 130.59 L619.42 131.37 L617.30 132.16 L615.18 132.95 L613.06 133.74 L610.95 134.52 L608.84 135.31 L606.73 136.10 L604.63 136.89 L602.54 137.68 L600.44 138.47 L598.36 139.26 L596.28 140.05 L594.20 140.84 L592.13 141.63 L590.06 142.42 L588.00 143.21 L585.94 144.01 L583.89 144.80 L581.84 145.59 L579.80 146.38 L577.76 147.18 L575.73 147.97 L573.70 148.76 L571.68 149.56 L569.66 150.35 L567.65 151.15 L565.65 151.94 L563.65 152.73 L561.65 153.53 L559.67 154.33 L557.68 155.12 L555.71 155.92 L553.74 156.71 L551.77 157.51 L549.81 158.31 L547.86 159.10 L545.91 159.90 L543.97 160.70 L542.04 161.49 L540.11 162.29 L538.19 163.09 L536.27 163.89 L534.36 164.68 L532.46 165.48 L530.56 166.28 L528.67 167.08 L526.79 167.88 L524.91 168.68 L523.04 169.47 L521.18 170.27 L519.32 171.07 L517.47 171.87 L515.62 172.67 L513.79 173.47 L511.96 174.27 L510.13 175.07 L508.32 175.87 L506.51 176.67 L504.70 177.47 L502.91 178.27 L501.12 179.07 L499.34 179.87 L497.56 180.67 L495.80 181.48 L494.04 182.28 L492.29 183.08 L490.54 183.88 L488.80 184.68 L487.07 185.48 L485.35 186.28 L483.64 187.09 L481.93 187.89 L480.23 188.69 L478.54 189.49 L476.85 190.29 L475.17 191.10 L473.50 191.90 L471.84 192.70 L470.19 193.50 L468.54 194.31 L466.91 195.11 L465.28 195.91 L463.65 196.72 L462.04 197.52 L460.43 198.32 L458.83 199.13 L457.24 199.93 L455.66 200.73 L454.09 201.54 L452.52 202.34 L450.97 203.14 L449.42 203.95 L447.88 204.75 L446.34 205.56 L444.82 206.36 L443.30 207.16 L441.80 207.97 L440.30 208.77 L438.81 209.58 L437.32 210.38 L435.85 211.19 L434.39 211.99 L432.93 212.79 L431.48 213.60 L430.04 214.40 L428.61 215.21 L427.19 216.01 L425.78 216.82 L424.37 217.62 L422.98 218.43 L421.59 219.23 L420.22 220.04 L418.85 220.84 L417.49 221.65 L416.14 222.45 L414.80 223.26 L413.46 224.07 L412.14 224.87 L410.83 225.68 L409.52 226.48 L408.22 227.29 L406.94 228.09 L405.66 228.90 L404.39 229.71 L403.13 230.51 L401.88 231.32 L400.64 232.12 L399.41 232.93 L398.19 233.73 L396.97 234.54 L395.77 235.35 L394.58 236.15 L393.39 236.96 L392.22 237.77 L391.05 238.57 L389.89 239.38 L388.75 240.18 L387.61 240.99 L386.48 241.80 L385.37 242.60 L384.26 243.41 L383.16 244.22 L382.07 245.02 L380.99 245.83" fill="none" stroke="#52c569" stroke-width="1.39" stroke-dasharray="1.39 2.29"/>
<path d="M852.00 55.00 L854.04 54.63 L855.96 54.33 L857.76 54.10 L859.43 53.95 L860.99 53.87 L862.42 53.87 L863.74 53.95 L864.95 54.10 L866.06 54.33 L867.08 54.63 L868.00 55.00" fill="none" stroke="#52c569" stroke-width="1.6"/>
<path d="M911.80 130.30 L911.66 129.49 L911.51 128.67 L911.37 127.86 L911.22 127.05 L911.08 126.24 L910.93 125.42 L910.79 124.61 L910.64 123.80 L910.50 122.99 L910.35 122.17 L910.21 121.36 L910.06 120.55 L909.91 119.74 L909.77 118.92 L909.62 118.11 L909.47 117.30 L909.33 116.49 L909.18 115.68 L909.03 114.86 L908.89 114.05 L908.74 113.24 L908.59 112.43 L908.44 111.62 L908.30 110.81 L908.15 110.00 L908.00 109.18 L907.85 108.37 L907.71 107.56 L907.56 106.75 L907.41 105.94 L907.26 105.13 L907.11 104.32 L906.96 103.51 L906.82 102.70 L906.67 101.89 L906.52 101.08 L906.37 100.27 L906.22 99.46 L906.07 98.65 L905.92 97.84 L905.77 97.03 L905.62 96.22 L905.48 95.41 L905.33 94.60 L905.18 93.79 L905.03 92.99 L904.88 92.18 L904.73 91.37 L904.58 90.56 L904.43 89.75 L904.28 88.95 L904.13 88.14 L903.98 87.33 L903.83 86.52 L903.68 85.72 L903.53 84.91 L903.38 84.11 L903.23 83.30 L903.08 82.49 L902.93 81.69 L902.78 80.88 L902.63 80.08 L902.48 79.28 L902.33 78.47 L902.18 77.67 L902.03 76.87 L901.88 76.06 L901.73 75.26 L901.58 74.46 L901.43 73.66 L901.28 72.86 L901.14 72.06 L900.99 71.26 L900.84 70.46 L900.69 69.66 L900.54 68.87 L900.39 68.07 L900.24 67.27 L900.09 66.48 L899.94 65.69 L899.79 64.89 L899.64 64.10 L899.49 63.31 L899.34 62.52 L899.19 61.73 L899.04 60.94 L898.89 60.16 L898.74 59.37 L898.59 58.59 L898.44 57.81 L898.29 57.03 L898.14 56.25 L897.98 55.48 L897.83 54.71 L897.68 53.94 L897.53 53.17 L897.38 52.41 L897.22 51.65 L897.07 50.89 L896.92 50.14 L896.76 49.39 L896.60 48.64 L896.45 47.91 L896.29 47.17 L896.13 46.45 L895.96 45.73 L895.80 45.02 L895.63 44.33 L895.45 43.64 L895.28 42.96 L895.09 42.30 L894.90 41.65 L894.70 41.03 L894.49 40.42 L894.26 39.84 L894.02 39.28 L893.76 38.76 L893.47 38.27 L893.15 37.82 L892.79 37.42 L892.39 37.07 L891.92 36.78 L891.39 36.55 L890.79 36.39 L890.09 36.30 L889.29 36.28 L888.39 36.34 L887.38 36.47 L886.26 36.67 L885.03 36.94 L883.70 37.26 L882.26 37.64 L880.73 38.07 L879.12 38.54 L877.43 39.05 L875.67 39.60 L873.85 40.17 L871.98 40.76 L870.05 41.38 L868.08 42.02 L866.08 42.68 L864.04 43.35 L861.97 44.03 L859.87 44.72 L857.75 45.43 L855.61 46.14 L853.45 46.86 L851.27 47.59 L849.08 48.33 L846.87 49.07 L844.65 49.82 L842.42 50.57 L840.18 51.32 L837.93 52.08 L835.67 52.84 L833.41 53.61 L831.14 54.38 L828.86 55.15 L826.58 55.92 L824.29 56.70 L822.00 57.48 L819.71 58.26 L817.41 59.04 L815.11 59.82 L812.81 60.61 L810.50 61.39 L808.20 62.18 L805.89 62.97 L803.58 63.76 L801.27 64.55 L798.95 65.35 L796.64 66.14 L794.33 66.93 L792.01 67.73 L789.70 68.53 L787.38 69.32 L785.07 70.12 L782.76 70.92 L780.44 71.72 L778.13 72.52 L775.82 73.32 L773.51 74.12 L771.20 74.92 L768.89 75.72 L766.58 76.52 L764.27 77.33 L761.97 78.13 L759.67 78.93 L757.36 79.74 L755.06 80.54 L752.77 81.35 L750.47 82.15 L748.17 82.96 L745.88 83.76 L743.59 84.57 L741.30 85.37 L739.02 86.18 L736.73 86.99 L734.45 87.79 L732.17 88.60 L729.90 89.41 L727.62 90.22 L725.35 91.02 L723.08 91.83 L720.82 92.64 L718.56 93.45 L716.30 94.26 L714.04 95.07 L711.79 95.87 L709.54 96.68 L707.29 97.49 L705.05 98.30 L702.81 99.11 L700.57 99.92 L698.34 100.73 L696.11 101.54 L693.88 102.35 L691.66 103.16 L689.44 103.97 L687.22 104.78 L685.01 105.59 L682.80 106.40 L680.60 107.22 L678.40 108.03 L676.20 108.84 L674.01 109.65 L671.82 110.46 L669.64 111.27 L667.46 112.08 L665.28 112.89 L663.11 113.71 L660.95 114.52 L658.78 115.33 L656.63 116.14 L654.47 116.95 L652.32 117.77 L650.18 118.58 L648.04 119.39 L645.90 120.20 L643.77 121.01 L641.65 121.83 L639.53 122.64 L637.41 123.45 L635.30 124.26 L633.19 125.08 L631.09 125.89 L628.99 126.70 L626.90 127.51 L624.82 128.33 L622.73 129.14 L620.66 129.95 L618.59 130.77 L616.52 131.58 L614.46 132.39 L612.41 133.21 L610.36 134.02 L608.31 134.83 L606.28 135.64 L604.24 136.46 L602.22 137.27 L600.19 138.08 L598.18 138.90 L596.17 139.71 L594.16 140.52 L592.16 141.34 L590.17 142.15 L588.18 142.97 L586.20 143.78 L584.23 144.59 L582.26 145.41 L580.30 146.22 L578.34 147.03 L576.39 147.85 L574.44 148.66 L572.50 149.48 L570.57 150.29 L568.64 151.10 L566.72 151.92 L564.81 152.73 L562.90 153.54 L561.00 154.36 L559.11 155.17 L557.22 155.99 L555.34 156.80 L553.46 157.62 L551.60 158.43 L549.73 159.24 L547.88 160.06 L546.03 160.87 L544.19 161.69 L542.35 162.50 L540.53 163.31 L538.71 164.13 L536.89 164.94 L535.08 165.76 L533.28 166.57 L531.49 167.39 L529.71 168.20 L527.93 169.01 L526.15 169.83 L524.39 170.64 L522.63 171.46 L520.88 172.27 L519.14 173.09 L517.40 173.90 L515.67 174.72 L513.95 175.53 L512.24 176.34 L510.53 177.16 L508.83 177.97 L507.14 178.79 L505.46 179.60 L503.78 180.42 L502.11 181.23 L500.45 182.05 L498.80 182.86 L497.15 183.68 L495.51 184.49 L493.88 185.31 L492.26 186.12 L490.64 186.94 L489.04 187.75 L487.44 188.56 L485.85 189.38 L484.26 190.19 L482.69 191.01 L481.12 191.82 L479.56 192.64 L478.01 193.45 L476.47 194.27 L474.93 195.08 L473.41 195.90 L471.89 196.71 L470.38 197.53 L468.87 198.34 L467.38 199.16 L465.89 199.97 L464.42 200.79 L462.95 201.60 L461.49 202.42 L460.03 203.23 L458.59 204.05 L457.16 204.86 L455.73 205.68 L454.31 206.49 L452.90 207.31 L451.50 208.12 L450.11 208.94 L448.72 209.75 L447.35 210.57 L445.98 211.38 L444.62 212.20 L443.27 213.01 L441.93 213.83 L440.60 214.64 L439.28 215.46 L437.96 216.27 L436.66 217.09 L435.36 217.90 L434.08 218.72 L432.80 219.53 L431.53 220.35 L430.27 221.16 L429.02 221.98 L427.77 222.79 L426.54 223.61 L425.32 224.42 L424.10 225.24 L422.90 226.05 L421.70 226.87 L420.51 227.68 L419.33 228.50 L418.16 229.31 L417.00 230.13 L415.85 230.94 L414.71 231.76 L413.58 232.57 L412.46 233.39 L411.34 234.21 L410.24 235.02 L409.15 235.84 L408.06 236.65 L406.99 237.47 L405.92 238.28 L404.86 239.10 L403.82 239.91 L402.78 240.73 L401.75 241.54 L400.73 242.36 L399.72 243.17 L398.72 243.99 L397.73 244.80" fill="none" stroke="#52c569" stroke-width="1.39" stroke-dasharray="1.39 2.29"/>
<path d="M911.80 130.30 L911.98 131.34 L912.17 132.37 L912.35 133.41 L912.53 134.44 L912.71 135.48 L912.90 136.52 L913.08 137.55 L913.26 138.59 L913.44 139.63 L913.62 140.66 L913.80 141.70" fill="none" stroke="#52c569" stroke-width="1.6"/>
<path d="M1038.90 103.30 L1039.73 103.31 L1040.58 103.33 L1041.44 103.35 L1042.31 103.39 L1043.20 103.43 L1044.11 103.48 L1045.03 103.54 L1045.96 103.61 L1046.91 103.68 L1047.87 103.76 L1048.84 103.86 L1049.84 103.95 L1050.84 104.06 L1051.86 104.18 L1052.90 104.30 L1053.95 104.43 L1055.01 104.57 L1056.09 104.72 L1057.18 104.88 L1058.29 105.04 L1059.41 105.21 L1060.55 105.39 L1061.70 105.57 L1062.87 105.77 L1064.05 105.97 L1065.24 106.18 L1066.45 106.39 L1067.67 106.62 L1068.91 106.85 L1070.16 107.09 L1071.43 107.33 L1072.70 107.58 L1074.00 107.84 L1075.30 108.11 L1076.62 108.38 L1077.95 108.66 L1079.30 108.95 L1080.66 109.24 L1082.03 109.54 L1083.42 109.85 L1084.81 110.16 L1086.22 110.48 L1087.65 110.81 L1089.08 111.14 L1090.53 111.48 L1091.99 111.82 L1093.46 112.17 L1094.94 112.53 L1096.44 112.89 L1097.94 113.26 L1099.46 113.63 L1100.99 114.01 L1102.53 114.39 L1104.08 114.78 L1105.64 115.18 L1107.21 115.58 L1108.79 115.99 L1110.39 116.40 L1111.99 116.81 L1113.60 117.23 L1115.22 117.66 L1116.85 118.09 L1118.49 118.53 L1120.14 118.97 L1121.80 119.42 L1123.47 119.87 L1125.15 120.32 L1126.83 120.78 L1128.53 121.24 L1130.23 121.71 L1131.94 122.19 L1133.66 122.66 L1135.38 123.14 L1137.12 123.63 L1138.86 124.12 L1140.60 124.61 L1142.36 125.11 L1144.12 125.61 L1145.89 126.11 L1147.66 126.62 L1149.44 127.14 L1151.23 127.65 L1153.03 128.17 L1154.83 128.69 L1156.63 129.22 L1158.44 129.75 L1160.26 130.28 L1162.08 130.82 L1163.91 131.36 L1165.74 131.90 L1167.58 132.45 L1169.42 133.00 L1171.27 133.55 L1173.12 134.11 L1174.97 134.66 L1176.83 135.23 L1178.69 135.79 L1180.56 136.36 L1182.43 136.93 L1184.30 137.50 L1186.18 138.07 L1188.06 138.65 L1189.95 139.23 L1191.83 139.82 L1193.72 140.40 L1195.61 140.99 L1197.51 141.58 L1199.41 142.17 L1201.31 142.77 L1203.21 143.37 L1205.11 143.97 L1207.02 144.57 L1208.93 145.17 L1210.84 145.78 L1212.75 146.39 L1214.66 147.00 L1216.57 147.61 L1218.49 148.23 L1220.41 148.84 L1222.32 149.46 L1224.24 150.09 L1226.16 150.71 L1228.08 151.33 L1230.00 151.96 L1231.92 152.59 L1233.84 153.22 L1235.76 153.85 L1237.68 154.49 L1239.60 155.12 L1241.52 155.76 L1243.44 156.40 L1245.36 157.04 L1247.28 157.68 L1249.20 158.33 L1251.12 158.97 L1253.04 159.62 L1254.95 160.27 L1256.87 160.92 L1258.78 161.57 L1260.70 162.22 L1262.61 162.88 L1264.52 163.53 L1266.43 164.19 L1268.34 164.85 L1270.24 165.51 L1272.15 166.17 L1274.05 166.84 L1275.95 167.50 L1277.85 168.17 L1279.75 168.83 L1281.64 169.50 L1283.53 170.17 L1285.42 170.84 L1287.31 171.51 L1289.20 172.19 L1291.08 172.86 L1292.96 173.54 L1294.84 174.21 L1296.71 174.89 L1298.58 175.57 L1300.45 176.25 L1302.31 176.93 L1304.18 177.61 L1306.03 178.29 L1307.89 178.98 L1309.74 179.66 L1311.59 180.35 L1313.43 181.03 L1315.28 181.72 L1317.11 182.41 L1318.95 183.10 L1320.78 183.79 L1322.60 184.48 L1324.42 185.17 L1326.24 185.87 L1328.06 186.56 L1329.86 187.26 L1331.67 187.95 L1333.47 188.65 L1335.27 189.35 L1337.06 190.05 L1338.85 190.75 L1340.63 191.45 L1342.41 192.15 L1344.18 192.85 L1345.95 193.55 L1347.71 194.25 L1349.47 194.96 L1351.22 195.66 L1352.97 196.37 L1354.72 197.07 L1356.46 197.78 L1358.19 198.49 L1359.92 199.19 L1361.64 199.90 L1363.36 200.61 L1365.07 201.32 L1366.77 202.03 L1368.47 202.74 L1370.17 203.46 L1371.86 204.17 L1373.54 204.88 L1375.22 205.59 L1376.89 206.31 L1378.55 207.02 L1380.21 207.74 L1381.87 208.46 L1383.51 209.17 L1385.16 209.89 L1386.79 210.61 L1388.42 211.33 L1390.04 212.04 L1391.66 212.76 L1393.27 213.48 L1394.87 214.20 L1396.47 214.92 M406.20 215.65 L405.38 216.37 L404.57 217.09 L403.76 217.81 L402.97 218.54 L402.17 219.26 L401.39 219.98 L400.61 220.71 L399.84 221.43 L399.08 222.16 L398.32 222.88 L397.57 223.61 L396.83 224.34 L396.09 225.07 L395.36 225.79 L394.64 226.52 L393.92 227.25 L393.22 227.98 L392.52 228.71 L391.82 229.44 L391.14 230.17 L390.46 230.90 L389.79 231.63 L389.12 232.36 L388.47 233.09 L387.82 233.82 L387.18 234.55 L386.54 235.29 L385.91 236.02 L385.30 236.75 L384.68 237.49 L384.08 238.22 L383.48 238.96 L382.90 239.69 L382.31 240.42 L381.74 241.16" fill="none" stroke="#52c569" stroke-width="1.39" stroke-dasharray="1.39 2.29"/>
<path d="M1038.90 103.30 L1037.89 103.30 L1036.89 103.31 L1035.92 103.34 L1034.97 103.38 L1034.04 103.43 L1033.14 103.49 L1032.25 103.57 L1031.38 103.66 L1030.53 103.76 L1029.71 103.87 L1028.90 104.00" fill="none" stroke="#52c569" stroke-width="1.6"/>
<path d="M1139.90 204.90 L1140.39 204.60 L1140.88 204.30 L1141.37 204.01 L1141.86 203.72 L1142.35 203.42 L1142.84 203.14 L1143.34 202.85 L1143.84 202.57 L1144.34 202.29 L1144.84 202.01 L1145.34 201.73 L1145.84 201.45 L1146.35 201.18 L1146.86 200.91 L1147.37 200.65 L1147.88 200.38 L1148.39 200.12 L1148.91 199.86 L1149.43 199.60 L1149.94 199.34 L1150.47 199.09 L1150.99 198.84 L1151.51 198.59 L1152.04 198.35 L1152.57 198.10 L1153.10 197.86 L1153.64 197.63 L1154.17 197.39 L1154.71 197.16 L1155.25 196.93 L1155.79 196.70 L1156.34 196.47 L1156.89 196.25 L1157.44 196.03 L1157.99 195.81 L1158.54 195.60 L1159.10 195.39 L1159.66 195.18 L1160.22 194.97 L1160.79 194.77 L1161.36 194.56 L1161.93 194.37 L1162.50 194.17 L1163.08 193.98 L1163.65 193.78 L1164.24 193.60 L1164.82 193.41 L1165.41 193.23 L1166.00 193.05 L1166.59 192.87 L1167.19 192.70 L1167.79 192.53 L1168.39 192.36 L1168.99 192.19 L1169.60 192.03 L1170.21 191.87 L1170.83 191.71 L1171.44 191.56 L1172.07 191.40 L1172.69 191.25 L1173.32 191.11 L1173.95 190.97 L1174.58 190.82 L1175.22 190.69 L1175.86 190.55 L1176.50 190.42 L1177.15 190.29 L1177.80 190.17 L1178.46 190.04 L1179.11 189.92 L1179.78 189.81 L1180.44 189.69 L1181.11 189.58 L1181.78 189.47 L1182.46 189.37 L1183.14 189.27 L1183.82 189.17 L1184.51 189.07 L1185.20 188.98 L1185.90 188.89 L1186.59 188.80 L1187.30 188.71 L1188.00 188.63 L1188.71 188.55 L1189.43 188.48 L1190.14 188.41 L1190.87 188.34 L1191.59 188.27 L1192.32 188.21 L1193.06 188.15 L1193.79 188.09 L1194.54 188.04 L1195.28 187.99 L1196.03 187.94 L1196.79 187.89 L1197.55 187.85 L1198.31 187.81 L1199.08 187.78 L1199.85 187.74 L1200.62 187.72 L1201.40 187.69 L1202.19 187.67 L1202.97 187.64 L1203.77 187.63 L1204.56 187.61 L1205.36 187.60 L1206.17 187.59 L1206.98 187.59 L1207.79 187.59 L1208.61 187.59 L1209.43 187.59 L1210.26 187.60 L1211.09 187.61 L1211.93 187.62 L1212.77 187.64 L1213.61 187.66 L1214.46 187.68 L1215.31 187.71 L1216.17 187.74 L1217.03 187.77 L1217.90 187.81 L1218.77 187.84 L1219.65 187.88 L1220.53 187.93 L1221.41 187.98 L1222.30 188.03 L1223.19 188.08 L1224.09 188.14 L1224.99 188.20 L1225.90 188.26 L1226.81 188.32 L1227.73 188.39 L1228.65 188.46 L1229.57 188.54 L1230.50 188.62 L1231.43 188.70 L1232.37 188.78 L1233.31 188.87 L1234.26 188.96 L1235.21 189.05 L1236.17 189.15 L1237.13 189.24 L1238.09 189.35 L1239.06 189.45 L1240.04 189.56 L1241.01 189.67 L1242.00 189.78 L1242.98 189.90 L1243.97 190.02 L1244.97 190.14 L1245.97 190.27 L1246.97 190.39 L1247.98 190.52 L1249.00 190.66 L1250.01 190.80 L1251.03 190.94 L1252.06 191.08 L1253.09 191.22 L1254.12 191.37 L1255.16 191.52 L1256.21 191.68 L1257.25 191.83 L1258.30 191.99 L1259.36 192.16 L1260.42 192.32 L1261.48 192.49 L1262.55 192.66 L1263.62 192.83 L1264.70 193.01 L1265.78 193.19 L1266.86 193.37 L1267.95 193.56 L1269.04 193.74 L1270.14 193.93 L1271.24 194.13 L1272.34 194.32 L1273.45 194.52 L1274.56 194.72 L1275.67 194.93 L1276.79 195.13 L1277.91 195.34 L1279.04 195.55 L1280.17 195.77 L1281.30 195.98 L1282.44 196.20 L1283.58 196.43 L1284.73 196.65 L1285.87 196.88 L1287.03 197.11 L1288.18 197.34 L1289.34 197.58 L1290.50 197.81 L1291.67 198.05 L1292.84 198.30 L1294.01 198.54 L1295.18 198.79 L1296.36 199.04 L1297.54 199.29 L1298.73 199.55 L1299.92 199.80 L1301.11 200.06 L1302.30 200.32 L1303.50 200.59 L1304.70 200.86 L1305.90 201.13 L1307.11 201.40 L1308.32 201.67 L1309.53 201.95 L1310.75 202.23 L1311.97 202.51 L1313.19 202.79 L1314.41 203.08 L1315.64 203.36 L1316.86 203.65 L1318.10 203.95 L1319.33 204.24 L1320.57 204.54 L1321.80 204.84 L1323.05 205.14 L1324.29 205.44 L1325.53 205.75 L1326.78 206.05 L1328.03 206.36 L1329.29 206.68 L1330.54 206.99 L1331.80 207.31 L1333.06 207.62 L1334.32 207.94 L1335.58 208.27 L1336.85 208.59 L1338.11 208.92 L1339.38 209.25 L1340.65 209.58 L1341.93 209.91 L1343.20 210.25 L1344.48 210.58 L1345.76 210.92 L1347.04 211.26 L1348.32 211.60 L1349.60 211.95 L1350.88 212.29 L1352.17 212.64 L1353.46 212.99 L1354.74 213.35 L1356.03 213.70 L1357.32 214.06 L1358.62 214.41 L1359.91 214.77 L1361.20 215.13 L1362.50 215.50 L1363.80 215.86 L1365.09 216.23 L1366.39 216.60 L1367.69 216.97 L1368.99 217.34 L1370.29 217.71 L1371.59 218.09 L1372.90 218.47 L1374.20 218.84 L1375.50 219.23 L1376.81 219.61 L1378.11 219.99 L1379.42 220.38 L1380.72 220.76 L1382.03 221.15 L1383.34 221.54 L1384.64 221.94 L1385.95 222.33 L1387.26 222.73 L1388.56 223.12 L1389.87 223.52 L1391.18 223.92 L1392.49 224.32 L1393.80 224.73 L1395.10 225.13 L1396.41 225.54 L1397.72 225.94 L1399.02 226.35 L1400.33 226.76 L1401.64 227.18 L1402.94 227.59 L1404.25 228.00 L1405.56 228.42 L1406.86 228.84 L1408.17 229.26 L1409.47 229.68 L1410.77 230.10 L1412.08 230.52 L1413.38 230.95 L1414.68 231.37 L1415.98 231.80 L1417.28 232.23 L1418.58 232.66 L1419.87 233.09 L1421.17 233.52 L1422.47 233.96 L1423.76 234.39 L1425.06 234.83 L1426.35 235.27 L1427.64 235.70 L1428.93 236.14 M374.87 236.59 L374.95 237.03 L375.04 237.47 L375.13 237.92 L375.22 238.36 L375.31 238.81 L375.41 239.26 L375.50 239.71 L375.60 240.16 L375.70 240.61 L375.80 241.07 L375.90 241.52 L376.00 241.97" fill="none" stroke="#52c569" stroke-width="1.39" stroke-dasharray="1.39 2.29"/>
<path d="M1139.90 204.90 L1139.07 205.41 L1138.25 205.94 L1137.43 206.46 L1136.62 207.00 L1135.81 207.54 L1135.00 208.08 L1134.19 208.63 L1133.39 209.19 L1132.59 209.76 L1131.79 210.32 L1131.00 210.90" fill="none" stroke="#52c569" stroke-width="1.6"/>
<path d="M898.70 62.00 L899.23 61.33 L899.75 60.67 L900.28 60.01 L900.81 59.36 L901.33 58.72 L901.86 58.08 L902.39 57.46 L902.91 56.84 L903.44 56.24 L903.97 55.64 L904.49 55.06 L905.02 54.49 L905.55 53.93 L906.08 53.38 L906.62 52.85 L907.15 52.34 L907.69 51.84 L908.24 51.36 L908.79 50.89 L909.34 50.45 L909.90 50.03 L910.47 49.63 L911.05 49.25 L911.64 48.90 L912.23 48.57 L912.85 48.27 L913.47 47.99 L914.11 47.75 L914.77 47.54 L915.45 47.35 L916.15 47.20 L916.87 47.08 L917.62 47.00 L918.40 46.95 L919.20 46.93 L920.03 46.95 L920.90 47.00 L921.79 47.08 L922.72 47.20 L923.69 47.35 L924.68 47.53 L925.72 47.74 L926.78 47.98 L927.89 48.26 L929.02 48.56 L930.19 48.88 L931.40 49.24 L932.63 49.61 L933.90 50.01 L935.20 50.44 L936.52 50.88 L937.88 51.34 L939.26 51.82 L940.67 52.32 L942.11 52.83 L943.56 53.36 L945.04 53.91 L946.55 54.47 L948.07 55.04 L949.61 55.62 L951.17 56.22 L952.75 56.82 L954.34 57.44 L955.95 58.06 L957.58 58.69 L959.22 59.34 L960.87 59.99 L962.53 60.64 L964.21 61.31 L965.90 61.98 L967.59 62.65 L969.30 63.34 L971.02 64.02 L972.74 64.72 L974.47 65.41 L976.22 66.12 L977.96 66.82 L979.72 67.54 L981.48 68.25 L983.25 68.97 L985.02 69.69 L986.80 70.42 L988.58 71.15 L990.37 71.88 L992.16 72.61 L993.96 73.35 L995.76 74.09 L997.56 74.83 L999.36 75.58 L1001.17 76.33 L1002.99 77.08 L1004.80 77.83 L1006.62 78.58 L1008.44 79.34 L1010.26 80.10 L1012.08 80.85 L1013.90 81.62 L1015.73 82.38 L1017.55 83.14 L1019.38 83.91 L1021.21 84.67 L1023.04 85.44 L1024.87 86.21 L1026.70 86.98 L1028.53 87.75 L1030.36 88.53 L1032.19 89.30 L1034.02 90.08 L1035.85 90.85 L1037.68 91.63 L1039.51 92.41 L1041.33 93.19 L1043.16 93.97 L1044.99 94.75 L1046.82 95.53 L1048.64 96.32 L1050.47 97.10 L1052.29 97.88 L1054.11 98.67 L1055.93 99.45 L1057.75 100.24 L1059.57 101.03 L1061.39 101.82 L1063.21 102.60 L1065.02 103.39 L1066.83 104.18 L1068.64 104.97 L1070.45 105.76 L1072.25 106.55 L1074.06 107.35 L1075.86 108.14 L1077.66 108.93 L1079.46 109.72 L1081.25 110.52 L1083.05 111.31 L1084.84 112.11 L1086.63 112.90 L1088.41 113.70 L1090.19 114.49 L1091.97 115.29 L1093.75 116.08 L1095.53 116.88 L1097.30 117.68 L1099.07 118.47 L1100.83 119.27 L1102.60 120.07 L1104.36 120.87 L1106.11 121.67 L1107.87 122.47 L1109.62 123.27 L1111.37 124.07 L1113.11 124.87 L1114.85 125.67 L1116.59 126.47 L1118.32 127.27 L1120.05 128.07 L1121.78 128.87 L1123.50 129.67 L1125.22 130.47 L1126.94 131.28 L1128.65 132.08 L1130.36 132.88 L1132.06 133.68 L1133.76 134.49 L1135.46 135.29 L1137.15 136.09 L1138.84 136.90 L1140.53 137.70 L1142.21 138.50 L1143.88 139.31 L1145.56 140.11 L1147.22 140.92 L1148.89 141.72 L1150.55 142.52 L1152.20 143.33 L1153.85 144.13 L1155.50 144.94 L1157.14 145.75 L1158.78 146.55 L1160.41 147.36 L1162.04 148.16 L1163.67 148.97 L1165.29 149.77 L1166.90 150.58 L1168.51 151.39 L1170.11 152.19 L1171.72 153.00 L1173.31 153.81 L1174.90 154.61 L1176.49 155.42 L1178.07 156.23 L1179.64 157.04 L1181.22 157.84 L1182.78 158.65" fill="none" stroke="#2ab07f" stroke-width="1.39" stroke-dasharray="1.39 2.29"/>
<path d="M898.70 62.00 L897.83 63.12 L896.95 64.26 L896.07 65.41 L895.20 66.58 L894.32 67.75 L893.43 68.94 L892.55 70.13 L891.66 71.34 L890.78 72.55 L889.89 73.77 L889.00 75.00" fill="none" stroke="#2ab07f" stroke-width="1.6"/>
<path d="M930.00 59.30 L930.66 59.13 L931.33 58.98 L932.02 58.85 L932.73 58.74 L933.47 58.65 L934.22 58.59 L934.99 58.54 L935.79 58.52 L936.61 58.51 L937.46 58.53 L938.33 58.57 L939.22 58.64 L940.14 58.72 L941.08 58.82 L942.05 58.95 L943.05 59.10 L944.07 59.26 L945.11 59.45 L946.19 59.65 L947.29 59.88 L948.41 60.12 L949.56 60.39 L950.74 60.67 L951.94 60.97 L953.17 61.28 L954.42 61.61 L955.70 61.96 L957.00 62.33 L958.32 62.71 L959.67 63.10 L961.04 63.51 L962.43 63.93 L963.84 64.37 L965.27 64.82 L966.73 65.28 L968.20 65.75 L969.69 66.23 L971.20 66.73 L972.73 67.24 L974.28 67.75 L975.84 68.28 L977.42 68.81 L979.01 69.36 L980.62 69.91 L982.25 70.47 L983.89 71.04 L985.54 71.62 L987.20 72.21 L988.88 72.80 L990.57 73.40 L992.27 74.01 L993.99 74.62 L995.71 75.24 L997.44 75.86 L999.19 76.49 L1000.94 77.13 L1002.70 77.77 L1004.48 78.42 L1006.25 79.07 L1008.04 79.73 L1009.84 80.39 L1011.64 81.05 L1013.45 81.72 L1015.26 82.39 L1017.09 83.07 L1018.91 83.75 L1020.75 84.44 L1022.59 85.13 L1024.43 85.82 L1026.28 86.51 L1028.14 87.21 L1029.99 87.91 L1031.86 88.61 L1033.72 89.32 L1035.59 90.03 L1037.47 90.74 L1039.34 91.46 L1041.22 92.17 L1043.11 92.89 L1044.99 93.62 L1046.88 94.34 L1048.77 95.07 L1050.66 95.79 L1052.56 96.53 L1054.45 97.26 L1056.35 97.99 L1058.25 98.73 L1060.15 99.47 L1062.05 100.21 L1063.96 100.95 L1065.86 101.69 L1067.76 102.43 L1069.67 103.18 L1071.57 103.93 L1073.48 104.68 L1075.38 105.43 L1077.29 106.18 L1079.20 106.93 L1081.10 107.69 L1083.01 108.44 L1084.91 109.20 L1086.81 109.96 L1088.72 110.72 L1090.62 111.48 L1092.52 112.24 L1094.42 113.00 L1096.32 113.76 L1098.22 114.53 L1100.12 115.29 L1102.01 116.06 L1103.91 116.83 L1105.80 117.60 L1107.69 118.37 L1109.58 119.14 L1111.47 119.91 L1113.36 120.68 L1115.24 121.45 L1117.12 122.23 L1119.00 123.00 L1120.88 123.77 L1122.75 124.55 L1124.63 125.33 L1126.50 126.10 L1128.36 126.88 L1130.23 127.66 L1132.09 128.44 L1133.95 129.22 L1135.81 130.00 L1137.66 130.78 L1139.51 131.56 L1141.36 132.34 L1143.21 133.12 L1145.05 133.91 L1146.89 134.69 L1148.72 135.47 L1150.56 136.26 L1152.39 137.04 L1154.21 137.83 L1156.03 138.62 L1157.85 139.40 L1159.67 140.19 L1161.48 140.98 L1163.28 141.77 L1165.09 142.55 L1166.89 143.34 L1168.68 144.13 L1170.47 144.92 L1172.26 145.71 L1174.04 146.50 L1175.82 147.29 L1177.60 148.08 L1179.37 148.87 L1181.13 149.67 L1182.90 150.46 L1184.65 151.25 L1186.41 152.04" fill="none" stroke="#2ab07f" stroke-width="1.39" stroke-dasharray="1.39 2.29"/>
<path d="M930.00 59.30 L929.27 59.52 L928.57 59.76 L927.89 60.03 L927.22 60.33 L926.57 60.64 L925.94 60.98 L925.33 61.34 L924.73 61.73 L924.14 62.13 L923.56 62.56 L923.00 63.00" fill="none" stroke="#2ab07f" stroke-width="1.6"/>
<path d="M1038.50 126.80 L1039.46 126.92 L1040.44 127.04 L1041.42 127.17 L1042.40 127.31 L1043.40 127.45 L1044.40 127.60 L1045.41 127.75 L1046.43 127.91 L1047.45 128.08 L1048.49 128.25 L1049.53 128.42 L1050.57 128.61 L1051.63 128.80 L1052.69 128.99 L1053.76 129.19 L1054.84 129.40 L1055.92 129.61 L1057.01 129.83 L1058.11 130.05 L1059.22 130.28 L1060.33 130.51 L1061.46 130.75 L1062.58 131.00 L1063.72 131.25 L1064.86 131.50 L1066.01 131.76 L1067.17 132.03 L1068.33 132.30 L1069.50 132.57 L1070.68 132.86 L1071.86 133.14 L1073.05 133.43 L1074.25 133.73 L1075.46 134.03 L1076.67 134.34 L1077.89 134.65 L1079.11 134.97 L1080.34 135.29 L1081.58 135.61 L1082.82 135.94 L1084.07 136.28 L1085.33 136.62 L1086.59 136.96 L1087.86 137.31 L1089.13 137.66 L1090.41 138.02 L1091.70 138.38 L1092.99 138.75 L1094.29 139.12 L1095.59 139.50 L1096.90 139.88 L1098.22 140.26 L1099.54 140.65 L1100.86 141.04 L1102.19 141.43 L1103.53 141.83 L1104.87 142.24 L1106.22 142.65 L1107.57 143.06 L1108.92 143.47 L1110.28 143.89 L1111.65 144.31 L1113.02 144.74 L1114.40 145.17 L1115.77 145.61 L1117.16 146.04 L1118.55 146.48 L1119.94 146.93 L1121.34 147.38 L1122.74 147.83 L1124.14 148.28 L1125.55 148.74 L1126.96 149.20 L1128.38 149.67 L1129.80 150.14 L1131.22 150.61 L1132.65 151.08 L1134.08 151.56 L1135.52 152.04 L1136.95 152.53 L1138.39 153.01 L1139.84 153.50 L1141.28 154.00 L1142.73 154.49 L1144.19 154.99 L1145.64 155.49 L1147.10 156.00 L1148.56 156.50 L1150.02 157.01 L1151.49 157.53 L1152.96 158.04 L1154.43 158.56 L1155.90 159.08 L1157.38 159.60 L1158.85 160.13 L1160.33 160.66 L1161.81 161.19 L1163.29 161.72 L1164.78 162.26 L1166.26 162.80 L1167.75 163.34 L1169.24 163.88 L1170.73 164.42 L1172.22 164.97 L1173.71 165.52 L1175.21 166.07 L1176.70 166.63 L1178.20 167.18 L1179.70 167.74 L1181.19 168.30 L1182.69 168.86 L1184.19 169.43 L1185.69 169.99" fill="none" stroke="#2ab07f" stroke-width="1.39" stroke-dasharray="1.39 2.29"/>
<path d="M1038.50 126.80 L1037.69 126.71 L1036.89 126.62 L1036.09 126.53 L1035.30 126.45 L1034.51 126.37 L1033.73 126.30 L1032.95 126.23 L1032.18 126.17 L1031.42 126.11 L1030.66 126.05 L1029.90 126.00" fill="none" stroke="#2ab07f" stroke-width="1.6"/>
<path d="M1018.40 96.00 L1018.41 95.58 L1018.43 95.16 L1018.46 94.75 L1018.51 94.35 L1018.56 93.96 L1018.63 93.57 L1018.71 93.19 L1018.80 92.82 L1018.90 92.45 L1019.02 92.10 L1019.15 91.75 L1019.30 91.41 L1019.45 91.08 L1019.63 90.75 L1019.81 90.44 L1020.02 90.13 L1020.24 89.83 L1020.47 89.54 L1020.72 89.26 L1020.99 88.99 L1021.27 88.73 L1021.57 88.48 L1021.89 88.24 L1022.23 88.00 L1022.59 87.78 L1022.96 87.57 L1023.35 87.36 L1023.77 87.17 L1024.20 86.99 L1024.65 86.81 L1025.13 86.65 L1025.62 86.50 L1026.14 86.36 L1026.67 86.23 L1027.23 86.11 L1027.81 86.00 L1028.41 85.90 L1029.04 85.81 L1029.69 85.73 L1030.36 85.66 L1031.05 85.61 L1031.77 85.56 L1032.51 85.53 L1033.28 85.51 L1034.06 85.50 L1034.88 85.50 L1035.72 85.51 L1036.58 85.53 L1037.47 85.56 L1038.38 85.60 L1039.31 85.66 L1040.28 85.72 L1041.26 85.80 L1042.27 85.89 L1043.31 85.98 L1044.37 86.09 L1045.46 86.21 L1046.57 86.34 L1047.71 86.48 L1048.87 86.63 L1050.05 86.80 L1051.27 86.97 L1052.50 87.15 L1053.76 87.34 L1055.04 87.55 L1056.35 87.76 L1057.69 87.98 L1059.04 88.21 L1060.42 88.45 L1061.83 88.70 L1063.25 88.96 L1064.70 89.23 L1066.18 89.51 L1067.67 89.80 L1069.19 90.10 L1070.73 90.40 L1072.29 90.72 L1073.87 91.04 L1075.48 91.37 L1077.10 91.71 L1078.75 92.06 L1080.42 92.41 L1082.10 92.78 L1083.81 93.15 L1085.53 93.53 L1087.28 93.91 L1089.04 94.31 L1090.82 94.71 L1092.62 95.12 L1094.44 95.53 L1096.28 95.95 L1098.13 96.38 L1100.00 96.82 L1101.88 97.26 L1103.78 97.71 L1105.70 98.16 L1107.63 98.62 L1109.58 99.09 L1111.55 99.56 L1113.52 100.04 L1115.51 100.52 L1117.52 101.01 L1119.54 101.50 L1121.57 102.00 L1123.62 102.51 L1125.67 103.02 L1127.74 103.54 L1129.83 104.06 L1131.92 104.58 L1134.03 105.11 L1136.14 105.64 L1138.27 106.18 L1140.41 106.73 L1142.55 107.27 L1144.71 107.82 L1146.88 108.38 L1149.05 108.94 L1151.24 109.50 L1153.43 110.07 M649.37 110.64 L648.32 111.22 L647.27 111.80 L646.21 112.38 L645.14 112.97 L644.06 113.56 L642.98 114.15 L641.89 114.75 L640.79 115.35 L639.69 115.95 L638.58 116.55 L637.47 117.16 L636.35 117.78 L635.23 118.39 L634.10 119.01 L632.96 119.63 L631.83 120.25 L630.68 120.88 L629.54 121.51 L628.39 122.14 L627.24 122.77 L626.08 123.41 L624.92 124.05 L623.76 124.69 L622.59 125.33 L621.43 125.98 L620.26 126.62 L619.08 127.28 L617.91 127.93 L616.73 128.58 L615.56 129.24 L614.38 129.90 L613.20 130.56 L612.01 131.22 L610.83 131.88 L609.65 132.55 L608.46 133.22 L607.27 133.89 L606.09 134.56 L604.90 135.23 L603.71 135.91 L602.53 136.59 L601.34 137.27 L600.15 137.95 L598.96 138.63 L597.78 139.31 L596.59 140.00 L595.41 140.68 L594.22 141.37 L593.04 142.06 L591.85 142.75 L590.67 143.44 L589.49 144.14 L588.31 144.83 L587.13 145.53 L585.95 146.22 L584.78 146.92 L583.60 147.62 L582.43 148.32 L581.26 149.03 L580.09 149.73 L578.92 150.44 L577.76 151.14 L576.60 151.85 L575.44 152.56 L574.28 153.27 L573.12 153.98 L571.97 154.69 L570.82 155.40 L569.67 156.11 L568.53 156.83 L567.38 157.54 L566.25 158.26 L565.11 158.98 L563.98 159.70 L562.84 160.42 L561.72 161.14 L560.59 161.86 L559.47 162.58 L558.36 163.30 L557.24 164.03 L556.13 164.75 L555.02 165.48 L553.92 166.20 L552.82 166.93 L551.73 167.66 L550.63 168.38 L549.55 169.11 L548.46 169.84 L547.38 170.57 L546.31 171.31 L545.23 172.04 L544.17 172.77 L543.10 173.50 L542.04 174.24 L540.99 174.97 L539.94 175.71 L538.89 176.44 L537.85 177.18 L536.81 177.92 L535.78 178.66 L534.75 179.40 L533.73 180.13 L532.71 180.87 L531.69 181.61 L530.68 182.36 L529.68 183.10 L528.68 183.84 L527.69 184.58 L526.70 185.32 L525.71 186.07 L524.73 186.81 L523.76 187.56 L522.79 188.30 L521.83 189.05 L520.87 189.79 L519.91 190.54 L518.97 191.29 L518.02 192.04 L517.09 192.78 L516.16 193.53 L515.23 194.28 L514.31 195.03 L513.39 195.78 L512.48 196.53 L511.58 197.28 L510.68 198.03 L509.79 198.78 L508.90 199.54 L508.02 200.29 L507.15 201.04 L506.28 201.79 L505.41 202.55 L504.55 203.30 L503.70 204.06 L502.86 204.81 L502.02 205.56 L501.18 206.32 L500.36 207.08 L499.53 207.83 L498.72 208.59 L497.91 209.34 L497.11 210.10 L496.31 210.86 L495.52 211.62 L494.73 212.37 L493.96 213.13 L493.18 213.89 L492.42 214.65 L491.66 215.41 L490.91 216.17 L490.16 216.93 L489.42 217.69 L488.69 218.45 L487.96 219.21 L487.24 219.97 L486.53 220.73 L485.82 221.49 L485.12 222.25 L484.43 223.02 L483.74 223.78 L483.06 224.54 L482.39 225.30 L481.72 226.07 L481.06 226.83 L480.40 227.59 L479.76 228.36 L479.12 229.12 L478.48 229.88 L477.86 230.65 L477.24 231.41 L476.63 232.18 L476.02 232.94 L475.42 233.71 L474.83 234.47 L474.25 235.24 L473.67 236.01 L473.10 236.77 L472.53 237.54 L471.98 238.30 L471.43 239.07 L470.89 239.84 L470.35 240.60 L469.82 241.37 L469.30 242.14 L468.79 242.91 L468.28 243.67 L467.78 244.44 L467.29 245.21 L466.80 245.98 L466.33 246.75 L465.85 247.52 L465.39 248.28 L464.94 249.05 L464.49 249.82 L464.04 250.59 L463.61 251.36 L463.18 252.13 L462.76 252.90 L462.35 253.67 L461.95 254.44 L461.55 255.21 L461.16 255.98 L460.78 256.75 L460.40 257.52 L460.04 258.29 L459.68 259.06 L459.32 259.83 L458.98 260.60 L458.64 261.38 L458.31 262.15 L457.99 262.92 L457.67 263.69 L457.36 264.46 L457.06 265.23 L456.77 266.00 L456.49 266.78 L456.21 267.55 L455.94 268.32 L455.68 269.09 L455.42 269.86 L455.17 270.64 L454.94 271.41 L454.70 272.18 L454.48 272.96 L454.26 273.73 L454.05 274.50 L453.85 275.27 L453.66 276.05 L453.47 276.82 L453.30 277.59 L453.12 278.37 L452.96 279.14 L452.81 279.91 L452.66 280.69 L452.52 281.46 L452.39 282.23 L452.26 283.01 L452.15 283.78 L452.04 284.56 L451.94 285.33 L451.84 286.10 L451.76 286.88 L451.68 287.65 L451.61 288.43 L451.55 289.20 L451.49 289.98 L451.45 290.75 L451.41 291.52 L451.37 292.30 L451.35 293.07 L451.34 293.85 L451.33 294.62 L451.33 295.40 L451.33 296.17 L451.35 296.95 L451.37 297.72 L451.40 298.50 L451.44 299.27 L451.49 300.05 L451.54 300.82 L451.61 301.60 L451.67 302.37 L451.75 303.15 L451.84 303.92 L451.93 304.70 L452.03 305.47 L452.14 306.25 L452.26 307.02 L452.38 307.80 L452.51 308.57 L452.65 309.35 L452.80 310.12 L452.96 310.90 L453.12 311.67 L453.29 312.45 L453.47 313.23 L453.66 314.00 L453.85 314.78 L454.05 315.55 L454.26 316.33 L454.48 317.10 L454.70 317.88 L454.94 318.65 L455.18 319.43 L455.43 320.20 L455.68 320.98 L455.95 321.76 L456.22 322.53 L456.50 323.31 L456.78 324.08 L457.08 324.86 L457.38 325.63 L457.69 326.41 L458.01 327.18 L458.34 327.96 L458.67 328.73 L459.01 329.51 L459.36 330.29 L459.71 331.06 L460.08 331.84 L460.45 332.61 L460.83 333.39 L461.22 334.16 L461.61 334.94 L462.01 335.71 L462.42 336.49 L462.84 337.26 L463.26 338.04 L463.70 338.81 L464.14 339.59 L464.58 340.36 L465.04 341.14 L465.50 341.91 L465.97 342.69 L466.45 343.46 L466.94 344.24 L467.43 345.01 L467.93 345.79 L468.44 346.56 L468.95 347.34 L469.48 348.11 L470.01 348.88 L470.54 349.66 L471.09 350.43" fill="none" stroke="#c2df23" stroke-width="1.39" stroke-dasharray="1.39 2.29"/>
<path d="M1018.40 96.00 L1018.40 96.43 L1018.41 96.87 L1018.43 97.32 L1018.46 97.77 L1018.49 98.23 L1018.54 98.69 L1018.60 99.16 L1018.66 99.64 L1018.73 100.12 L1018.81 100.61 L1018.90 101.10" fill="none" stroke="#c2df23" stroke-width="1.6"/>
<path d="M1142.60 195.30 L1142.93 194.92 L1143.25 194.53 L1143.58 194.15 L1143.91 193.78 L1144.24 193.40 L1144.58 193.03 L1144.91 192.66 L1145.25 192.29 L1145.58 191.92 L1145.92 191.56 L1146.26 191.20 L1146.60 190.84 L1146.95 190.48 L1147.29 190.12 L1147.64 189.77 L1147.99 189.42 L1148.34 189.08 L1148.69 188.73 L1149.05 188.39 L1149.41 188.05 L1149.76 187.71 L1150.13 187.38 L1150.49 187.05 L1150.85 186.72 L1151.22 186.39 L1151.59 186.07 L1151.96 185.74 L1152.34 185.43 L1152.72 185.11 L1153.10 184.80 L1153.48 184.49 L1153.86 184.18 L1154.25 183.87 L1154.64 183.57 L1155.03 183.27 L1155.43 182.97 L1155.83 182.68 L1156.23 182.39 L1156.63 182.10 L1157.04 181.81 L1157.45 181.53 L1157.86 181.25 L1158.28 180.97 L1158.70 180.70 L1159.12 180.43 L1159.55 180.16 L1159.98 179.90 L1160.41 179.63 L1160.85 179.37 L1161.29 179.12 L1161.73 178.87 L1162.18 178.62 L1162.63 178.37 L1163.08 178.12 L1163.54 177.88 L1164.00 177.65 L1164.46 177.41 L1164.93 177.18 L1165.41 176.95 L1165.88 176.73 L1166.36 176.51 L1166.85 176.29 L1167.34 176.07 L1167.83 175.86 L1168.33 175.65 L1168.83 175.45 L1169.34 175.24 L1169.85 175.04 L1170.36 174.85 L1170.88 174.66 L1171.40 174.47 L1171.93 174.28 L1172.47 174.10 L1173.00 173.92 L1173.55 173.75 L1174.09 173.57 L1174.64 173.41 L1175.20 173.24 L1175.76 173.08 L1176.33 172.92 L1176.90 172.77 L1177.48 172.61 L1178.06 172.47 L1178.64 172.32 L1179.23 172.18 L1179.83 172.04 L1180.43 171.91 L1181.04 171.78 L1181.65 171.65 L1182.27 171.53 L1182.89 171.41 L1183.52 171.30 L1184.16 171.18 L1184.79 171.07 L1185.44 170.97 L1186.09 170.87 L1186.75 170.77 L1187.41 170.68 L1188.08 170.58 L1188.75 170.50 L1189.43 170.41 L1190.11 170.34 L1190.80 170.26 L1191.50 170.19 L1192.20 170.12 L1192.91 170.05 L1193.63 169.99 L1194.35 169.93 L1195.07 169.88 L1195.81 169.83 L1196.54 169.78 L1197.29 169.74 L1198.04 169.70 L1198.80 169.67 L1199.56 169.64 L1200.33 169.61 L1201.10 169.58 L1201.89 169.56 L1202.67 169.55 L1203.47 169.54 L1204.27 169.53 L1205.08 169.52 L1205.89 169.52 L1206.71 169.52 L1207.54 169.53 L1208.37 169.54 L1209.21 169.55 L1210.05 169.57 L1210.90 169.59 L1211.76 169.61 L1212.63 169.64 L1213.50 169.67 L1214.38 169.71 L1215.26 169.75 L1216.15 169.79 L1217.05 169.84 L1217.95 169.89 L1218.86 169.94 L1219.78 170.00 L1220.70 170.06 L1221.63 170.13 L1222.57 170.20 L1223.51 170.27 L1224.46 170.35 L1225.42 170.43 L1226.38 170.51 L1227.35 170.60 L1228.32 170.69 L1229.31 170.78 L1230.29 170.88 L1231.29 170.98 L1232.29 171.09 L1233.30 171.20 L1234.31 171.31 L1235.33 171.43 L1236.36 171.55 L1237.40 171.67 L1238.44 171.80 L1239.48 171.93 L1240.53 172.06 L1241.59 172.20 L1242.66 172.34 L1243.73 172.49 L1244.81 172.64 L1245.89 172.79 L1246.98 172.94 L1248.08 173.10 L1249.18 173.26 L1250.29 173.43 L1251.41 173.60 L1252.53 173.77 L1253.66 173.95 L1254.79 174.13 L1255.93 174.31 L1257.08 174.49 L1258.23 174.68 L1259.39 174.88 L1260.55 175.07 L1261.72 175.27 L1262.90 175.48 L1264.08 175.68 L1265.26 175.89 L1266.46 176.10 L1267.66 176.32 L1268.86 176.54 L1270.07 176.76 L1271.28 176.99 L1272.51 177.21 L1273.73 177.45 L1274.96 177.68 L1276.20 177.92 L1277.44 178.16 L1278.69 178.40 L1279.94 178.65 L1281.20 178.90 L1282.47 179.15 L1283.73 179.41 L1285.01 179.67 L1286.29 179.93 L1287.57 180.20 L1288.86 180.47 L1290.15 180.74 L1291.45 181.01 L1292.75 181.29 L1294.06 181.57 L1295.38 181.85 L1296.69 182.14 L1298.01 182.43 L1299.34 182.72 L1300.67 183.02 L1302.01 183.31 L1303.35 183.61 L1304.69 183.92 L1306.04 184.22 L1307.39 184.53 L1308.75 184.84 L1310.11 185.15 L1311.47 185.47 L1312.84 185.79 L1314.22 186.11 L1315.59 186.44 L1316.97 186.76 L1318.36 187.09 L1319.74 187.43 L1321.14 187.76 L1322.53 188.10 L1323.93 188.44 L1325.33 188.78 L1326.74 189.13 L1328.14 189.47 L1329.56 189.82 L1330.97 190.18 L1332.39 190.53 L1333.81 190.89 L1335.24 191.25 L1336.66 191.61 L1338.09 191.97 L1339.53 192.34 L1340.96 192.71 L1342.40 193.08 L1343.84 193.45 L1345.28 193.83 L1346.73 194.21 L1348.18 194.59 L1349.63 194.97 L1351.08 195.36 L1352.54 195.74 L1354.00 196.13 L1355.46 196.52 L1356.92 196.92 L1358.38 197.31 L1359.85 197.71 L1361.32 198.11 L1362.79 198.51 L1364.26 198.92 L1365.73 199.32 L1367.20 199.73 L1368.68 200.14 L1370.16 200.55 L1371.64 200.97 M431.73 201.38 L431.65 201.80 L431.57 202.22 L431.49 202.64 L431.41 203.06 L431.33 203.49 L431.25 203.92 L431.17 204.35 L431.08 204.78 L431.00 205.21 L430.91 205.65 L430.82 206.08 L430.74 206.52 L430.65 206.96 L430.56 207.40 L430.47 207.85 L430.39 208.29 L430.30 208.74 L430.21 209.19 L430.12 209.64 L430.03 210.09 L429.94 210.55 L429.85 211.00 L429.76 211.46 L429.67 211.92 L429.58 212.38 L429.49 212.84 L429.41 213.30 L429.32 213.77 L429.23 214.23 L429.14 214.70 L429.06 215.17 L428.97 215.64 L428.89 216.12 L428.80 216.59 L428.72 217.07 L428.64 217.54 L428.55 218.02 L428.47 218.50 L428.39 218.98 L428.31 219.46 L428.24 219.95 L428.16 220.43 L428.08 220.92 L428.01 221.41 L427.94 221.90 L427.87 222.39 L427.79 222.88 L427.73 223.38 L427.66 223.87 L427.59 224.37 L427.53 224.86 L427.46 225.36 L427.40 225.86 L427.34 226.36 L427.29 226.87 L427.23 227.37 L427.18 227.87 L427.12 228.38 L427.07 228.89 L427.02 229.39 L426.98 229.90 L426.93 230.41 L426.89 230.93 L426.85 231.44 L426.81 231.95 L426.78 232.47 L426.74 232.98 L426.71 233.50 L426.68 234.02 L426.65 234.54 L426.63 235.06 L426.61 235.58 L426.59 236.10 L426.57 236.63 L426.56 237.15 L426.54 237.68 L426.54 238.20 L426.53 238.73 L426.52 239.26 L426.52 239.79 L426.52 240.32 L426.53 240.85 L426.53 241.38 L426.54 241.91 L426.56 242.45 L426.57 242.98 L426.59 243.52 L426.61 244.06 L426.64 244.59 L426.66 245.13 L426.69 245.67 L426.73 246.21 L426.76 246.75 L426.80 247.29 L426.85 247.84 L426.89 248.38 L426.94 248.92 L426.99 249.47 L427.05 250.02 L427.11 250.56 L427.17 251.11 L427.24 251.66 L427.31 252.21 L427.38 252.76 L427.45 253.31 L427.53 253.86 L427.62 254.41 L427.70 254.96 L427.79 255.51 L427.89 256.07 L427.98 256.62 L428.08 257.18 L428.19 257.73 L428.30 258.29 L428.41 258.85 L428.52 259.41 L428.64 259.96 L428.76 260.52 L428.89 261.08 L429.02 261.64 L429.15 262.21 L429.29 262.77 L429.43 263.33 L429.58 263.89 L429.73 264.46 L429.88 265.02 L430.04 265.58 L430.20 266.15 L430.36 266.71 L430.53 267.28 L430.70 267.85 L430.88 268.42 L431.06 268.98 L431.25 269.55 L431.44 270.12 L431.63 270.69 L431.82 271.26 L432.03 271.83 L432.23 272.40 L432.44 272.97 L432.65 273.54 L432.87 274.12 L433.09 274.69 L433.32 275.26 L433.55 275.83 L433.78 276.41 L434.02 276.98 L434.26 277.56 L434.51 278.13 L434.76 278.71 L435.01 279.29 L435.27 279.86 L435.54 280.44 L435.80 281.02 L436.08 281.59 L436.35 282.17 L436.63 282.75 L436.92 283.33 L437.21 283.91 L437.50 284.49 L437.80 285.07 L438.10 285.65 L438.41 286.23 L438.72 286.81 L439.03 287.39 L439.35 287.97 L439.68 288.55 L440.01 289.13 L440.34 289.72 L440.68 290.30 L441.02 290.88 L441.36 291.47 L441.71 292.05 L442.07 292.63 L442.43 293.22 L442.79 293.80 L443.16 294.39 L443.53 294.97 L443.91 295.56 L444.29 296.14 L444.68 296.73 L445.07 297.31 L445.46 297.90 L445.86 298.48 L446.26 299.07 L446.67 299.66 L447.09 300.24 L447.50 300.83 L447.92 301.42 L448.35 302.00 L448.78 302.59 L449.22 303.18 L449.65 303.77 L450.10 304.35 L450.55 304.94 L451.00 305.53 L451.46 306.12 L451.92 306.71 L452.38 307.29 L452.86 307.88 L453.33 308.47 L453.81 309.06 L454.29 309.65 L454.78 310.24 L455.28 310.83 L455.77 311.42 L456.28 312.01 L456.78 312.59 L457.29 313.18 L457.81 313.77 L458.33 314.36 L458.85 314.95 L459.38 315.54 L459.91 316.13 L460.45 316.72 L460.99 317.31 L461.54 317.90 L462.09 318.49 L462.64 319.08 L463.20 319.67 L463.77 320.26 L464.34 320.85 L464.91 321.44 L465.48 322.03 L466.07 322.62 L466.65 323.21 L467.24 323.80 L467.84 324.39 L468.44 324.98 L469.04 325.57 L469.65 326.16 L470.26 326.75 L470.87 327.33 L471.49 327.92 L472.12 328.51 L472.75 329.10 L473.38 329.69 L474.02 330.28 L474.66 330.87 L475.31 331.46 L475.96 332.05 L476.61 332.64 L477.27 333.22 L477.93 333.81 L478.60 334.40 L479.27 334.99 L479.95 335.58 L480.63 336.16 L481.31 336.75 L482.00 337.34 L482.69 337.93 L483.39 338.51 L484.09 339.10 L484.79 339.69 L485.50 340.27 L486.21 340.86 L486.93 341.45 L487.65 342.03 L488.38 342.62" fill="none" stroke="#c2df23" stroke-width="1.39" stroke-dasharray="1.39 2.29"/>
<path d="M1142.60 195.30 L1142.17 195.81 L1141.75 196.32 L1141.33 196.84 L1140.90 197.36 L1140.48 197.88 L1140.07 198.41 L1139.65 198.94 L1139.24 199.48 L1138.82 200.01 L1138.41 200.56 L1138.00 201.10" fill="none" stroke="#c2df23" stroke-width="1.6"/>
<rect x="866.8" y="53.8" width="2.4" height="2.4" fill="#ff5a36"/><rect x="912.6" y="140.5" width="2.4" height="2.4" fill="#ff5a36"/><rect x="1027.7" y="102.8" width="2.4" height="2.4" fill="#ff5a36"/><rect x="1129.8" y="209.7" width="2.4" height="2.4" fill="#ff5a36"/><rect x="887.8" y="73.8" width="2.4" height="2.4" fill="#ff5a36"/><rect x="921.8" y="61.8" width="2.4" height="2.4" fill="#ff5a36"/><rect x="1028.7" y="124.8" width="2.4" height="2.4" fill="#ff5a36"/><rect x="1017.7" y="99.9" width="2.4" height="2.4" fill="#ff5a36"/><rect x="1136.8" y="199.9" width="2.4" height="2.4" fill="#ff5a36"/>
<path d="M363.9 246.2 h6 M366.9 243.2 v6 M366.1 246.7 h6 M369.1 243.7 v6 M380.3 245.8 h6 M383.3 242.8 v6 M392.3 243.6 h6 M395.3 240.6 v6 M1181.0 156.5 h6 M1184.0 153.5 v6 M1184.0 172.5 h6 M1187.0 169.5 v6 M1179.5 159.0 h6 M1182.5 156.0 v6 M465.9 351.1 h6 M468.9 348.1 v6 M483.7 343.3 h6 M486.7 340.3 v6" stroke="#ff0000" stroke-width="1.5" fill="none"/>
<path d="M556.7 145.0 Q566.7 142.2 576.7 147.3 M766.7 107.3 Q771.7 106.7 776.7 110.0 M791.7 126.0 Q805.0 118.5 818.3 115.0 M1042.0 75.8 Q1053.2 73.5 1064.5 79.3 M913.3 49.7 Q920.6 45.7 928.0 49.7 M917.2 128.0 Q938.2 102.6 959.2 101.2 M1126.7 130.0 Q1141.7 132.2 1156.7 138.3 M1228.3 198.3 Q1241.2 205.5 1254.0 212.7 M1321.7 218.3 Q1325.8 213.3 1330.0 208.3" fill="none" stroke="#8c8c8c" stroke-width="1.6"/>
<text x="374.5" y="247.5" fill="#fff" font-size="11" text-anchor="middle" style='font-family:"Liberation Sans",sans-serif;'>COM</text>
<text x="1179.7" y="162.9" fill="#fff" font-size="11" text-anchor="middle" style='font-family:"Liberation Sans",sans-serif;'>QUA</text>
<text x="487.0" y="347.2" fill="#fff" font-size="11" text-anchor="middle" style='font-family:"Liberation Sans",sans-serif;'>AHY</text>
<text x="1480.09" y="330.20" fill="#8c8c8c" font-size="10.8" style='font-family:"Liberation Sans",sans-serif;'>180</text><circle cx="1501.99" cy="322.60" r="1.05" fill="none" stroke="#8c8c8c" stroke-width="0.7"/><text x="1382.52" y="330.20" fill="#8c8c8c" font-size="10.8" style='font-family:"Liberation Sans",sans-serif;'>210</text><circle cx="1404.42" cy="322.60" r="1.05" fill="none" stroke="#8c8c8c" stroke-width="0.7"/><text x="1284.96" y="330.20" fill="#8c8c8c" font-size="10.8" style='font-family:"Liberation Sans",sans-serif;'>240</text><circle cx="1306.87" cy="322.60" r="1.05" fill="none" stroke="#8c8c8c" stroke-width="0.7"/><text x="1187.40" y="330.20" fill="#8c8c8c" font-size="10.8" style='font-family:"Liberation Sans",sans-serif;'>270</text><circle cx="1209.31" cy="322.60" r="1.05" fill="none" stroke="#8c8c8c" stroke-width="0.7"/><text x="1089.84" y="330.20" fill="#8c8c8c" font-size="10.8" style='font-family:"Liberation Sans",sans-serif;'>300</text><circle cx="1111.74" cy="322.60" r="1.05" fill="none" stroke="#8c8c8c" stroke-width="0.7"/><text x="992.28" y="330.20" fill="#8c8c8c" font-size="10.8" style='font-family:"Liberation Sans",sans-serif;'>330</text><circle cx="1014.18" cy="322.60" r="1.05" fill="none" stroke="#8c8c8c" stroke-width="0.7"/><text x="900.35" y="330.20" fill="#8c8c8c" font-size="10.8" style='font-family:"Liberation Sans",sans-serif;'>0</text><circle cx="911.00" cy="322.60" r="1.05" fill="none" stroke="#8c8c8c" stroke-width="0.7"/><text x="799.99" y="330.20" fill="#8c8c8c" font-size="10.8" style='font-family:"Liberation Sans",sans-serif;'>30</text><circle cx="816.24" cy="322.60" r="1.05" fill="none" stroke="#8c8c8c" stroke-width="0.7"/><text x="702.43" y="330.20" fill="#8c8c8c" font-size="10.8" style='font-family:"Liberation Sans",sans-serif;'>60</text><circle cx="718.68" cy="322.60" r="1.05" fill="none" stroke="#8c8c8c" stroke-width="0.7"/><text x="604.87" y="330.20" fill="#8c8c8c" font-size="10.8" style='font-family:"Liberation Sans",sans-serif;'>90</text><circle cx="621.12" cy="322.60" r="1.05" fill="none" stroke="#8c8c8c" stroke-width="0.7"/><text x="504.49" y="330.20" fill="#8c8c8c" font-size="10.8" style='font-family:"Liberation Sans",sans-serif;'>120</text><circle cx="526.39" cy="322.60" r="1.05" fill="none" stroke="#8c8c8c" stroke-width="0.7"/><text x="406.93" y="330.20" fill="#8c8c8c" font-size="10.8" style='font-family:"Liberation Sans",sans-serif;'>150</text><circle cx="428.83" cy="322.60" r="1.05" fill="none" stroke="#8c8c8c" stroke-width="0.7"/><text x="309.37" y="330.20" fill="#8c8c8c" font-size="10.8" style='font-family:"Liberation Sans",sans-serif;'>180</text><circle cx="331.26" cy="322.60" r="1.05" fill="none" stroke="#8c8c8c" stroke-width="0.7"/><text x="897.55" y="25.22" fill="#8c8c8c" font-size="10.8" style='font-family:"Liberation Sans",sans-serif;'>90</text><circle cx="913.80" cy="17.62" r="1.05" fill="none" stroke="#8c8c8c" stroke-width="0.7"/><text x="897.55" y="122.78" fill="#8c8c8c" font-size="10.8" style='font-family:"Liberation Sans",sans-serif;'>60</text><circle cx="913.80" cy="115.18" r="1.05" fill="none" stroke="#8c8c8c" stroke-width="0.7"/><text x="897.55" y="220.34" fill="#8c8c8c" font-size="10.8" style='font-family:"Liberation Sans",sans-serif;'>30</text><circle cx="913.80" cy="212.74" r="1.05" fill="none" stroke="#8c8c8c" stroke-width="0.7"/><text x="897.55" y="428.16" fill="#8c8c8c" font-size="10.8" style='font-family:"Liberation Sans",sans-serif;'>30</text><circle cx="913.80" cy="420.56" r="1.05" fill="none" stroke="#8c8c8c" stroke-width="0.7"/><text x="897.55" y="525.72" fill="#8c8c8c" font-size="10.8" style='font-family:"Liberation Sans",sans-serif;'>60</text><circle cx="913.80" cy="518.12" r="1.05" fill="none" stroke="#8c8c8c" stroke-width="0.7"/><text x="897.55" y="623.28" fill="#8c8c8c" font-size="10.8" style='font-family:"Liberation Sans",sans-serif;'>90</text><circle cx="913.80" cy="615.68" r="1.05" fill="none" stroke="#8c8c8c" stroke-width="0.7"/><path d="M1472.74 326.20 h6 M1475.74 323.20 v6 M1375.17 326.20 h6 M1378.17 323.20 v6 M1277.62 326.20 h6 M1280.62 323.20 v6 M1180.06 326.20 h6 M1183.06 323.20 v6 M1082.49 326.20 h6 M1085.49 323.20 v6 M984.93 326.20 h6 M987.93 323.20 v6 M893.00 326.20 h6 M896.00 323.20 v6 M792.64 326.20 h6 M795.64 323.20 v6 M695.08 326.20 h6 M698.08 323.20 v6 M597.52 326.20 h6 M600.52 323.20 v6 M497.14 326.20 h6 M500.14 323.20 v6 M399.58 326.20 h6 M402.58 323.20 v6 M302.01 326.20 h6 M305.01 323.20 v6 M890.20 21.22 h6 M893.20 18.22 v6 M890.20 118.78 h6 M893.20 115.78 v6 M890.20 216.34 h6 M893.20 213.34 v6 M890.20 424.16 h6 M890.20 521.72 h6 M890.20 619.28 h6" stroke="#8c8c8c" stroke-width="0.9" fill="none"/>
<text x="316" y="30.0" fill="#f0f0f0" font-size="14.1" style='font-family:"Liberation Mono",monospace;' xml:space="preserve">US001G</text>
<text x="316" y="42.8" fill="#f0f0f0" font-size="14.1" style='font-family:"Liberation Mono",monospace;' xml:space="preserve">Beg: 20260105 05:16:00 (sol = 284.51°)</text>
<text x="316" y="56.9" fill="#f0f0f0" font-size="14.1" style='font-family:"Liberation Mono",monospace;' xml:space="preserve">End: 20260105 10:58:21 (sol = 284.75°)</text>
<text x="316" y="69.8" fill="#f0f0f0" font-size="14.1" style='font-family:"Liberation Mono",monospace;' xml:space="preserve">--------------------------------------</text>
<text x="316" y="82.1" fill="#f0f0f0" font-size="14.1" style='font-family:"Liberation Mono",monospace;' xml:space="preserve">...: 12</text>
<text x="316" y="95.0" fill="#f0f0f0" font-size="14.1" style='font-family:"Liberation Mono",monospace;' xml:space="preserve">COM: 4</text>
<text x="316" y="108.9" fill="#f0f0f0" font-size="14.1" style='font-family:"Liberation Mono",monospace;' xml:space="preserve">QUA: 3</text>
<text x="316" y="121.8" fill="#f0f0f0" font-size="14.1" style='font-family:"Liberation Mono",monospace;' xml:space="preserve">AHY: 2</text>
<rect x="20.4" y="641.5" width="1764.9" height="201.0" fill="none" stroke="#fff" stroke-width="1.1"/>
<text transform="translate(148.40 642.76) rotate(-90)" text-anchor="end" fill="#5a5a5a" font-size="31" textLength="54.36" lengthAdjust="spacingAndGlyphs" style='font-family:"Liberation Sans",sans-serif;'>APR</text>
<text transform="translate(293.60 644.67) rotate(-90)" text-anchor="end" fill="#5a5a5a" font-size="31" textLength="57.26" lengthAdjust="spacingAndGlyphs" style='font-family:"Liberation Sans",sans-serif;'>MAY</text>
<text transform="translate(435.00 641.27) rotate(-90)" text-anchor="end" fill="#5a5a5a" font-size="31" textLength="50.13" lengthAdjust="spacingAndGlyphs" style='font-family:"Liberation Sans",sans-serif;'>JUN</text>
<text transform="translate(575.00 641.58) rotate(-90)" text-anchor="end" fill="#5a5a5a" font-size="31" textLength="43.81" lengthAdjust="spacingAndGlyphs" style='font-family:"Liberation Sans",sans-serif;'>JUL</text>
<text transform="translate(723.20 642.56) rotate(-90)" text-anchor="end" fill="#5a5a5a" font-size="31" textLength="58.07" lengthAdjust="spacingAndGlyphs" style='font-family:"Liberation Sans",sans-serif;'>AUG</text>
<text transform="translate(871.40 643.81) rotate(-90)" text-anchor="end" fill="#5a5a5a" font-size="31" textLength="50.37" lengthAdjust="spacingAndGlyphs" style='font-family:"Liberation Sans",sans-serif;'>SEP</text>
<text transform="translate(1015.00 643.23) rotate(-90)" text-anchor="end" fill="#5a5a5a" font-size="31" textLength="56.76" lengthAdjust="spacingAndGlyphs" style='font-family:"Liberation Sans",sans-serif;'>OCT</text>
<text transform="translate(1168.00 644.66) rotate(-90)" text-anchor="end" fill="#5a5a5a" font-size="31" textLength="59.95" lengthAdjust="spacingAndGlyphs" style='font-family:"Liberation Sans",sans-serif;'>NOV</text>
<text transform="translate(1316.80 645.15) rotate(-90)" text-anchor="end" fill="#5a5a5a" font-size="31" textLength="55.87" lengthAdjust="spacingAndGlyphs" style='font-family:"Liberation Sans",sans-serif;'>DEC</text>
<text transform="translate(1468.00 641.31) rotate(-90)" text-anchor="end" fill="#5a5a5a" font-size="31" textLength="47.92" lengthAdjust="spacingAndGlyphs" style='font-family:"Liberation Sans",sans-serif;'>JAN</text>
<text transform="translate(1626.60 645.69) rotate(-90)" text-anchor="end" fill="#5a5a5a" font-size="31" textLength="51.26" lengthAdjust="spacingAndGlyphs" style='font-family:"Liberation Sans",sans-serif;'>FEB</text>
<text transform="translate(1763.60 644.23) rotate(-90)" text-anchor="end" fill="#5a5a5a" font-size="31" textLength="61.05" lengthAdjust="spacingAndGlyphs" style='font-family:"Liberation Sans",sans-serif;'>MAR</text>
<line x1="106.2" y1="834.00" x2="129.8" y2="834.00" stroke="#c2df23" stroke-width="4.17"/><line x1="164.9" y1="834.00" x2="345.0" y2="834.00" stroke="#c2df23" stroke-width="4.17"/><line x1="365.9" y1="834.00" x2="624.6" y2="834.00" stroke="#c2df23" stroke-width="4.17"/><line x1="636.1" y1="834.00" x2="786.8" y2="834.00" stroke="#c2df23" stroke-width="4.17"/><line x1="807.0" y1="834.00" x2="899.9" y2="834.00" stroke="#c2df23" stroke-width="4.17"/><line x1="919.9" y1="834.00" x2="972.8" y2="834.00" stroke="#c2df23" stroke-width="4.17"/><line x1="983.9" y1="834.00" x2="1065.9" y2="834.00" stroke="#c2df23" stroke-width="4.17"/><line x1="1081.9" y1="834.00" x2="1203.9" y2="834.00" stroke="#c2df23" stroke-width="4.17"/><line x1="1244.1" y1="834.00" x2="1326.1" y2="834.00" stroke="#c2df23" stroke-width="4.17"/><line x1="1336.8" y1="834.00" x2="1355.9" y2="834.00" stroke="#c2df23" stroke-width="4.17"/><line x1="1381.0" y1="834.00" x2="1443.9" y2="834.00" stroke="#c2df23" stroke-width="4.17"/><line x1="1459.0" y1="834.00" x2="1511.9" y2="834.00" stroke="#c2df23" stroke-width="4.17"/><line x1="1523.0" y1="834.00" x2="1547.0" y2="834.00" stroke="#c2df23" stroke-width="4.17"/><line x1="1724.1" y1="834.00" x2="1748.1" y2="834.00" stroke="#c2df23" stroke-width="4.17"/><line x1="1758.0" y1="834.00" x2="1782.0" y2="834.00" stroke="#c2df23" stroke-width="4.17"/><line x1="164.9" y1="817.66" x2="188.9" y2="817.66" stroke="#86d549" stroke-width="4.17"/><line x1="224.0" y1="817.66" x2="286.8" y2="817.66" stroke="#86d549" stroke-width="4.17"/><line x1="312.1" y1="817.66" x2="340.8" y2="817.66" stroke="#86d549" stroke-width="4.17"/><line x1="365.9" y1="817.66" x2="492.8" y2="817.66" stroke="#86d549" stroke-width="4.17"/><line x1="507.9" y1="817.66" x2="653.9" y2="817.66" stroke="#86d549" stroke-width="4.17"/><line x1="703.9" y1="817.66" x2="737.7" y2="817.66" stroke="#86d549" stroke-width="4.17"/><line x1="773.0" y1="817.66" x2="845.9" y2="817.66" stroke="#86d549" stroke-width="4.17"/><line x1="871.0" y1="817.66" x2="987.9" y2="817.66" stroke="#86d549" stroke-width="4.17"/><line x1="1003.0" y1="817.66" x2="1017.0" y2="817.66" stroke="#86d549" stroke-width="4.17"/><line x1="1062.1" y1="817.66" x2="1213.0" y2="817.66" stroke="#86d549" stroke-width="4.17"/><line x1="1244.1" y1="817.66" x2="1267.0" y2="817.66" stroke="#86d549" stroke-width="4.17"/><line x1="1293.0" y1="817.66" x2="1315.9" y2="817.66" stroke="#86d549" stroke-width="4.17"/><line x1="1342.1" y1="817.66" x2="1365.0" y2="817.66" stroke="#86d549" stroke-width="4.17"/><line x1="1385.9" y1="817.66" x2="1428.8" y2="817.66" stroke="#86d549" stroke-width="4.17"/><line x1="1459.0" y1="817.66" x2="1483.0" y2="817.66" stroke="#86d549" stroke-width="4.17"/><line x1="1547.9" y1="817.66" x2="1571.0" y2="817.66" stroke="#86d549" stroke-width="4.17"/><line x1="164.9" y1="801.32" x2="188.9" y2="801.32" stroke="#52c569" stroke-width="4.17"/><line x1="257.9" y1="801.32" x2="487.9" y2="801.32" stroke="#52c569" stroke-width="4.17"/><line x1="507.9" y1="801.32" x2="614.6" y2="801.32" stroke="#52c569" stroke-width="4.17"/><line x1="625.9" y1="801.32" x2="717.9" y2="801.32" stroke="#52c569" stroke-width="4.17"/><line x1="729.0" y1="801.32" x2="825.9" y2="801.32" stroke="#52c569" stroke-width="4.17"/><line x1="948.8" y1="801.32" x2="1149.9" y2="801.32" stroke="#52c569" stroke-width="4.17"/><line x1="1159.9" y1="801.32" x2="1247.9" y2="801.32" stroke="#52c569" stroke-width="4.17"/><line x1="1258.1" y1="801.32" x2="1443.9" y2="801.32" stroke="#52c569" stroke-width="4.17"/><line x1="1459.0" y1="801.32" x2="1483.0" y2="801.32" stroke="#52c569" stroke-width="4.17"/><line x1="1553.0" y1="801.32" x2="1575.9" y2="801.32" stroke="#52c569" stroke-width="4.17"/><line x1="194.0" y1="784.98" x2="217.8" y2="784.98" stroke="#2ab07f" stroke-width="4.17"/><line x1="321.9" y1="784.98" x2="506.8" y2="784.98" stroke="#2ab07f" stroke-width="4.17"/><line x1="517.9" y1="784.98" x2="541.9" y2="784.98" stroke="#2ab07f" stroke-width="4.17"/><line x1="557.0" y1="784.98" x2="683.9" y2="784.98" stroke="#2ab07f" stroke-width="4.17"/><line x1="807.0" y1="784.98" x2="830.8" y2="784.98" stroke="#2ab07f" stroke-width="4.17"/><line x1="953.9" y1="784.98" x2="972.8" y2="784.98" stroke="#2ab07f" stroke-width="4.17"/><line x1="988.8" y1="784.98" x2="1124.8" y2="784.98" stroke="#2ab07f" stroke-width="4.17"/><line x1="1155.0" y1="784.98" x2="1217.9" y2="784.98" stroke="#2ab07f" stroke-width="4.17"/><line x1="1244.1" y1="784.98" x2="1267.0" y2="784.98" stroke="#2ab07f" stroke-width="4.17"/><line x1="1317.2" y1="784.98" x2="1340.8" y2="784.98" stroke="#2ab07f" stroke-width="4.17"/><line x1="1395.9" y1="784.98" x2="1418.8" y2="784.98" stroke="#2ab07f" stroke-width="4.17"/><line x1="1464.1" y1="784.98" x2="1650.0" y2="784.98" stroke="#2ab07f" stroke-width="4.17"/><line x1="340.8" y1="768.64" x2="369.9" y2="768.64" stroke="#1e9b8a" stroke-width="4.17"/><line x1="409.9" y1="768.64" x2="447.9" y2="768.64" stroke="#1e9b8a" stroke-width="4.17"/><line x1="469.0" y1="768.64" x2="493.0" y2="768.64" stroke="#1e9b8a" stroke-width="4.17"/><line x1="527.9" y1="768.64" x2="546.1" y2="768.64" stroke="#1e9b8a" stroke-width="4.17"/><line x1="561.9" y1="768.64" x2="590.8" y2="768.64" stroke="#1e9b8a" stroke-width="4.17"/><line x1="615.9" y1="768.64" x2="648.8" y2="768.64" stroke="#1e9b8a" stroke-width="4.17"/><line x1="959.0" y1="768.64" x2="987.9" y2="768.64" stroke="#1e9b8a" stroke-width="4.17"/><line x1="1062.1" y1="768.64" x2="1085.9" y2="768.64" stroke="#1e9b8a" stroke-width="4.17"/><line x1="1101.0" y1="768.64" x2="1125.0" y2="768.64" stroke="#1e9b8a" stroke-width="4.17"/><line x1="1159.9" y1="768.64" x2="1193.9" y2="768.64" stroke="#1e9b8a" stroke-width="4.17"/><line x1="1249.0" y1="768.64" x2="1271.9" y2="768.64" stroke="#1e9b8a" stroke-width="4.17"/><line x1="1425.0" y1="768.64" x2="1511.9" y2="768.64" stroke="#1e9b8a" stroke-width="4.17"/><line x1="419.9" y1="752.30" x2="443.9" y2="752.30" stroke="#25858e" stroke-width="4.17"/><line x1="533.0" y1="752.30" x2="555.9" y2="752.30" stroke="#25858e" stroke-width="4.17"/><line x1="566.8" y1="752.30" x2="590.8" y2="752.30" stroke="#25858e" stroke-width="4.17"/><line x1="620.8" y1="752.30" x2="742.8" y2="752.30" stroke="#25858e" stroke-width="4.17"/><line x1="969.0" y1="752.30" x2="1134.8" y2="752.30" stroke="#25858e" stroke-width="4.17"/><line x1="1185.0" y1="752.30" x2="1345.9" y2="752.30" stroke="#25858e" stroke-width="4.17"/><line x1="1469.0" y1="752.30" x2="1493.0" y2="752.30" stroke="#25858e" stroke-width="4.17"/><line x1="429.9" y1="735.96" x2="453.0" y2="735.96" stroke="#2d708e" stroke-width="4.17"/><line x1="577.0" y1="735.96" x2="733.0" y2="735.96" stroke="#2d708e" stroke-width="4.17"/><line x1="993.9" y1="735.96" x2="1105.0" y2="735.96" stroke="#2d708e" stroke-width="4.17"/><line x1="1116.1" y1="735.96" x2="1222.8" y2="735.96" stroke="#2d708e" stroke-width="4.17"/><line x1="1263.0" y1="735.96" x2="1291.9" y2="735.96" stroke="#2d708e" stroke-width="4.17"/><line x1="1489.0" y1="735.96" x2="1511.9" y2="735.96" stroke="#2d708e" stroke-width="4.17"/><line x1="591.9" y1="719.62" x2="615.0" y2="719.62" stroke="#38588c" stroke-width="4.17"/><line x1="655.0" y1="719.62" x2="771.9" y2="719.62" stroke="#38588c" stroke-width="4.17"/><line x1="1072.1" y1="719.62" x2="1242.8" y2="719.62" stroke="#38588c" stroke-width="4.17"/><line x1="1263.0" y1="719.62" x2="1287.0" y2="719.62" stroke="#38588c" stroke-width="4.17"/><line x1="595.7" y1="703.28" x2="733.0" y2="703.28" stroke="#433e85" stroke-width="4.17"/><line x1="1092.1" y1="703.28" x2="1119.9" y2="703.28" stroke="#433e85" stroke-width="4.17"/><line x1="1199.9" y1="703.28" x2="1222.8" y2="703.28" stroke="#433e85" stroke-width="4.17"/><line x1="1273.0" y1="703.28" x2="1326.1" y2="703.28" stroke="#433e85" stroke-width="4.17"/><line x1="1111.0" y1="686.94" x2="1134.8" y2="686.94" stroke="#482173" stroke-width="4.17"/>
<path d="M72.9 842.5 L72.9 641.5 M216.9 842.5 L216.9 641.5 M363.9 842.5 L363.9 641.5 M503.9 842.5 L503.9 641.5 M649.9 842.5 L649.9 641.5 M795.9 842.5 L795.9 641.5 M938.8 842.5 L938.8 641.5 M1089.9 842.5 L1089.9 641.5 M1237.9 842.5 L1237.9 641.5 M1391.9 842.5 L1391.9 641.5 M1546.8 842.5 L1546.8 641.5 M1686.0 842.5 L1686.0 641.5" stroke="#666" stroke-width="1.8" stroke-dasharray="1.8 3.7" fill="none"/>
<path d="M113.7 834.00 h8.2 M117.8 829.90 v8.2 M240.5 834.00 h8.2 M244.6 829.90 v8.2 M510.9 834.00 h8.2 M515.0 829.90 v8.2 M706.5 834.00 h8.2 M710.6 829.90 v8.2 M833.6 834.00 h8.2 M837.7 829.90 v8.2 M961.6 834.00 h8.2 M965.7 829.90 v8.2 M986.5 834.00 h8.2 M990.6 829.90 v8.2 M1116.5 834.00 h8.2 M1120.6 829.90 v8.2 M1295.8 834.00 h8.2 M1299.9 829.90 v8.2 M1341.6 834.00 h8.2 M1345.7 829.90 v8.2 M1412.5 834.00 h8.2 M1416.6 829.90 v8.2 M1481.6 834.00 h8.2 M1485.7 829.90 v8.2 M1530.5 834.00 h8.2 M1534.6 829.90 v8.2 M1732.0 834.00 h8.2 M1736.1 829.90 v8.2 M1765.9 834.00 h8.2 M1770.0 829.90 v8.2 M172.6 817.66 h8.2 M176.7 813.56 v8.2 M255.3 817.66 h8.2 M259.4 813.56 v8.2 M323.6 817.66 h8.2 M327.7 813.56 v8.2 M437.9 817.66 h8.2 M442.0 813.56 v8.2 M598.7 817.66 h8.2 M602.8 813.56 v8.2 M716.5 817.66 h8.2 M720.6 813.56 v8.2 M793.6 817.66 h8.2 M797.7 813.56 v8.2 M939.8 817.66 h8.2 M943.9 813.56 v8.2 M1005.3 817.66 h8.2 M1009.4 813.56 v8.2 M1152.5 817.66 h8.2 M1156.6 813.56 v8.2 M1250.9 817.66 h8.2 M1255.0 813.56 v8.2 M1299.8 817.66 h8.2 M1303.9 813.56 v8.2 M1349.3 817.66 h8.2 M1353.4 813.56 v8.2 M1402.7 817.66 h8.2 M1406.8 813.56 v8.2 M1466.7 817.66 h8.2 M1470.8 813.56 v8.2 M1554.7 817.66 h8.2 M1558.8 813.56 v8.2 M174.6 801.32 h8.2 M178.7 797.22 v8.2 M378.7 801.32 h8.2 M382.8 797.22 v8.2 M544.7 801.32 h8.2 M548.8 797.22 v8.2 M682.7 801.32 h8.2 M686.8 797.22 v8.2 M741.6 801.32 h8.2 M745.7 797.22 v8.2 M1074.5 801.32 h8.2 M1078.6 797.22 v8.2 M1216.5 801.32 h8.2 M1220.6 797.22 v8.2 M1304.7 801.32 h8.2 M1308.8 797.22 v8.2 M1466.7 801.32 h8.2 M1470.8 797.22 v8.2 M1559.8 801.32 h8.2 M1563.9 797.22 v8.2 M201.5 784.98 h8.2 M205.6 780.88 v8.2 M400.5 784.98 h8.2 M404.6 780.88 v8.2 M525.3 784.98 h8.2 M529.4 780.88 v8.2 M638.7 784.98 h8.2 M642.8 780.88 v8.2 M814.9 784.98 h8.2 M819.0 780.88 v8.2 M959.8 784.98 h8.2 M963.9 780.88 v8.2 M1040.5 784.98 h8.2 M1044.6 780.88 v8.2 M1187.6 784.98 h8.2 M1191.7 780.88 v8.2 M1250.9 784.98 h8.2 M1255.0 780.88 v8.2 M1324.7 784.98 h8.2 M1328.8 780.88 v8.2 M1402.7 784.98 h8.2 M1406.8 780.88 v8.2 M1545.3 784.98 h8.2 M1549.4 780.88 v8.2 M355.3 768.64 h8.2 M359.4 764.54 v8.2 M426.5 768.64 h8.2 M430.6 764.54 v8.2 M476.9 768.64 h8.2 M481.0 764.54 v8.2 M535.3 768.64 h8.2 M539.4 764.54 v8.2 M570.9 768.64 h8.2 M575.0 764.54 v8.2 M630.7 768.64 h8.2 M634.8 764.54 v8.2 M973.8 768.64 h8.2 M977.9 764.54 v8.2 M1069.3 768.64 h8.2 M1073.4 764.54 v8.2 M1108.7 768.64 h8.2 M1112.8 764.54 v8.2 M1177.6 768.64 h8.2 M1181.7 764.54 v8.2 M1255.6 768.64 h8.2 M1259.7 764.54 v8.2 M1466.7 768.64 h8.2 M1470.8 764.54 v8.2 M427.6 752.30 h8.2 M431.7 748.20 v8.2 M539.8 752.30 h8.2 M543.9 748.20 v8.2 M574.7 752.30 h8.2 M578.8 748.20 v8.2 M703.6 752.30 h8.2 M707.7 748.20 v8.2 M1094.7 752.30 h8.2 M1098.8 748.20 v8.2 M1270.9 752.30 h8.2 M1275.0 748.20 v8.2 M1476.7 752.30 h8.2 M1480.8 748.20 v8.2 M437.6 735.96 h8.2 M441.7 731.86 v8.2 M630.7 735.96 h8.2 M634.8 731.86 v8.2 M1038.7 735.96 h8.2 M1042.8 731.86 v8.2 M1167.6 735.96 h8.2 M1171.7 731.86 v8.2 M1274.7 735.96 h8.2 M1278.8 731.86 v8.2 M1496.9 735.96 h8.2 M1501.0 731.86 v8.2 M598.7 719.62 h8.2 M602.8 715.52 v8.2 M726.9 719.62 h8.2 M731.0 715.52 v8.2 M1187.6 719.62 h8.2 M1191.7 715.52 v8.2 M1270.7 719.62 h8.2 M1274.8 715.52 v8.2 M687.6 703.28 h8.2 M691.7 699.18 v8.2 M1101.8 703.28 h8.2 M1105.9 699.18 v8.2 M1206.5 703.28 h8.2 M1210.6 699.18 v8.2 M1299.8 703.28 h8.2 M1303.9 699.18 v8.2 M1118.7 686.94 h8.2 M1122.8 682.84 v8.2" stroke="#fff" stroke-width="2.2" fill="none"/>
<g fill="#eeeeee" font-size="10.6" style='font-family:"Liberation Sans",sans-serif;'><text x="118.0" y="831.70" text-anchor="middle">KSE</text><text x="254.9" y="831.70" text-anchor="middle">ETA</text><text x="495.2" y="831.70" text-anchor="middle">NZC</text><text x="711.5" y="831.70" text-anchor="middle">NDA</text><text x="853.5" y="831.70" text-anchor="middle">SPE</text><text x="946.3" y="831.70" text-anchor="middle">ARD</text><text x="1024.9" y="831.70" text-anchor="middle">EGE</text><text x="1142.9" y="831.70" text-anchor="middle">NTA</text><text x="1285.1" y="831.70" text-anchor="middle">MON</text><text x="1346.3" y="831.70" text-anchor="middle">URS</text><text x="1412.5" y="831.70" text-anchor="middle">AHY</text><text x="1485.5" y="831.70" text-anchor="middle">GUM</text><text x="1535.0" y="831.70" text-anchor="middle">OHY</text><text x="1736.1" y="831.70" text-anchor="middle">XHE</text><text x="1770.0" y="831.70" text-anchor="middle">EVI</text><text x="176.9" y="815.36" text-anchor="middle">AVB</text><text x="255.4" y="815.36" text-anchor="middle">ELY</text><text x="326.5" y="815.36" text-anchor="middle">CAM</text><text x="429.4" y="815.36" text-anchor="middle">SSG</text><text x="580.9" y="815.36" text-anchor="middle">PCA</text><text x="720.8" y="815.36" text-anchor="middle">AUD</text><text x="809.5" y="815.36" text-anchor="middle">AUR</text><text x="929.5" y="815.36" text-anchor="middle">DSX</text><text x="1010.0" y="815.36" text-anchor="middle">OCU</text><text x="1137.5" y="815.36" text-anchor="middle">OER</text><text x="1255.5" y="815.36" text-anchor="middle">DKD</text><text x="1304.5" y="815.36" text-anchor="middle">DSV</text><text x="1353.5" y="815.36" text-anchor="middle">ALY</text><text x="1407.3" y="815.36" text-anchor="middle">JLE</text><text x="1471.0" y="815.36" text-anchor="middle">SCC</text><text x="1559.5" y="815.36" text-anchor="middle">FEV</text><text x="176.9" y="799.02" text-anchor="middle">LYR</text><text x="372.9" y="799.02" text-anchor="middle">JMC</text><text x="561.2" y="799.02" text-anchor="middle">JPE</text><text x="671.9" y="799.02" text-anchor="middle">PAU</text><text x="777.5" y="799.02" text-anchor="middle">NIA</text><text x="1049.3" y="799.02" text-anchor="middle">STA</text><text x="1203.9" y="799.02" text-anchor="middle">NOO</text><text x="1351.0" y="799.02" text-anchor="middle">COM</text><text x="1471.0" y="799.02" text-anchor="middle">NCC</text><text x="1564.5" y="799.02" text-anchor="middle">FED</text><text x="205.9" y="782.68" text-anchor="middle">HVI</text><text x="414.4" y="782.68" text-anchor="middle">ARI</text><text x="529.9" y="782.68" text-anchor="middle">SZC</text><text x="620.5" y="782.68" text-anchor="middle">CAP</text><text x="818.9" y="782.68" text-anchor="middle">NUE</text><text x="963.3" y="782.68" text-anchor="middle">OCT</text><text x="1056.8" y="782.68" text-anchor="middle">ORI</text><text x="1186.5" y="782.68" text-anchor="middle">AMO</text><text x="1255.5" y="782.68" text-anchor="middle">DPC</text><text x="1329.0" y="782.68" text-anchor="middle">XVI</text><text x="1407.3" y="782.68" text-anchor="middle">QUA</text><text x="1557.0" y="782.68" text-anchor="middle">AAN</text><text x="355.4" y="766.34" text-anchor="middle">TAH</text><text x="428.9" y="766.34" text-anchor="middle">JEA</text><text x="481.0" y="766.34" text-anchor="middle">JIP</text><text x="537.0" y="766.34" text-anchor="middle">PPS</text><text x="576.3" y="766.34" text-anchor="middle">ZCS</text><text x="632.3" y="766.34" text-anchor="middle">GDR</text><text x="973.5" y="766.34" text-anchor="middle">DRA</text><text x="1074.0" y="766.34" text-anchor="middle">LUM</text><text x="1113.0" y="766.34" text-anchor="middle">RPU</text><text x="1176.9" y="766.34" text-anchor="middle">THA</text><text x="1260.5" y="766.34" text-anchor="middle">PSU</text><text x="1468.5" y="766.34" text-anchor="middle">XCB</text><text x="431.9" y="750.00" text-anchor="middle">JRC</text><text x="544.5" y="750.00" text-anchor="middle">CAN</text><text x="578.8" y="750.00" text-anchor="middle">FAN</text><text x="681.8" y="750.00" text-anchor="middle">PER</text><text x="1051.9" y="750.00" text-anchor="middle">CTA</text><text x="1265.5" y="750.00" text-anchor="middle">HYD</text><text x="1481.0" y="750.00" text-anchor="middle">XUM</text><text x="441.4" y="733.66" text-anchor="middle">COR</text><text x="655.0" y="733.66" text-anchor="middle">SDA</text><text x="1049.5" y="733.66" text-anchor="middle">LMI</text><text x="1169.4" y="733.66" text-anchor="middle">LEO</text><text x="1277.5" y="733.66" text-anchor="middle">EHY</text><text x="1500.5" y="733.66" text-anchor="middle">ECV</text><text x="603.5" y="717.32" text-anchor="middle">JXA</text><text x="713.5" y="717.32" text-anchor="middle">KCG</text><text x="1157.4" y="717.32" text-anchor="middle">AND</text><text x="1275.0" y="717.32" text-anchor="middle">DAD</text><text x="664.4" y="700.98" text-anchor="middle">ERI</text><text x="1106.0" y="700.98" text-anchor="middle">SLD</text><text x="1211.3" y="700.98" text-anchor="middle">ORS</text><text x="1299.5" y="700.98" text-anchor="middle">GEM</text><text x="1122.9" y="684.64" text-anchor="middle">KUM</text></g>
<line x1="1416.0" y1="642.5" x2="1416.0" y2="842.5" stroke="#ff0000" stroke-width="2.6" stroke-dasharray="5.1 2.15" stroke-dashoffset="3.7"/>
<path d="M20.4 842.5 v4.9 M265.4 842.5 v4.9 M510.5 842.5 v4.9 M755.5 842.5 v4.9 M1000.6 842.5 v4.9 M1245.7 842.5 v4.9 M1490.7 842.5 v4.9 M1735.8 842.5 v4.9" stroke="#fff" stroke-width="1.1"/>
<g fill="#fff" font-size="14" style='font-family:"Liberation Sans",sans-serif;'><text x="20.4" y="862" text-anchor="middle" textLength="8.49" lengthAdjust="spacingAndGlyphs">0</text><text x="265.4" y="862" text-anchor="middle" textLength="16.97" lengthAdjust="spacingAndGlyphs">50</text><text x="510.5" y="862" text-anchor="middle" textLength="25.46" lengthAdjust="spacingAndGlyphs">100</text><text x="755.5" y="862" text-anchor="middle" textLength="25.46" lengthAdjust="spacingAndGlyphs">150</text><text x="1000.6" y="862" text-anchor="middle" textLength="25.46" lengthAdjust="spacingAndGlyphs">200</text><text x="1245.7" y="862" text-anchor="middle" textLength="25.46" lengthAdjust="spacingAndGlyphs">250</text><text x="1490.7" y="862" text-anchor="middle" textLength="25.46" lengthAdjust="spacingAndGlyphs">300</text><text x="1735.8" y="862" text-anchor="middle" textLength="25.46" lengthAdjust="spacingAndGlyphs">350</text></g>
<text x="902.35" y="881.9" text-anchor="middle" fill="#fff" font-size="14" textLength="146.6" lengthAdjust="spacingAndGlyphs" style='font-family:"Liberation Sans",sans-serif;'>Solar longitude (deg)</text>
</svg></body></html>
